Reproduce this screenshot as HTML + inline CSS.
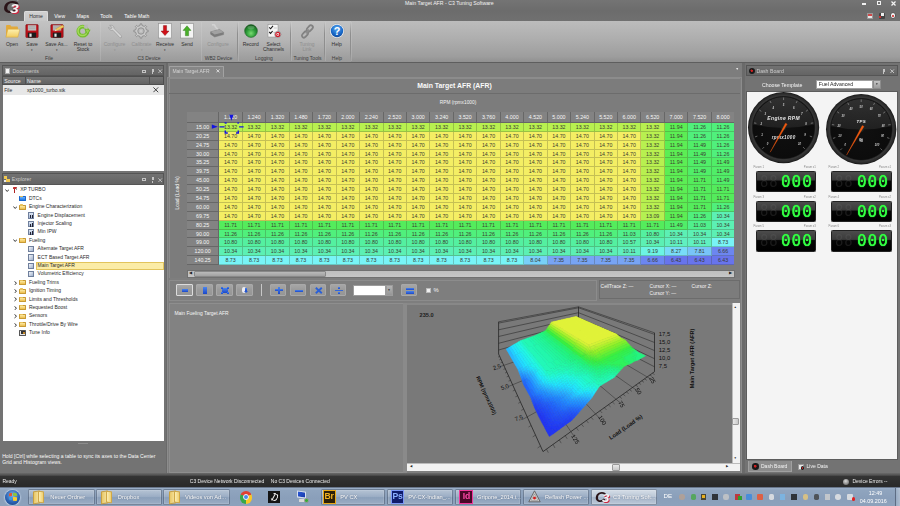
<!DOCTYPE html>
<html lang="en">
<head>
<meta charset="utf-8">
<title>Main Target AFR - C3 Tuning Software</title>
<style>
*{box-sizing:border-box;margin:0;padding:0}
html,body{width:900px;height:506px;overflow:hidden}
body{position:relative;background:#7d7d7d;font-family:"Liberation Sans",sans-serif;font-size:5px;color:#fff;line-height:1.15}
#app{position:absolute;left:0;top:0;width:900px;height:506px;overflow:hidden;filter:blur(0.45px)}
.a{position:absolute;white-space:nowrap}
.c{text-align:center}
/* title + ribbon */
#title{left:0;top:0;width:900px;height:21px;background:linear-gradient(#747474,#6c6c6c 50%,#707070)}
#ribbon{left:0;top:21px;width:900px;height:41.5px;background:linear-gradient(#bcbcbc,#adadad 45%,#9d9d9d 85%,#8e8e8e)}
#ribbonL{left:0;top:21px;width:351px;height:41px;background:linear-gradient(#c3c3c3,#b6b6b6 45%,#a4a4a4 80%,#9a9a9a)}
.gsep{top:22px;width:0.7px;height:39px;background:linear-gradient(rgba(120,120,120,0),#8e8e8e 30%,#8e8e8e 80%,rgba(120,120,120,0));box-shadow:0.7px 0 0 rgba(220,220,220,.3)}
.glab{top:56.4px;color:#3c3c3c;font-size:5px;text-align:center}
.rb{top:41.7px;color:#2f2f2f;font-size:5px;text-align:center;line-height:5.6px}
.rb.dis{color:#8f8f8f}
.tab{top:13.5px;font-size:5.1px;color:#fff}
/* panels */
.phead{height:11px;background:linear-gradient(#727272,#646464);border:0.5px solid #555;color:#cccccc;font-size:5.2px;line-height:10.5px}
.white{background:#fff}
/* grid */
.grid{position:absolute;font-size:5.3px}
.grid div{position:absolute;text-align:center;white-space:nowrap;overflow:hidden}
.hc{background:#838383;color:#f6f6f6;border-right:0.6px solid #676767;border-bottom:0.6px solid #676767}
.hc.rh{text-align:center;padding-left:0}
.dc{color:#3c3c30;border-right:0.5px solid rgba(60,60,40,.26);border-bottom:0.5px solid rgba(60,60,40,.26);line-height:9.3px}
.tbtn{top:284.3px;width:16.5px;height:11.7px;border:0.6px solid #a8a8a8;border-radius:1px;background:linear-gradient(#a6a6a6,#9a9a9a 50%,#969696)}
.tbtn i{position:absolute;background:linear-gradient(#4a84ec,#1c48c8)}
/* tree */
.tr{left:0;height:7.75px;font-size:5px;color:#2a2a2a;line-height:7.75px}
.fold{position:absolute;width:6.4px;height:5px;top:1.5px;background:linear-gradient(#fbe9a4,#eebe4c);border:0.4px solid #c89a34;border-radius:0.6px}
.fold:before{content:"";position:absolute;left:-0.4px;top:-1.3px;width:3px;height:1.2px;background:#e9c25a;border-radius:0.5px 0.5px 0 0}
.doc{position:absolute;width:5.2px;height:6.2px;top:0.8px;background:linear-gradient(135deg,#f4f6fa,#9fb0cc);border:0.4px solid #6f7f9c}
.arr{position:absolute;top:0;font-size:4px;color:#333}
/* taskbar */
#task{left:0;top:487px;width:900px;height:19px;background:linear-gradient(#a2b6ce,#8fa4be 18%,#8a9fba 60%,#8da2bc)}
.tb{top:488.6px;height:16.6px;border:0.6px solid rgba(60,75,100,.5);border-radius:1.5px;background:linear-gradient(rgba(255,255,255,.34),rgba(255,255,255,.14) 48%,rgba(255,255,255,.02) 52%,rgba(255,255,255,.12));box-shadow:inset 0 0 0 0.5px rgba(255,255,255,.22);color:#fff;font-size:5.7px;line-height:15.8px;text-shadow:0 0 1.2px rgba(40,50,70,.55)}
.tb span{position:absolute;top:0}
</style>
</head>
<body>
<div id="app">
<div id="title" class="a"></div>
<div class="a" style="left:405px;top:1.3px;font-size:5.2px;color:#f2f2f2">Main Target AFR - C3 Tuning Software</div>
<!-- logo -->
<div class="a" style="left:2.6px;top:-1.2px;font-size:16.5px;font-weight:bold;font-style:italic;color:#2a1418;line-height:16px;letter-spacing:-1px;transform:scaleX(1.3);transform-origin:0 0">C</div>
<div class="a" style="left:9.6px;top:3px;font-size:12.5px;font-weight:bold;font-style:italic;color:#f4f4f4;line-height:13px;text-shadow:0.9px 0.7px 0 #d02840;transform:scaleX(1.25);transform-origin:0 0">3</div>
<div class="a" style="left:17px;top:0.2px;font-size:4px;color:#ddd;letter-spacing:0.3px">"</div>
<!-- window controls -->
<div class="a" style="left:862px;top:3.4px;width:3.8px;height:1.4px;background:#f0f0f0"></div>
<div class="a" style="left:877.2px;top:1.2px;width:4.2px;height:3.8px;border:0.9px solid #f0f0f0;border-top-width:1.4px"></div>
<svg class="a" style="left:890.8px;top:0.8px" width="5" height="5" viewBox="0 0 5 5"><path d="M0.5 0.5L4.5 4.5M4.5 0.5L0.5 4.5" stroke="#f4f4f4" stroke-width="1.2"/></svg>
<!-- small right icons -->
<div class="a" style="left:866.5px;top:12.5px;width:6px;height:6px;background:#e8e8e8;border:0.5px solid #999"><div class="a" style="left:0.8px;top:0.8px;width:3.6px;height:2px;background:#d04848"></div></div>
<div class="a" style="left:878.5px;top:12.5px;width:6.4px;height:6px;background:#444;border-radius:1px"><div class="a" style="left:2.6px;top:0.6px;width:3px;height:2.6px;background:#eee"></div><div class="a" style="left:0.4px;top:3.6px;width:2px;height:1.6px;background:#d03030"></div></div>
<div class="a" style="left:889.5px;top:12.3px;width:6.6px;height:6.4px;background:#f0f0f0;border-radius:3px;border:0.6px solid #555"><div class="a" style="left:1.8px;top:1.6px;width:2px;height:2px;background:#d02020;border-radius:1px"></div></div>
<!-- ribbon -->
<div id="ribbon" class="a"></div>
<div id="ribbonL" class="a"></div>
<div class="a" style="left:0;top:62px;width:900px;height:1.2px;background:#5e5e5e"></div>
<div class="a" style="left:24.2px;top:11px;width:23.6px;height:10.4px;background:linear-gradient(#d0d0d0,#c6c6c6);border:0.5px solid #dcdcdc;border-bottom:0;border-radius:1.5px 1.5px 0 0"></div>
<div class="a tab" style="left:29.3px;color:#303030">Home</div>
<div class="a tab" style="left:54.2px">View</div>
<div class="a tab" style="left:76.5px">Maps</div>
<div class="a tab" style="left:100.3px">Tools</div>
<div class="a tab" style="left:124.3px">Table Math</div>
<div class="a gsep" style="left:98.5px"></div>
<div class="a gsep" style="left:199.8px"></div>
<div class="a gsep" style="left:237.3px"></div>
<div class="a gsep" style="left:290.3px"></div>
<div class="a gsep" style="left:324.3px"></div>
<div class="a gsep" style="left:350px"></div>
<div class="a glab" style="left:29px;width:40px">File</div>
<div class="a glab" style="left:129px;width:40px">C3 Device</div>
<div class="a glab" style="left:198.5px;width:40px">WB2 Device</div>
<div class="a glab" style="left:244px;width:40px">Logging</div>
<div class="a glab" style="left:287.5px;width:40px">Tuning Tools</div>
<div class="a glab" style="left:317px;width:40px">Help</div>
<!-- ribbon button labels -->
<div class="a rb" style="left:-8px;width:40px">Open</div>
<div class="a rb" style="left:12px;width:40px">Save<br><span style="font-size:3px;position:relative;top:0px">&#9662;</span></div>
<div class="a rb" style="left:36.5px;width:40px">Save As...<br><span style="font-size:3px;position:relative;top:0px">&#9662;</span></div>
<div class="a rb" style="left:63px;width:40px">Reset to<br>Stock</div>
<div class="a rb dis" style="left:94.5px;width:40px">Configure<br><span style="font-size:3px;position:relative;top:0px">&#9662;</span></div>
<div class="a rb dis" style="left:121.5px;width:40px">Calibrate<br><span style="font-size:3px;position:relative;top:0px">&#9662;</span></div>
<div class="a rb" style="left:145px;width:40px">Receive<br><span style="font-size:3px;position:relative;top:0px">&#9662;</span></div>
<div class="a rb" style="left:167px;width:40px">Send</div>
<div class="a rb dis" style="left:198px;width:40px">Configure</div>
<div class="a rb" style="left:230.7px;width:40px">Record</div>
<div class="a rb" style="left:253.5px;width:40px">Select<br>Channels</div>
<div class="a rb dis" style="left:287px;width:40px">Tuning<br>Link</div>
<div class="a rb" style="left:316.7px;width:40px">Help</div>
<!-- ribbon icons -->
<svg class="a" style="left:4.6px;top:24px" width="15.6" height="14" viewBox="0 0 15 13.4"><defs><linearGradient id="fo" x1="0" y1="0" x2="0" y2="1"><stop offset="0" stop-color="#fdf0b0"/><stop offset="1" stop-color="#f2cc60"/></linearGradient></defs><path d="M1 2Q1 1 1.9 1H5L6.2 2.4H11.6Q12.4 2.4 12.4 3.2V12H1Z" fill="#e2aa3c"/><path d="M2.8 5H14.2L12.4 12.6H0.9Z" fill="url(#fo)" stroke="#d4a030" stroke-width="0.4"/></svg>
<svg class="a" style="left:25.4px;top:23.8px" width="14" height="14.4" viewBox="0 0 14 14.4"><rect x="0.8" y="0.6" width="12.4" height="13" rx="0.8" fill="#be1018" stroke="#6c0c10" stroke-width="0.5"/><rect x="2.8" y="1.2" width="8.4" height="5.4" fill="#bcbcbc"/><path d="M3.6 2.8H10.4M3.6 4.4H10.4" stroke="#9a9a9a" stroke-width="0.4"/><rect x="2.8" y="8.6" width="8.4" height="5" fill="#1c1c1c"/><rect x="4.4" y="9.6" width="2.2" height="3.2" fill="#e4e4e4"/></svg>
<svg class="a" style="left:49.9px;top:23.8px" width="15" height="14.4" viewBox="0 0 15 14.4"><rect x="0.8" y="0.6" width="12.4" height="13" rx="0.8" fill="#be1018" stroke="#6c0c10" stroke-width="0.5"/><rect x="2.8" y="1.2" width="8.4" height="5.4" fill="#b0b0b0"/><rect x="2.8" y="8.6" width="8.4" height="5" fill="#1c1c1c"/><rect x="4.4" y="9.6" width="2.2" height="3.2" fill="#e4e4e4"/><path d="M5.4 5.2L12.4 1L14.2 3L7 6.8Z" fill="#f0c860" stroke="#b08020" stroke-width="0.3"/><path d="M5.4 5.2L4.6 7.2L7 6.8Z" fill="#e8e0d0"/></svg>
<svg class="a" style="left:75.8px;top:24.2px" width="15" height="14" viewBox="0 0 15 14"><circle cx="6.8" cy="7.2" r="4.5" fill="none" stroke="#74bc30" stroke-width="3.7"/><circle cx="6.6" cy="6.9" r="4.6" fill="none" stroke="#a6da5c" stroke-width="1.5"/><rect x="8.2" y="0.6" width="3.6" height="4" fill="#b8b8b8"/><path d="M8.4 5.2L14.6 5.8L11.6 11Z" fill="#6cb42c"/><path d="M9.6 5.8L13.4 6.2L11.5 9.4Z" fill="#98d250"/></svg>
<svg class="a" style="left:106.5px;top:23.6px" width="17" height="16" viewBox="0 0 17 16"><path d="M2.6 1.4Q6.8 0.6 7.2 4.6L14.6 12Q15.2 14.2 13 13.8L5.8 6.2Q2.2 7 1.4 3.4L3.8 5L5.2 3.6Z" fill="#d6d6d6" stroke="#9a9a9a" stroke-width="0.7"/></svg>
<svg class="a" style="left:133.3px;top:23.1px" width="16" height="16" viewBox="0 0 16 16"><path d="M13.52 7.04L15.16 7.21L15.16 8.79L13.52 8.96L12.58 11.22L13.62 12.50L12.50 13.62L11.22 12.58L8.96 13.52L8.79 15.16L7.21 15.16L7.04 13.52L4.78 12.58L3.50 13.62L2.38 12.50L3.42 11.22L2.48 8.96L0.84 8.79L0.84 7.21L2.48 7.04L3.42 4.78L2.38 3.50L3.50 2.38L4.78 3.42L7.04 2.48L7.21 0.84L8.79 0.84L8.96 2.48L11.22 3.42L12.50 2.38L13.62 3.50L12.58 4.78Z" fill="#c9c9c9" stroke="#8c8c8c" stroke-width="0.9" stroke-linejoin="round"/><circle cx="8" cy="8" r="3.2" fill="#bcbcbc" stroke="#8c8c8c" stroke-width="0.9"/><circle cx="8" cy="8" r="1.2" fill="#c8c8c8"/></svg>
<svg class="a" style="left:158px;top:23.3px" width="14" height="16" viewBox="0 0 14 16"><rect x="0.6" y="0.6" width="12.8" height="14.4" fill="#f4f4f4" stroke="#909090" stroke-width="0.6"/><path d="M5.4 2.6H8.6V8H11L7 12.6L3 8H5.4Z" fill="#d01018" stroke="#7a0a0a" stroke-width="0.4"/></svg>
<svg class="a" style="left:180px;top:23.3px" width="14" height="16" viewBox="0 0 14 16"><rect x="0.6" y="0.6" width="12.8" height="14.4" fill="#f4f4f4" stroke="#909090" stroke-width="0.6"/><path d="M5.4 12.8H8.6V7.4H11L7 2.8L3 7.4H5.4Z" fill="#48b028" stroke="#2a6a18" stroke-width="0.4"/></svg>
<svg class="a" style="left:209.4px;top:23.8px" width="16" height="14" viewBox="0 0 16 14"><path d="M3 0.8Q6 0.2 6.4 2.8L9.4 6" fill="none" stroke="#d2d2d2" stroke-width="1.7"/><path d="M1.6 7.8L10.4 5.4L14.6 8.2L14.6 10.6L5.6 13L1.6 10.2Z" fill="#7c7c7c" stroke="#747474" stroke-width="0.4"/><path d="M1.6 7.8L10.4 5.4L14.6 8.2L5.6 10.6Z" fill="#a2a2a2"/></svg>
<svg class="a" style="left:243.8px;top:24.2px" width="14" height="14" viewBox="0 0 14 14"><defs><radialGradient id="gb" cx="0.5" cy="0.68" r="0.62"><stop offset="0" stop-color="#78dc70"/><stop offset="0.55" stop-color="#2e9c3a"/><stop offset="0.9" stop-color="#1c7426"/><stop offset="1" stop-color="#155a1c"/></radialGradient></defs><circle cx="7" cy="7" r="6.4" fill="url(#gb)" stroke="#1a5c20" stroke-width="0.5"/><ellipse cx="7" cy="3.6" rx="3.6" ry="1.8" fill="rgba(255,255,255,.18)"/></svg>
<svg class="a" style="left:266.6px;top:23.6px" width="16" height="15" viewBox="0 0 16 15"><rect x="1" y="0.6" width="10" height="12.4" fill="#f6f6f6" stroke="#8a8a8a" stroke-width="0.5"/><path d="M2.2 3.4L3.6 4.8L6 1.8M2.2 8L3.6 9.4L5.6 7" stroke="#1a1a1a" stroke-width="1.1" fill="none"/><path d="M6.8 4H9.8M6.4 8.4H8" stroke="#999" stroke-width="0.5"/><circle cx="10.8" cy="10.4" r="3.1" fill="#f0f0f0" stroke="#555" stroke-width="0.5"/><circle cx="10.8" cy="10.4" r="2" fill="none" stroke="#d01828" stroke-width="1.2"/><circle cx="10.8" cy="10.4" r="0.7" fill="#d01828"/></svg>
<svg class="a" style="left:299.5px;top:24px" width="15" height="15" viewBox="0 0 15 15"><g fill="none" stroke="#828282" stroke-width="1.8"><rect x="7.8" y="0.8" width="4" height="7.2" rx="2" transform="rotate(42 9.8 4.4)"/><rect x="3" y="6.8" width="4" height="7.2" rx="2" transform="rotate(42 5 10.4)"/></g><path d="M5.8 9.4L9.2 5.6" stroke="#8e8e8e" stroke-width="1.6"/></svg>
<svg class="a" style="left:329px;top:23.2px" width="16" height="16" viewBox="0 0 16 16"><defs><radialGradient id="hb" cx="0.5" cy="0.3" r="0.8"><stop offset="0" stop-color="#58a8f0"/><stop offset="0.6" stop-color="#1868c8"/><stop offset="1" stop-color="#0c3c88"/></radialGradient></defs><circle cx="8" cy="8" r="7.3" fill="#f4f4f4" stroke="#9a9a9a" stroke-width="0.5"/><circle cx="8" cy="8" r="6.2" fill="url(#hb)"/><text x="8" y="11.8" font-family="Liberation Sans, sans-serif" font-weight="bold" font-size="10.8" fill="#fff" text-anchor="middle">?</text></svg>

<!-- Documents panel -->
<div class="a" style="left:0;top:63.2px;width:165.5px;height:412px;background:#737373"></div>
<div class="a phead" style="left:2px;top:65px;width:161.8px"><span class="a" style="left:9.6px">Documents</span>
 <div class="a" style="left:2px;top:2.2px;width:5px;height:6px;background:#f2f2f2;border:0.4px solid #aaa"></div>
 <div class="a" style="left:138.6px;top:3.6px;width:4.2px;height:3px;border:0.7px solid #c4c4c4"></div>
 <div class="a" style="left:148.6px;top:2.6px;width:2.2px;height:3.2px;border:0.5px solid #c4c4c4;border-bottom-width:0.8px"></div><div class="a" style="left:149.3px;top:6px;width:0.6px;height:2px;background:#c4c4c4"></div>
 <svg class="a" style="left:155.4px;top:3px" width="4.4" height="4.4" viewBox="0 0 4.4 4.4"><path d="M0.4 0.4L4 4M4 0.4L0.4 4" stroke="#c4c4c4" stroke-width="0.9"/></svg>
</div>
<div class="a" style="left:2px;top:76px;width:161.8px;height:9.2px;background:linear-gradient(#747474,#626262);border:0.5px solid #4e4e4e;font-size:5.2px;line-height:8.6px;color:#f0f0f0">
 <span class="a" style="left:1.2px">Source</span><span class="a" style="left:24px">Name</span>
 <div class="a" style="left:22px;top:0;width:0.6px;height:9px;background:#505050"></div><div class="a" style="left:146px;top:0;width:0.6px;height:9px;background:#505050"></div>
</div>
<div class="a white" style="left:2.6px;top:85.2px;width:161px;height:85.4px"></div>
<div class="a" style="left:2.6px;top:85.2px;width:161px;height:9.6px;background:#e7e7e7;color:#2c2c2c;font-size:5px;line-height:11px"><span class="a" style="left:1.6px">File</span><span class="a" style="left:24.4px">xp1000_turbo.stk</span>
 <svg class="a" style="left:150.6px;top:2.2px" width="5.6" height="5.6" viewBox="0 0 5.6 5.6"><path d="M0.4 0.4L5.2 5.2M5.2 0.4L0.4 5.2" stroke="#1c1c1c" stroke-width="0.8"/></svg></div>
<!-- Explorer panel -->
<div class="a phead" style="left:2px;top:173.4px;width:161.8px;height:11.4px"><span class="a" style="left:8.8px">Explorer</span>
 <div class="a" style="left:1.2px;top:1.6px;width:3.2px;height:2.6px;background:#f0c850"></div><div class="a" style="left:3.2px;top:4.4px;width:3.6px;height:3px;background:#f0c850"></div><div class="a" style="left:0.8px;top:5.6px;width:2px;height:2px;background:#e8e8e8"></div>
 <div class="a" style="left:138.6px;top:3.8000000000000003px;width:4.2px;height:3px;border:0.7px solid #c4c4c4"></div>
 <div class="a" style="left:148.6px;top:2.8000000000000003px;width:2.2px;height:3.2px;border:0.5px solid #c4c4c4;border-bottom-width:0.8px"></div><div class="a" style="left:149.3px;top:6.2px;width:0.6px;height:2px;background:#c4c4c4"></div>
 <svg class="a" style="left:155.4px;top:3.2px" width="4.4" height="4.4" viewBox="0 0 4.4 4.4"><path d="M0.4 0.4L4 4M4 0.4L0.4 4" stroke="#c4c4c4" stroke-width="0.9"/></svg>
</div>
<div class="a white" style="left:2.6px;top:184.8px;width:161px;height:256.4px">
<div class="a tr" style="top:1.60px;width:161px"><svg class="a" style="left:2.0px;top:2.4px" width="4.4" height="3.2" viewBox="0 0 4.4 3.2"><path d="M0.4 0.5L2.2 2.5L4 0.5" stroke="#2a2a2a" stroke-width="0.95" fill="none"/></svg><div class="a" style="left:11.2px;top:1.4px;width:1.2px;height:5.4px;background:#b02020"></div><div class="a" style="left:10.6px;top:0.8px;width:3.6px;height:1.6px;background:#c03030;border-radius:0.6px"></div><div class="a" style="left:13.0px;top:2px;width:1.6px;height:2px;background:#9c9c9c"></div><span class="a" style="left:17.6px">XP TURBO</span></div>
<div class="a tr" style="top:10.00px;width:161px"><div class="fold" style="left:16.9px;background:linear-gradient(#6cb4ff,#1c78e8);border-color:#1a66cc"></div><span class="a" style="left:26.3px">DTCs</span></div>
<div class="a tr" style="top:18.40px;width:161px"><svg class="a" style="left:10.2px;top:2.4px" width="4.4" height="3.2" viewBox="0 0 4.4 3.2"><path d="M0.4 0.5L2.2 2.5L4 0.5" stroke="#2a2a2a" stroke-width="0.95" fill="none"/></svg><div class="fold" style="left:16.9px"></div><span class="a" style="left:26.3px">Engine Characterization</span></div>
<div class="a tr" style="top:26.80px;width:161px"><div class="doc" style="left:25.8px;background:linear-gradient(#dde6f4,#a8b8d4)"><div class="a" style="left:0.7px;top:1.8px;width:1px;height:3px;background:#223"></div><div class="a" style="left:2.5px;top:1.2px;width:1.2px;height:3.6px;background:#223"></div></div><span class="a" style="left:35px">Engine Displacement</span></div>
<div class="a tr" style="top:35.20px;width:161px"><div class="doc" style="left:25.8px;background:linear-gradient(#dde6f4,#a8b8d4)"><div class="a" style="left:0.7px;top:1.8px;width:1px;height:3px;background:#223"></div><div class="a" style="left:2.5px;top:1.2px;width:1.2px;height:3.6px;background:#223"></div></div><span class="a" style="left:35px">Injector Scaling</span></div>
<div class="a tr" style="top:43.60px;width:161px"><div class="doc" style="left:25.8px;background:linear-gradient(#dde6f4,#a8b8d4)"><div class="a" style="left:0.7px;top:1.8px;width:1px;height:3px;background:#223"></div><div class="a" style="left:2.5px;top:1.2px;width:1.2px;height:3.6px;background:#223"></div></div><span class="a" style="left:35px">Min IPW</span></div>
<div class="a tr" style="top:52.00px;width:161px"><svg class="a" style="left:10.2px;top:2.4px" width="4.4" height="3.2" viewBox="0 0 4.4 3.2"><path d="M0.4 0.5L2.2 2.5L4 0.5" stroke="#2a2a2a" stroke-width="0.95" fill="none"/></svg><div class="fold" style="left:16.9px"></div><span class="a" style="left:26.3px">Fueling</span></div>
<div class="a tr" style="top:60.40px;width:161px"><div class="doc" style="left:25.8px"></div><span class="a" style="left:35px">Alternate Target AFR</span></div>
<div class="a tr" style="top:68.80px;width:161px"><div class="doc" style="left:25.8px"></div><span class="a" style="left:35px">ECT Based Target AFR</span></div>
<div class="a tr" style="top:77.20px;width:161px"><div class="a" style="left:33.4px;top:0.2px;width:127.6px;height:7.5px;background:#fbeca6;border:0.5px solid #e2c45c"></div><div class="doc" style="left:25.8px"></div><span class="a" style="left:35px">Main Target AFR</span></div>
<div class="a tr" style="top:85.60px;width:161px"><div class="doc" style="left:25.8px"></div><span class="a" style="left:35px">Volumetric Efficiency</span></div>
<div class="a tr" style="top:94.00px;width:161px"><svg class="a" style="left:11.1px;top:1.8px" width="3.2" height="4.4" viewBox="0 0 3.2 4.4"><path d="M0.5 0.4L2.5 2.2L0.5 4" stroke="#2a2a2a" stroke-width="0.95" fill="none"/></svg><div class="fold" style="left:16.9px"></div><span class="a" style="left:26.3px">Fueling Trims</span></div>
<div class="a tr" style="top:102.40px;width:161px"><svg class="a" style="left:11.1px;top:1.8px" width="3.2" height="4.4" viewBox="0 0 3.2 4.4"><path d="M0.5 0.4L2.5 2.2L0.5 4" stroke="#2a2a2a" stroke-width="0.95" fill="none"/></svg><div class="fold" style="left:16.9px"></div><span class="a" style="left:26.3px">Ignition Timing</span></div>
<div class="a tr" style="top:110.80px;width:161px"><svg class="a" style="left:11.1px;top:1.8px" width="3.2" height="4.4" viewBox="0 0 3.2 4.4"><path d="M0.5 0.4L2.5 2.2L0.5 4" stroke="#2a2a2a" stroke-width="0.95" fill="none"/></svg><div class="fold" style="left:16.9px"></div><span class="a" style="left:26.3px">Limits and Thresholds</span></div>
<div class="a tr" style="top:119.20px;width:161px"><svg class="a" style="left:11.1px;top:1.8px" width="3.2" height="4.4" viewBox="0 0 3.2 4.4"><path d="M0.5 0.4L2.5 2.2L0.5 4" stroke="#2a2a2a" stroke-width="0.95" fill="none"/></svg><div class="fold" style="left:16.9px"></div><span class="a" style="left:26.3px">Requested Boost</span></div>
<div class="a tr" style="top:127.60px;width:161px"><svg class="a" style="left:11.1px;top:1.8px" width="3.2" height="4.4" viewBox="0 0 3.2 4.4"><path d="M0.5 0.4L2.5 2.2L0.5 4" stroke="#2a2a2a" stroke-width="0.95" fill="none"/></svg><div class="fold" style="left:16.9px"></div><span class="a" style="left:26.3px">Sensors</span></div>
<div class="a tr" style="top:136.00px;width:161px"><svg class="a" style="left:11.1px;top:1.8px" width="3.2" height="4.4" viewBox="0 0 3.2 4.4"><path d="M0.5 0.4L2.5 2.2L0.5 4" stroke="#2a2a2a" stroke-width="0.95" fill="none"/></svg><div class="fold" style="left:16.9px"></div><span class="a" style="left:26.3px">Throttle/Drive By Wire</span></div>
<div class="a tr" style="top:144.40px;width:161px"><div class="a" style="left:16.9px;top:0.8px;width:6.6px;height:6.2px;background:#e8e8e8;border:0.5px solid #555;border-radius:0.6px"><div class="a" style="left:0.4px;top:0.4px;width:4.6px;height:3px;background:#333"></div><div class="a" style="left:2.4px;top:0.6px;width:2.6px;height:2px;background:#f0a020;border-radius:1px"></div></div><span class="a" style="left:26.3px">Tune Info</span></div>
</div>
<div class="a" style="left:2.2px;top:454px;font-size:5.1px;line-height:5.8px;color:#fafafa;white-space:normal;width:160px">Hold [Ctrl] while selecting a table to sync its axes to the Data Center<br>Grid and Histogram views.</div>
<div class="a" style="left:78px;top:443px;width:10px;height:0.6px;background:#8c8c8c"></div>
<!-- center document area -->
<div class="a" style="left:165.5px;top:63.2px;width:2px;height:412px;background:#6a6a6a"></div>
<div class="a" style="left:169px;top:66px;width:54.6px;height:11px;background:#868686;border:0.6px solid #a2a2a2;border-bottom:0;border-radius:1px 1px 0 0"></div>
<div class="a" style="left:172.4px;top:68.8px;font-size:5px;color:#d4d4d4">Main Target AFR</div>
<svg class="a" style="left:216.2px;top:69px" width="3.8" height="3.8" viewBox="0 0 3.8 3.8"><path d="M0.4 0.4L3.4 3.4M3.4 0.4L0.4 3.4" stroke="#f0f0f0" stroke-width="0.8"/></svg>
<div class="a" style="left:735.6px;top:67.6px;font-size:3.4px;color:#f0f0f0">&#9660;</div>
<div class="a" style="left:167.4px;top:76.8px;width:574.4px;height:397px;border:0.6px solid #8c8c8c;background:#7e7e7e"></div>
<div class="a" style="left:169px;top:78.2px;width:571.4px;height:200px;border-top:0.5px solid #8c8c8c;border-left:0.5px solid #8c8c8c;background:#7c7c7c"></div>
<div class="a" style="left:169px;top:93.4px;width:571.4px;height:0.6px;background:#6c6c6c"></div>
<div class="a c" style="left:354.5px;top:81.8px;width:200px;font-size:6.9px;font-weight:bold;color:#fafafa">Main Target AFR (AFR)</div>
<div class="a c" style="left:358px;top:99.6px;width:200px;font-size:4.8px;color:#f4f4f4">RPM (rpmx1000)</div>
<div class="a c" style="left:128.4px;top:190px;width:100px;font-size:5.1px;color:#f8f8f8;transform:rotate(-90deg);transform-origin:50% 50%">Load (Load %)</div>
<div class="grid" style="left:186.9px;top:112.0px;width:547.60px;height:153.06px;overflow:hidden">
<div class="hc" style="left:0;top:0;width:32.5px;height:10.9px"></div>
<div class="hc" style="left:32.50px;top:0;width:23.45px;height:10.9px;line-height:11.5px">1.120</div>
<div class="hc" style="left:55.95px;top:0;width:23.45px;height:10.9px;line-height:11.5px">1.240</div>
<div class="hc" style="left:79.40px;top:0;width:23.45px;height:10.9px;line-height:11.5px">1.320</div>
<div class="hc" style="left:102.85px;top:0;width:23.45px;height:10.9px;line-height:11.5px">1.480</div>
<div class="hc" style="left:126.30px;top:0;width:23.45px;height:10.9px;line-height:11.5px">1.720</div>
<div class="hc" style="left:149.75px;top:0;width:23.45px;height:10.9px;line-height:11.5px">2.000</div>
<div class="hc" style="left:173.20px;top:0;width:23.45px;height:10.9px;line-height:11.5px">2.240</div>
<div class="hc" style="left:196.65px;top:0;width:23.45px;height:10.9px;line-height:11.5px">2.520</div>
<div class="hc" style="left:220.10px;top:0;width:23.45px;height:10.9px;line-height:11.5px">3.000</div>
<div class="hc" style="left:243.55px;top:0;width:23.45px;height:10.9px;line-height:11.5px">3.240</div>
<div class="hc" style="left:267.00px;top:0;width:23.45px;height:10.9px;line-height:11.5px">3.520</div>
<div class="hc" style="left:290.45px;top:0;width:23.45px;height:10.9px;line-height:11.5px">3.760</div>
<div class="hc" style="left:313.90px;top:0;width:23.45px;height:10.9px;line-height:11.5px">4.000</div>
<div class="hc" style="left:337.35px;top:0;width:23.45px;height:10.9px;line-height:11.5px">4.520</div>
<div class="hc" style="left:360.80px;top:0;width:23.45px;height:10.9px;line-height:11.5px">5.000</div>
<div class="hc" style="left:384.25px;top:0;width:23.45px;height:10.9px;line-height:11.5px">5.240</div>
<div class="hc" style="left:407.70px;top:0;width:23.45px;height:10.9px;line-height:11.5px">5.520</div>
<div class="hc" style="left:431.15px;top:0;width:23.45px;height:10.9px;line-height:11.5px">6.000</div>
<div class="hc" style="left:454.60px;top:0;width:23.45px;height:10.9px;line-height:11.5px">6.520</div>
<div class="hc" style="left:478.05px;top:0;width:23.45px;height:10.9px;line-height:11.5px">7.000</div>
<div class="hc" style="left:501.50px;top:0;width:23.45px;height:10.9px;line-height:11.5px">7.520</div>
<div class="hc" style="left:524.95px;top:0;width:23.45px;height:10.9px;line-height:11.5px">8.000</div>
<div class="hc rh" style="left:0;top:10.90px;width:32.5px;height:8.885px;line-height:9.285px">15.00</div>
<div class="dc" style="left:32.50px;top:10.90px;width:23.45px;height:8.885px;background:#b8f050">13.32</div>
<div class="dc" style="left:55.95px;top:10.90px;width:23.45px;height:8.885px;background:#b8f050">13.32</div>
<div class="dc" style="left:79.40px;top:10.90px;width:23.45px;height:8.885px;background:#b8f050">13.32</div>
<div class="dc" style="left:102.85px;top:10.90px;width:23.45px;height:8.885px;background:#b8f050">13.32</div>
<div class="dc" style="left:126.30px;top:10.90px;width:23.45px;height:8.885px;background:#b8f050">13.32</div>
<div class="dc" style="left:149.75px;top:10.90px;width:23.45px;height:8.885px;background:#b8f050">13.32</div>
<div class="dc" style="left:173.20px;top:10.90px;width:23.45px;height:8.885px;background:#b8f050">13.32</div>
<div class="dc" style="left:196.65px;top:10.90px;width:23.45px;height:8.885px;background:#b8f050">13.32</div>
<div class="dc" style="left:220.10px;top:10.90px;width:23.45px;height:8.885px;background:#b8f050">13.32</div>
<div class="dc" style="left:243.55px;top:10.90px;width:23.45px;height:8.885px;background:#b8f050">13.32</div>
<div class="dc" style="left:267.00px;top:10.90px;width:23.45px;height:8.885px;background:#b8f050">13.32</div>
<div class="dc" style="left:290.45px;top:10.90px;width:23.45px;height:8.885px;background:#b8f050">13.32</div>
<div class="dc" style="left:313.90px;top:10.90px;width:23.45px;height:8.885px;background:#b8f050">13.32</div>
<div class="dc" style="left:337.35px;top:10.90px;width:23.45px;height:8.885px;background:#b8f050">13.32</div>
<div class="dc" style="left:360.80px;top:10.90px;width:23.45px;height:8.885px;background:#b8f050">13.32</div>
<div class="dc" style="left:384.25px;top:10.90px;width:23.45px;height:8.885px;background:#b8f050">13.32</div>
<div class="dc" style="left:407.70px;top:10.90px;width:23.45px;height:8.885px;background:#b8f050">13.32</div>
<div class="dc" style="left:431.15px;top:10.90px;width:23.45px;height:8.885px;background:#b8f050">13.32</div>
<div class="dc" style="left:454.60px;top:10.90px;width:23.45px;height:8.885px;background:#b8f050">13.32</div>
<div class="dc" style="left:478.05px;top:10.90px;width:23.45px;height:8.885px;background:#5cee54">11.94</div>
<div class="dc" style="left:501.50px;top:10.90px;width:23.45px;height:8.885px;background:#50f07c">11.26</div>
<div class="dc" style="left:524.95px;top:10.90px;width:23.45px;height:8.885px;background:#50f07c">11.26</div>
<div class="hc rh" style="left:0;top:19.79px;width:32.5px;height:8.885px;line-height:9.285px">20.25</div>
<div class="dc" style="left:32.50px;top:19.79px;width:23.45px;height:8.885px;background:#f4ee64">14.70</div>
<div class="dc" style="left:55.95px;top:19.79px;width:23.45px;height:8.885px;background:#f4ee64">14.70</div>
<div class="dc" style="left:79.40px;top:19.79px;width:23.45px;height:8.885px;background:#f4ee64">14.70</div>
<div class="dc" style="left:102.85px;top:19.79px;width:23.45px;height:8.885px;background:#f4ee64">14.70</div>
<div class="dc" style="left:126.30px;top:19.79px;width:23.45px;height:8.885px;background:#f4ee64">14.70</div>
<div class="dc" style="left:149.75px;top:19.79px;width:23.45px;height:8.885px;background:#f4ee64">14.70</div>
<div class="dc" style="left:173.20px;top:19.79px;width:23.45px;height:8.885px;background:#f4ee64">14.70</div>
<div class="dc" style="left:196.65px;top:19.79px;width:23.45px;height:8.885px;background:#f4ee64">14.70</div>
<div class="dc" style="left:220.10px;top:19.79px;width:23.45px;height:8.885px;background:#f4ee64">14.70</div>
<div class="dc" style="left:243.55px;top:19.79px;width:23.45px;height:8.885px;background:#f4ee64">14.70</div>
<div class="dc" style="left:267.00px;top:19.79px;width:23.45px;height:8.885px;background:#f4ee64">14.70</div>
<div class="dc" style="left:290.45px;top:19.79px;width:23.45px;height:8.885px;background:#f4ee64">14.70</div>
<div class="dc" style="left:313.90px;top:19.79px;width:23.45px;height:8.885px;background:#f4ee64">14.70</div>
<div class="dc" style="left:337.35px;top:19.79px;width:23.45px;height:8.885px;background:#f4ee64">14.70</div>
<div class="dc" style="left:360.80px;top:19.79px;width:23.45px;height:8.885px;background:#f4ee64">14.70</div>
<div class="dc" style="left:384.25px;top:19.79px;width:23.45px;height:8.885px;background:#f4ee64">14.70</div>
<div class="dc" style="left:407.70px;top:19.79px;width:23.45px;height:8.885px;background:#f4ee64">14.70</div>
<div class="dc" style="left:431.15px;top:19.79px;width:23.45px;height:8.885px;background:#f4ee64">14.70</div>
<div class="dc" style="left:454.60px;top:19.79px;width:23.45px;height:8.885px;background:#b8f050">13.32</div>
<div class="dc" style="left:478.05px;top:19.79px;width:23.45px;height:8.885px;background:#5cee54">11.94</div>
<div class="dc" style="left:501.50px;top:19.79px;width:23.45px;height:8.885px;background:#50f07c">11.26</div>
<div class="dc" style="left:524.95px;top:19.79px;width:23.45px;height:8.885px;background:#50f07c">11.26</div>
<div class="hc rh" style="left:0;top:28.67px;width:32.5px;height:8.885px;line-height:9.285px">24.75</div>
<div class="dc" style="left:32.50px;top:28.67px;width:23.45px;height:8.885px;background:#f4ee64">14.70</div>
<div class="dc" style="left:55.95px;top:28.67px;width:23.45px;height:8.885px;background:#f4ee64">14.70</div>
<div class="dc" style="left:79.40px;top:28.67px;width:23.45px;height:8.885px;background:#f4ee64">14.70</div>
<div class="dc" style="left:102.85px;top:28.67px;width:23.45px;height:8.885px;background:#f4ee64">14.70</div>
<div class="dc" style="left:126.30px;top:28.67px;width:23.45px;height:8.885px;background:#f4ee64">14.70</div>
<div class="dc" style="left:149.75px;top:28.67px;width:23.45px;height:8.885px;background:#f4ee64">14.70</div>
<div class="dc" style="left:173.20px;top:28.67px;width:23.45px;height:8.885px;background:#f4ee64">14.70</div>
<div class="dc" style="left:196.65px;top:28.67px;width:23.45px;height:8.885px;background:#f4ee64">14.70</div>
<div class="dc" style="left:220.10px;top:28.67px;width:23.45px;height:8.885px;background:#f4ee64">14.70</div>
<div class="dc" style="left:243.55px;top:28.67px;width:23.45px;height:8.885px;background:#f4ee64">14.70</div>
<div class="dc" style="left:267.00px;top:28.67px;width:23.45px;height:8.885px;background:#f4ee64">14.70</div>
<div class="dc" style="left:290.45px;top:28.67px;width:23.45px;height:8.885px;background:#f4ee64">14.70</div>
<div class="dc" style="left:313.90px;top:28.67px;width:23.45px;height:8.885px;background:#f4ee64">14.70</div>
<div class="dc" style="left:337.35px;top:28.67px;width:23.45px;height:8.885px;background:#f4ee64">14.70</div>
<div class="dc" style="left:360.80px;top:28.67px;width:23.45px;height:8.885px;background:#f4ee64">14.70</div>
<div class="dc" style="left:384.25px;top:28.67px;width:23.45px;height:8.885px;background:#f4ee64">14.70</div>
<div class="dc" style="left:407.70px;top:28.67px;width:23.45px;height:8.885px;background:#f4ee64">14.70</div>
<div class="dc" style="left:431.15px;top:28.67px;width:23.45px;height:8.885px;background:#f4ee64">14.70</div>
<div class="dc" style="left:454.60px;top:28.67px;width:23.45px;height:8.885px;background:#b8f050">13.32</div>
<div class="dc" style="left:478.05px;top:28.67px;width:23.45px;height:8.885px;background:#5cee54">11.94</div>
<div class="dc" style="left:501.50px;top:28.67px;width:23.45px;height:8.885px;background:#50ee68">11.49</div>
<div class="dc" style="left:524.95px;top:28.67px;width:23.45px;height:8.885px;background:#50f07c">11.26</div>
<div class="hc rh" style="left:0;top:37.55px;width:32.5px;height:8.885px;line-height:9.285px">30.00</div>
<div class="dc" style="left:32.50px;top:37.55px;width:23.45px;height:8.885px;background:#f4ee64">14.70</div>
<div class="dc" style="left:55.95px;top:37.55px;width:23.45px;height:8.885px;background:#f4ee64">14.70</div>
<div class="dc" style="left:79.40px;top:37.55px;width:23.45px;height:8.885px;background:#f4ee64">14.70</div>
<div class="dc" style="left:102.85px;top:37.55px;width:23.45px;height:8.885px;background:#f4ee64">14.70</div>
<div class="dc" style="left:126.30px;top:37.55px;width:23.45px;height:8.885px;background:#f4ee64">14.70</div>
<div class="dc" style="left:149.75px;top:37.55px;width:23.45px;height:8.885px;background:#f4ee64">14.70</div>
<div class="dc" style="left:173.20px;top:37.55px;width:23.45px;height:8.885px;background:#f4ee64">14.70</div>
<div class="dc" style="left:196.65px;top:37.55px;width:23.45px;height:8.885px;background:#f4ee64">14.70</div>
<div class="dc" style="left:220.10px;top:37.55px;width:23.45px;height:8.885px;background:#f4ee64">14.70</div>
<div class="dc" style="left:243.55px;top:37.55px;width:23.45px;height:8.885px;background:#f4ee64">14.70</div>
<div class="dc" style="left:267.00px;top:37.55px;width:23.45px;height:8.885px;background:#f4ee64">14.70</div>
<div class="dc" style="left:290.45px;top:37.55px;width:23.45px;height:8.885px;background:#f4ee64">14.70</div>
<div class="dc" style="left:313.90px;top:37.55px;width:23.45px;height:8.885px;background:#f4ee64">14.70</div>
<div class="dc" style="left:337.35px;top:37.55px;width:23.45px;height:8.885px;background:#f4ee64">14.70</div>
<div class="dc" style="left:360.80px;top:37.55px;width:23.45px;height:8.885px;background:#f4ee64">14.70</div>
<div class="dc" style="left:384.25px;top:37.55px;width:23.45px;height:8.885px;background:#f4ee64">14.70</div>
<div class="dc" style="left:407.70px;top:37.55px;width:23.45px;height:8.885px;background:#f4ee64">14.70</div>
<div class="dc" style="left:431.15px;top:37.55px;width:23.45px;height:8.885px;background:#f4ee64">14.70</div>
<div class="dc" style="left:454.60px;top:37.55px;width:23.45px;height:8.885px;background:#b8f050">13.32</div>
<div class="dc" style="left:478.05px;top:37.55px;width:23.45px;height:8.885px;background:#5cee54">11.94</div>
<div class="dc" style="left:501.50px;top:37.55px;width:23.45px;height:8.885px;background:#50ee68">11.49</div>
<div class="dc" style="left:524.95px;top:37.55px;width:23.45px;height:8.885px;background:#50f07c">11.26</div>
<div class="hc rh" style="left:0;top:46.44px;width:32.5px;height:8.885px;line-height:9.285px">35.25</div>
<div class="dc" style="left:32.50px;top:46.44px;width:23.45px;height:8.885px;background:#f4ee64">14.70</div>
<div class="dc" style="left:55.95px;top:46.44px;width:23.45px;height:8.885px;background:#f4ee64">14.70</div>
<div class="dc" style="left:79.40px;top:46.44px;width:23.45px;height:8.885px;background:#f4ee64">14.70</div>
<div class="dc" style="left:102.85px;top:46.44px;width:23.45px;height:8.885px;background:#f4ee64">14.70</div>
<div class="dc" style="left:126.30px;top:46.44px;width:23.45px;height:8.885px;background:#f4ee64">14.70</div>
<div class="dc" style="left:149.75px;top:46.44px;width:23.45px;height:8.885px;background:#f4ee64">14.70</div>
<div class="dc" style="left:173.20px;top:46.44px;width:23.45px;height:8.885px;background:#f4ee64">14.70</div>
<div class="dc" style="left:196.65px;top:46.44px;width:23.45px;height:8.885px;background:#f4ee64">14.70</div>
<div class="dc" style="left:220.10px;top:46.44px;width:23.45px;height:8.885px;background:#f4ee64">14.70</div>
<div class="dc" style="left:243.55px;top:46.44px;width:23.45px;height:8.885px;background:#f4ee64">14.70</div>
<div class="dc" style="left:267.00px;top:46.44px;width:23.45px;height:8.885px;background:#f4ee64">14.70</div>
<div class="dc" style="left:290.45px;top:46.44px;width:23.45px;height:8.885px;background:#f4ee64">14.70</div>
<div class="dc" style="left:313.90px;top:46.44px;width:23.45px;height:8.885px;background:#f4ee64">14.70</div>
<div class="dc" style="left:337.35px;top:46.44px;width:23.45px;height:8.885px;background:#f4ee64">14.70</div>
<div class="dc" style="left:360.80px;top:46.44px;width:23.45px;height:8.885px;background:#f4ee64">14.70</div>
<div class="dc" style="left:384.25px;top:46.44px;width:23.45px;height:8.885px;background:#f4ee64">14.70</div>
<div class="dc" style="left:407.70px;top:46.44px;width:23.45px;height:8.885px;background:#f4ee64">14.70</div>
<div class="dc" style="left:431.15px;top:46.44px;width:23.45px;height:8.885px;background:#f4ee64">14.70</div>
<div class="dc" style="left:454.60px;top:46.44px;width:23.45px;height:8.885px;background:#b8f050">13.32</div>
<div class="dc" style="left:478.05px;top:46.44px;width:23.45px;height:8.885px;background:#5cee54">11.94</div>
<div class="dc" style="left:501.50px;top:46.44px;width:23.45px;height:8.885px;background:#50ee68">11.49</div>
<div class="dc" style="left:524.95px;top:46.44px;width:23.45px;height:8.885px;background:#50ee68">11.49</div>
<div class="hc rh" style="left:0;top:55.32px;width:32.5px;height:8.885px;line-height:9.285px">39.75</div>
<div class="dc" style="left:32.50px;top:55.32px;width:23.45px;height:8.885px;background:#f4ee64">14.70</div>
<div class="dc" style="left:55.95px;top:55.32px;width:23.45px;height:8.885px;background:#f4ee64">14.70</div>
<div class="dc" style="left:79.40px;top:55.32px;width:23.45px;height:8.885px;background:#f4ee64">14.70</div>
<div class="dc" style="left:102.85px;top:55.32px;width:23.45px;height:8.885px;background:#f4ee64">14.70</div>
<div class="dc" style="left:126.30px;top:55.32px;width:23.45px;height:8.885px;background:#f4ee64">14.70</div>
<div class="dc" style="left:149.75px;top:55.32px;width:23.45px;height:8.885px;background:#f4ee64">14.70</div>
<div class="dc" style="left:173.20px;top:55.32px;width:23.45px;height:8.885px;background:#f4ee64">14.70</div>
<div class="dc" style="left:196.65px;top:55.32px;width:23.45px;height:8.885px;background:#f4ee64">14.70</div>
<div class="dc" style="left:220.10px;top:55.32px;width:23.45px;height:8.885px;background:#f4ee64">14.70</div>
<div class="dc" style="left:243.55px;top:55.32px;width:23.45px;height:8.885px;background:#f4ee64">14.70</div>
<div class="dc" style="left:267.00px;top:55.32px;width:23.45px;height:8.885px;background:#f4ee64">14.70</div>
<div class="dc" style="left:290.45px;top:55.32px;width:23.45px;height:8.885px;background:#f4ee64">14.70</div>
<div class="dc" style="left:313.90px;top:55.32px;width:23.45px;height:8.885px;background:#f4ee64">14.70</div>
<div class="dc" style="left:337.35px;top:55.32px;width:23.45px;height:8.885px;background:#f4ee64">14.70</div>
<div class="dc" style="left:360.80px;top:55.32px;width:23.45px;height:8.885px;background:#f4ee64">14.70</div>
<div class="dc" style="left:384.25px;top:55.32px;width:23.45px;height:8.885px;background:#f4ee64">14.70</div>
<div class="dc" style="left:407.70px;top:55.32px;width:23.45px;height:8.885px;background:#f4ee64">14.70</div>
<div class="dc" style="left:431.15px;top:55.32px;width:23.45px;height:8.885px;background:#f4ee64">14.70</div>
<div class="dc" style="left:454.60px;top:55.32px;width:23.45px;height:8.885px;background:#b8f050">13.32</div>
<div class="dc" style="left:478.05px;top:55.32px;width:23.45px;height:8.885px;background:#5cee54">11.94</div>
<div class="dc" style="left:501.50px;top:55.32px;width:23.45px;height:8.885px;background:#50ee68">11.49</div>
<div class="dc" style="left:524.95px;top:55.32px;width:23.45px;height:8.885px;background:#50ee68">11.49</div>
<div class="hc rh" style="left:0;top:64.21px;width:32.5px;height:8.885px;line-height:9.285px">45.00</div>
<div class="dc" style="left:32.50px;top:64.21px;width:23.45px;height:8.885px;background:#f4ee64">14.70</div>
<div class="dc" style="left:55.95px;top:64.21px;width:23.45px;height:8.885px;background:#f4ee64">14.70</div>
<div class="dc" style="left:79.40px;top:64.21px;width:23.45px;height:8.885px;background:#f4ee64">14.70</div>
<div class="dc" style="left:102.85px;top:64.21px;width:23.45px;height:8.885px;background:#f4ee64">14.70</div>
<div class="dc" style="left:126.30px;top:64.21px;width:23.45px;height:8.885px;background:#f4ee64">14.70</div>
<div class="dc" style="left:149.75px;top:64.21px;width:23.45px;height:8.885px;background:#f4ee64">14.70</div>
<div class="dc" style="left:173.20px;top:64.21px;width:23.45px;height:8.885px;background:#f4ee64">14.70</div>
<div class="dc" style="left:196.65px;top:64.21px;width:23.45px;height:8.885px;background:#f4ee64">14.70</div>
<div class="dc" style="left:220.10px;top:64.21px;width:23.45px;height:8.885px;background:#f4ee64">14.70</div>
<div class="dc" style="left:243.55px;top:64.21px;width:23.45px;height:8.885px;background:#f4ee64">14.70</div>
<div class="dc" style="left:267.00px;top:64.21px;width:23.45px;height:8.885px;background:#f4ee64">14.70</div>
<div class="dc" style="left:290.45px;top:64.21px;width:23.45px;height:8.885px;background:#f4ee64">14.70</div>
<div class="dc" style="left:313.90px;top:64.21px;width:23.45px;height:8.885px;background:#f4ee64">14.70</div>
<div class="dc" style="left:337.35px;top:64.21px;width:23.45px;height:8.885px;background:#f4ee64">14.70</div>
<div class="dc" style="left:360.80px;top:64.21px;width:23.45px;height:8.885px;background:#f4ee64">14.70</div>
<div class="dc" style="left:384.25px;top:64.21px;width:23.45px;height:8.885px;background:#f4ee64">14.70</div>
<div class="dc" style="left:407.70px;top:64.21px;width:23.45px;height:8.885px;background:#f4ee64">14.70</div>
<div class="dc" style="left:431.15px;top:64.21px;width:23.45px;height:8.885px;background:#f4ee64">14.70</div>
<div class="dc" style="left:454.60px;top:64.21px;width:23.45px;height:8.885px;background:#b8f050">13.32</div>
<div class="dc" style="left:478.05px;top:64.21px;width:23.45px;height:8.885px;background:#5cee54">11.94</div>
<div class="dc" style="left:501.50px;top:64.21px;width:23.45px;height:8.885px;background:#54ec5c">11.71</div>
<div class="dc" style="left:524.95px;top:64.21px;width:23.45px;height:8.885px;background:#50ee68">11.49</div>
<div class="hc rh" style="left:0;top:73.09px;width:32.5px;height:8.885px;line-height:9.285px">50.25</div>
<div class="dc" style="left:32.50px;top:73.09px;width:23.45px;height:8.885px;background:#f4ee64">14.70</div>
<div class="dc" style="left:55.95px;top:73.09px;width:23.45px;height:8.885px;background:#f4ee64">14.70</div>
<div class="dc" style="left:79.40px;top:73.09px;width:23.45px;height:8.885px;background:#f4ee64">14.70</div>
<div class="dc" style="left:102.85px;top:73.09px;width:23.45px;height:8.885px;background:#f4ee64">14.70</div>
<div class="dc" style="left:126.30px;top:73.09px;width:23.45px;height:8.885px;background:#f4ee64">14.70</div>
<div class="dc" style="left:149.75px;top:73.09px;width:23.45px;height:8.885px;background:#f4ee64">14.70</div>
<div class="dc" style="left:173.20px;top:73.09px;width:23.45px;height:8.885px;background:#f4ee64">14.70</div>
<div class="dc" style="left:196.65px;top:73.09px;width:23.45px;height:8.885px;background:#f4ee64">14.70</div>
<div class="dc" style="left:220.10px;top:73.09px;width:23.45px;height:8.885px;background:#f4ee64">14.70</div>
<div class="dc" style="left:243.55px;top:73.09px;width:23.45px;height:8.885px;background:#f4ee64">14.70</div>
<div class="dc" style="left:267.00px;top:73.09px;width:23.45px;height:8.885px;background:#f4ee64">14.70</div>
<div class="dc" style="left:290.45px;top:73.09px;width:23.45px;height:8.885px;background:#f4ee64">14.70</div>
<div class="dc" style="left:313.90px;top:73.09px;width:23.45px;height:8.885px;background:#f4ee64">14.70</div>
<div class="dc" style="left:337.35px;top:73.09px;width:23.45px;height:8.885px;background:#f4ee64">14.70</div>
<div class="dc" style="left:360.80px;top:73.09px;width:23.45px;height:8.885px;background:#f4ee64">14.70</div>
<div class="dc" style="left:384.25px;top:73.09px;width:23.45px;height:8.885px;background:#f4ee64">14.70</div>
<div class="dc" style="left:407.70px;top:73.09px;width:23.45px;height:8.885px;background:#f4ee64">14.70</div>
<div class="dc" style="left:431.15px;top:73.09px;width:23.45px;height:8.885px;background:#f4ee64">14.70</div>
<div class="dc" style="left:454.60px;top:73.09px;width:23.45px;height:8.885px;background:#b8f050">13.32</div>
<div class="dc" style="left:478.05px;top:73.09px;width:23.45px;height:8.885px;background:#5cee54">11.94</div>
<div class="dc" style="left:501.50px;top:73.09px;width:23.45px;height:8.885px;background:#54ec5c">11.71</div>
<div class="dc" style="left:524.95px;top:73.09px;width:23.45px;height:8.885px;background:#54ec5c">11.71</div>
<div class="hc rh" style="left:0;top:81.98px;width:32.5px;height:8.885px;line-height:9.285px">54.75</div>
<div class="dc" style="left:32.50px;top:81.98px;width:23.45px;height:8.885px;background:#f4ee64">14.70</div>
<div class="dc" style="left:55.95px;top:81.98px;width:23.45px;height:8.885px;background:#f4ee64">14.70</div>
<div class="dc" style="left:79.40px;top:81.98px;width:23.45px;height:8.885px;background:#f4ee64">14.70</div>
<div class="dc" style="left:102.85px;top:81.98px;width:23.45px;height:8.885px;background:#f4ee64">14.70</div>
<div class="dc" style="left:126.30px;top:81.98px;width:23.45px;height:8.885px;background:#f4ee64">14.70</div>
<div class="dc" style="left:149.75px;top:81.98px;width:23.45px;height:8.885px;background:#f4ee64">14.70</div>
<div class="dc" style="left:173.20px;top:81.98px;width:23.45px;height:8.885px;background:#f4ee64">14.70</div>
<div class="dc" style="left:196.65px;top:81.98px;width:23.45px;height:8.885px;background:#f4ee64">14.70</div>
<div class="dc" style="left:220.10px;top:81.98px;width:23.45px;height:8.885px;background:#f4ee64">14.70</div>
<div class="dc" style="left:243.55px;top:81.98px;width:23.45px;height:8.885px;background:#f4ee64">14.70</div>
<div class="dc" style="left:267.00px;top:81.98px;width:23.45px;height:8.885px;background:#f4ee64">14.70</div>
<div class="dc" style="left:290.45px;top:81.98px;width:23.45px;height:8.885px;background:#f4ee64">14.70</div>
<div class="dc" style="left:313.90px;top:81.98px;width:23.45px;height:8.885px;background:#f4ee64">14.70</div>
<div class="dc" style="left:337.35px;top:81.98px;width:23.45px;height:8.885px;background:#f4ee64">14.70</div>
<div class="dc" style="left:360.80px;top:81.98px;width:23.45px;height:8.885px;background:#f4ee64">14.70</div>
<div class="dc" style="left:384.25px;top:81.98px;width:23.45px;height:8.885px;background:#f4ee64">14.70</div>
<div class="dc" style="left:407.70px;top:81.98px;width:23.45px;height:8.885px;background:#f4ee64">14.70</div>
<div class="dc" style="left:431.15px;top:81.98px;width:23.45px;height:8.885px;background:#f4ee64">14.70</div>
<div class="dc" style="left:454.60px;top:81.98px;width:23.45px;height:8.885px;background:#b8f050">13.32</div>
<div class="dc" style="left:478.05px;top:81.98px;width:23.45px;height:8.885px;background:#5cee54">11.94</div>
<div class="dc" style="left:501.50px;top:81.98px;width:23.45px;height:8.885px;background:#54ec5c">11.71</div>
<div class="dc" style="left:524.95px;top:81.98px;width:23.45px;height:8.885px;background:#54ec5c">11.71</div>
<div class="hc rh" style="left:0;top:90.87px;width:32.5px;height:8.885px;line-height:9.285px">60.00</div>
<div class="dc" style="left:32.50px;top:90.87px;width:23.45px;height:8.885px;background:#f4ee64">14.70</div>
<div class="dc" style="left:55.95px;top:90.87px;width:23.45px;height:8.885px;background:#f4ee64">14.70</div>
<div class="dc" style="left:79.40px;top:90.87px;width:23.45px;height:8.885px;background:#f4ee64">14.70</div>
<div class="dc" style="left:102.85px;top:90.87px;width:23.45px;height:8.885px;background:#f4ee64">14.70</div>
<div class="dc" style="left:126.30px;top:90.87px;width:23.45px;height:8.885px;background:#f4ee64">14.70</div>
<div class="dc" style="left:149.75px;top:90.87px;width:23.45px;height:8.885px;background:#f4ee64">14.70</div>
<div class="dc" style="left:173.20px;top:90.87px;width:23.45px;height:8.885px;background:#f4ee64">14.70</div>
<div class="dc" style="left:196.65px;top:90.87px;width:23.45px;height:8.885px;background:#f4ee64">14.70</div>
<div class="dc" style="left:220.10px;top:90.87px;width:23.45px;height:8.885px;background:#f4ee64">14.70</div>
<div class="dc" style="left:243.55px;top:90.87px;width:23.45px;height:8.885px;background:#f4ee64">14.70</div>
<div class="dc" style="left:267.00px;top:90.87px;width:23.45px;height:8.885px;background:#f4ee64">14.70</div>
<div class="dc" style="left:290.45px;top:90.87px;width:23.45px;height:8.885px;background:#f4ee64">14.70</div>
<div class="dc" style="left:313.90px;top:90.87px;width:23.45px;height:8.885px;background:#f4ee64">14.70</div>
<div class="dc" style="left:337.35px;top:90.87px;width:23.45px;height:8.885px;background:#f4ee64">14.70</div>
<div class="dc" style="left:360.80px;top:90.87px;width:23.45px;height:8.885px;background:#f4ee64">14.70</div>
<div class="dc" style="left:384.25px;top:90.87px;width:23.45px;height:8.885px;background:#f4ee64">14.70</div>
<div class="dc" style="left:407.70px;top:90.87px;width:23.45px;height:8.885px;background:#f4ee64">14.70</div>
<div class="dc" style="left:431.15px;top:90.87px;width:23.45px;height:8.885px;background:#f4ee64">14.70</div>
<div class="dc" style="left:454.60px;top:90.87px;width:23.45px;height:8.885px;background:#b8f050">13.32</div>
<div class="dc" style="left:478.05px;top:90.87px;width:23.45px;height:8.885px;background:#5cee54">11.94</div>
<div class="dc" style="left:501.50px;top:90.87px;width:23.45px;height:8.885px;background:#54ec5c">11.71</div>
<div class="dc" style="left:524.95px;top:90.87px;width:23.45px;height:8.885px;background:#50f07c">11.26</div>
<div class="hc rh" style="left:0;top:99.75px;width:32.5px;height:8.885px;line-height:9.285px">69.75</div>
<div class="dc" style="left:32.50px;top:99.75px;width:23.45px;height:8.885px;background:#f4ee64">14.70</div>
<div class="dc" style="left:55.95px;top:99.75px;width:23.45px;height:8.885px;background:#f4ee64">14.70</div>
<div class="dc" style="left:79.40px;top:99.75px;width:23.45px;height:8.885px;background:#f4ee64">14.70</div>
<div class="dc" style="left:102.85px;top:99.75px;width:23.45px;height:8.885px;background:#f4ee64">14.70</div>
<div class="dc" style="left:126.30px;top:99.75px;width:23.45px;height:8.885px;background:#f4ee64">14.70</div>
<div class="dc" style="left:149.75px;top:99.75px;width:23.45px;height:8.885px;background:#f4ee64">14.70</div>
<div class="dc" style="left:173.20px;top:99.75px;width:23.45px;height:8.885px;background:#f4ee64">14.70</div>
<div class="dc" style="left:196.65px;top:99.75px;width:23.45px;height:8.885px;background:#f4ee64">14.70</div>
<div class="dc" style="left:220.10px;top:99.75px;width:23.45px;height:8.885px;background:#f4ee64">14.70</div>
<div class="dc" style="left:243.55px;top:99.75px;width:23.45px;height:8.885px;background:#f4ee64">14.70</div>
<div class="dc" style="left:267.00px;top:99.75px;width:23.45px;height:8.885px;background:#f4ee64">14.70</div>
<div class="dc" style="left:290.45px;top:99.75px;width:23.45px;height:8.885px;background:#f4ee64">14.70</div>
<div class="dc" style="left:313.90px;top:99.75px;width:23.45px;height:8.885px;background:#f4ee64">14.70</div>
<div class="dc" style="left:337.35px;top:99.75px;width:23.45px;height:8.885px;background:#f4ee64">14.70</div>
<div class="dc" style="left:360.80px;top:99.75px;width:23.45px;height:8.885px;background:#f4ee64">14.70</div>
<div class="dc" style="left:384.25px;top:99.75px;width:23.45px;height:8.885px;background:#f4ee64">14.70</div>
<div class="dc" style="left:407.70px;top:99.75px;width:23.45px;height:8.885px;background:#f4ee64">14.70</div>
<div class="dc" style="left:431.15px;top:99.75px;width:23.45px;height:8.885px;background:#f4ee64">14.70</div>
<div class="dc" style="left:454.60px;top:99.75px;width:23.45px;height:8.885px;background:#b4f052">13.09</div>
<div class="dc" style="left:478.05px;top:99.75px;width:23.45px;height:8.885px;background:#5cee54">11.94</div>
<div class="dc" style="left:501.50px;top:99.75px;width:23.45px;height:8.885px;background:#50f07c">11.26</div>
<div class="dc" style="left:524.95px;top:99.75px;width:23.45px;height:8.885px;background:#5cf0b4">10.34</div>
<div class="hc rh" style="left:0;top:108.64px;width:32.5px;height:8.885px;line-height:9.285px">80.25</div>
<div class="dc" style="left:32.50px;top:108.64px;width:23.45px;height:8.885px;background:#54ec5c">11.71</div>
<div class="dc" style="left:55.95px;top:108.64px;width:23.45px;height:8.885px;background:#54ec5c">11.71</div>
<div class="dc" style="left:79.40px;top:108.64px;width:23.45px;height:8.885px;background:#54ec5c">11.71</div>
<div class="dc" style="left:102.85px;top:108.64px;width:23.45px;height:8.885px;background:#54ec5c">11.71</div>
<div class="dc" style="left:126.30px;top:108.64px;width:23.45px;height:8.885px;background:#54ec5c">11.71</div>
<div class="dc" style="left:149.75px;top:108.64px;width:23.45px;height:8.885px;background:#54ec5c">11.71</div>
<div class="dc" style="left:173.20px;top:108.64px;width:23.45px;height:8.885px;background:#54ec5c">11.71</div>
<div class="dc" style="left:196.65px;top:108.64px;width:23.45px;height:8.885px;background:#54ec5c">11.71</div>
<div class="dc" style="left:220.10px;top:108.64px;width:23.45px;height:8.885px;background:#54ec5c">11.71</div>
<div class="dc" style="left:243.55px;top:108.64px;width:23.45px;height:8.885px;background:#54ec5c">11.71</div>
<div class="dc" style="left:267.00px;top:108.64px;width:23.45px;height:8.885px;background:#54ec5c">11.71</div>
<div class="dc" style="left:290.45px;top:108.64px;width:23.45px;height:8.885px;background:#54ec5c">11.71</div>
<div class="dc" style="left:313.90px;top:108.64px;width:23.45px;height:8.885px;background:#54ec5c">11.71</div>
<div class="dc" style="left:337.35px;top:108.64px;width:23.45px;height:8.885px;background:#54ec5c">11.71</div>
<div class="dc" style="left:360.80px;top:108.64px;width:23.45px;height:8.885px;background:#54ec5c">11.71</div>
<div class="dc" style="left:384.25px;top:108.64px;width:23.45px;height:8.885px;background:#54ec5c">11.71</div>
<div class="dc" style="left:407.70px;top:108.64px;width:23.45px;height:8.885px;background:#54ec5c">11.71</div>
<div class="dc" style="left:431.15px;top:108.64px;width:23.45px;height:8.885px;background:#54ec5c">11.71</div>
<div class="dc" style="left:454.60px;top:108.64px;width:23.45px;height:8.885px;background:#54ec5c">11.71</div>
<div class="dc" style="left:478.05px;top:108.64px;width:23.45px;height:8.885px;background:#50ee68">11.49</div>
<div class="dc" style="left:501.50px;top:108.64px;width:23.45px;height:8.885px;background:#50f08c">11.03</div>
<div class="dc" style="left:524.95px;top:108.64px;width:23.45px;height:8.885px;background:#5cf0b4">10.34</div>
<div class="hc rh" style="left:0;top:117.52px;width:32.5px;height:8.885px;line-height:9.285px">90.00</div>
<div class="dc" style="left:32.50px;top:117.52px;width:23.45px;height:8.885px;background:#50f07c">11.26</div>
<div class="dc" style="left:55.95px;top:117.52px;width:23.45px;height:8.885px;background:#50f07c">11.26</div>
<div class="dc" style="left:79.40px;top:117.52px;width:23.45px;height:8.885px;background:#50f07c">11.26</div>
<div class="dc" style="left:102.85px;top:117.52px;width:23.45px;height:8.885px;background:#50f07c">11.26</div>
<div class="dc" style="left:126.30px;top:117.52px;width:23.45px;height:8.885px;background:#50f07c">11.26</div>
<div class="dc" style="left:149.75px;top:117.52px;width:23.45px;height:8.885px;background:#50f07c">11.26</div>
<div class="dc" style="left:173.20px;top:117.52px;width:23.45px;height:8.885px;background:#50f07c">11.26</div>
<div class="dc" style="left:196.65px;top:117.52px;width:23.45px;height:8.885px;background:#50f07c">11.26</div>
<div class="dc" style="left:220.10px;top:117.52px;width:23.45px;height:8.885px;background:#50f07c">11.26</div>
<div class="dc" style="left:243.55px;top:117.52px;width:23.45px;height:8.885px;background:#50f07c">11.26</div>
<div class="dc" style="left:267.00px;top:117.52px;width:23.45px;height:8.885px;background:#50f07c">11.26</div>
<div class="dc" style="left:290.45px;top:117.52px;width:23.45px;height:8.885px;background:#50f07c">11.26</div>
<div class="dc" style="left:313.90px;top:117.52px;width:23.45px;height:8.885px;background:#50f07c">11.26</div>
<div class="dc" style="left:337.35px;top:117.52px;width:23.45px;height:8.885px;background:#50f07c">11.26</div>
<div class="dc" style="left:360.80px;top:117.52px;width:23.45px;height:8.885px;background:#50f07c">11.26</div>
<div class="dc" style="left:384.25px;top:117.52px;width:23.45px;height:8.885px;background:#50f07c">11.26</div>
<div class="dc" style="left:407.70px;top:117.52px;width:23.45px;height:8.885px;background:#50f07c">11.26</div>
<div class="dc" style="left:431.15px;top:117.52px;width:23.45px;height:8.885px;background:#50f08c">11.03</div>
<div class="dc" style="left:454.60px;top:117.52px;width:23.45px;height:8.885px;background:#54f0a0">10.80</div>
<div class="dc" style="left:478.05px;top:117.52px;width:23.45px;height:8.885px;background:#5cf0b4">10.34</div>
<div class="dc" style="left:501.50px;top:117.52px;width:23.45px;height:8.885px;background:#5cf0b4">10.34</div>
<div class="dc" style="left:524.95px;top:117.52px;width:23.45px;height:8.885px;background:#5cf0b4">10.34</div>
<div class="hc rh" style="left:0;top:126.41px;width:32.5px;height:8.885px;line-height:9.285px">99.00</div>
<div class="dc" style="left:32.50px;top:126.41px;width:23.45px;height:8.885px;background:#54f0a0">10.80</div>
<div class="dc" style="left:55.95px;top:126.41px;width:23.45px;height:8.885px;background:#54f0a0">10.80</div>
<div class="dc" style="left:79.40px;top:126.41px;width:23.45px;height:8.885px;background:#54f0a0">10.80</div>
<div class="dc" style="left:102.85px;top:126.41px;width:23.45px;height:8.885px;background:#54f0a0">10.80</div>
<div class="dc" style="left:126.30px;top:126.41px;width:23.45px;height:8.885px;background:#54f0a0">10.80</div>
<div class="dc" style="left:149.75px;top:126.41px;width:23.45px;height:8.885px;background:#54f0a0">10.80</div>
<div class="dc" style="left:173.20px;top:126.41px;width:23.45px;height:8.885px;background:#54f0a0">10.80</div>
<div class="dc" style="left:196.65px;top:126.41px;width:23.45px;height:8.885px;background:#54f0a0">10.80</div>
<div class="dc" style="left:220.10px;top:126.41px;width:23.45px;height:8.885px;background:#54f0a0">10.80</div>
<div class="dc" style="left:243.55px;top:126.41px;width:23.45px;height:8.885px;background:#54f0a0">10.80</div>
<div class="dc" style="left:267.00px;top:126.41px;width:23.45px;height:8.885px;background:#54f0a0">10.80</div>
<div class="dc" style="left:290.45px;top:126.41px;width:23.45px;height:8.885px;background:#54f0a0">10.80</div>
<div class="dc" style="left:313.90px;top:126.41px;width:23.45px;height:8.885px;background:#54f0a0">10.80</div>
<div class="dc" style="left:337.35px;top:126.41px;width:23.45px;height:8.885px;background:#54f0a0">10.80</div>
<div class="dc" style="left:360.80px;top:126.41px;width:23.45px;height:8.885px;background:#54f0a0">10.80</div>
<div class="dc" style="left:384.25px;top:126.41px;width:23.45px;height:8.885px;background:#54f0a0">10.80</div>
<div class="dc" style="left:407.70px;top:126.41px;width:23.45px;height:8.885px;background:#54f0a0">10.80</div>
<div class="dc" style="left:431.15px;top:126.41px;width:23.45px;height:8.885px;background:#58f0aa">10.57</div>
<div class="dc" style="left:454.60px;top:126.41px;width:23.45px;height:8.885px;background:#5cf0b4">10.34</div>
<div class="dc" style="left:478.05px;top:126.41px;width:23.45px;height:8.885px;background:#60f0c0">10.11</div>
<div class="dc" style="left:501.50px;top:126.41px;width:23.45px;height:8.885px;background:#60f0c0">10.11</div>
<div class="dc" style="left:524.95px;top:126.41px;width:23.45px;height:8.885px;background:#78f4f6">8.73</div>
<div class="hc rh" style="left:0;top:135.29px;width:32.5px;height:8.885px;line-height:9.285px">120.00</div>
<div class="dc" style="left:32.50px;top:135.29px;width:23.45px;height:8.885px;background:#5cf0b4">10.34</div>
<div class="dc" style="left:55.95px;top:135.29px;width:23.45px;height:8.885px;background:#5cf0b4">10.34</div>
<div class="dc" style="left:79.40px;top:135.29px;width:23.45px;height:8.885px;background:#5cf0b4">10.34</div>
<div class="dc" style="left:102.85px;top:135.29px;width:23.45px;height:8.885px;background:#5cf0b4">10.34</div>
<div class="dc" style="left:126.30px;top:135.29px;width:23.45px;height:8.885px;background:#5cf0b4">10.34</div>
<div class="dc" style="left:149.75px;top:135.29px;width:23.45px;height:8.885px;background:#5cf0b4">10.34</div>
<div class="dc" style="left:173.20px;top:135.29px;width:23.45px;height:8.885px;background:#5cf0b4">10.34</div>
<div class="dc" style="left:196.65px;top:135.29px;width:23.45px;height:8.885px;background:#5cf0b4">10.34</div>
<div class="dc" style="left:220.10px;top:135.29px;width:23.45px;height:8.885px;background:#5cf0b4">10.34</div>
<div class="dc" style="left:243.55px;top:135.29px;width:23.45px;height:8.885px;background:#5cf0b4">10.34</div>
<div class="dc" style="left:267.00px;top:135.29px;width:23.45px;height:8.885px;background:#5cf0b4">10.34</div>
<div class="dc" style="left:290.45px;top:135.29px;width:23.45px;height:8.885px;background:#5cf0b4">10.34</div>
<div class="dc" style="left:313.90px;top:135.29px;width:23.45px;height:8.885px;background:#5cf0b4">10.34</div>
<div class="dc" style="left:337.35px;top:135.29px;width:23.45px;height:8.885px;background:#5cf0b4">10.34</div>
<div class="dc" style="left:360.80px;top:135.29px;width:23.45px;height:8.885px;background:#5cf0b4">10.34</div>
<div class="dc" style="left:384.25px;top:135.29px;width:23.45px;height:8.885px;background:#5cf0b4">10.34</div>
<div class="dc" style="left:407.70px;top:135.29px;width:23.45px;height:8.885px;background:#5cf0b4">10.34</div>
<div class="dc" style="left:431.15px;top:135.29px;width:23.45px;height:8.885px;background:#60f0c0">10.11</div>
<div class="dc" style="left:454.60px;top:135.29px;width:23.45px;height:8.885px;background:#6cf4e4">9.19</div>
<div class="dc" style="left:478.05px;top:135.29px;width:23.45px;height:8.885px;background:#78dcf8">8.27</div>
<div class="dc" style="left:501.50px;top:135.29px;width:23.45px;height:8.885px;background:#78c4f8">7.81</div>
<div class="dc" style="left:524.95px;top:135.29px;width:23.45px;height:8.885px;background:#6c86f0">6.66</div>
<div class="hc rh" style="left:0;top:144.18px;width:32.5px;height:8.885px;line-height:9.285px">140.25</div>
<div class="dc" style="left:32.50px;top:144.18px;width:23.45px;height:8.885px;background:#78f4f6">8.73</div>
<div class="dc" style="left:55.95px;top:144.18px;width:23.45px;height:8.885px;background:#78f4f6">8.73</div>
<div class="dc" style="left:79.40px;top:144.18px;width:23.45px;height:8.885px;background:#78f4f6">8.73</div>
<div class="dc" style="left:102.85px;top:144.18px;width:23.45px;height:8.885px;background:#78f4f6">8.73</div>
<div class="dc" style="left:126.30px;top:144.18px;width:23.45px;height:8.885px;background:#78f4f6">8.73</div>
<div class="dc" style="left:149.75px;top:144.18px;width:23.45px;height:8.885px;background:#78f4f6">8.73</div>
<div class="dc" style="left:173.20px;top:144.18px;width:23.45px;height:8.885px;background:#78f4f6">8.73</div>
<div class="dc" style="left:196.65px;top:144.18px;width:23.45px;height:8.885px;background:#78f4f6">8.73</div>
<div class="dc" style="left:220.10px;top:144.18px;width:23.45px;height:8.885px;background:#78f4f6">8.73</div>
<div class="dc" style="left:243.55px;top:144.18px;width:23.45px;height:8.885px;background:#78f4f6">8.73</div>
<div class="dc" style="left:267.00px;top:144.18px;width:23.45px;height:8.885px;background:#78f4f6">8.73</div>
<div class="dc" style="left:290.45px;top:144.18px;width:23.45px;height:8.885px;background:#78f4f6">8.73</div>
<div class="dc" style="left:313.90px;top:144.18px;width:23.45px;height:8.885px;background:#78f4f6">8.73</div>
<div class="dc" style="left:337.35px;top:144.18px;width:23.45px;height:8.885px;background:#78d0f8">8.04</div>
<div class="dc" style="left:360.80px;top:144.18px;width:23.45px;height:8.885px;background:#78a4f4">7.35</div>
<div class="dc" style="left:384.25px;top:144.18px;width:23.45px;height:8.885px;background:#78a4f4">7.35</div>
<div class="dc" style="left:407.70px;top:144.18px;width:23.45px;height:8.885px;background:#78a4f4">7.35</div>
<div class="dc" style="left:431.15px;top:144.18px;width:23.45px;height:8.885px;background:#78a4f4">7.35</div>
<div class="dc" style="left:454.60px;top:144.18px;width:23.45px;height:8.885px;background:#6c86f0">6.66</div>
<div class="dc" style="left:478.05px;top:144.18px;width:23.45px;height:8.885px;background:#6874ec">6.43</div>
<div class="dc" style="left:501.50px;top:144.18px;width:23.45px;height:8.885px;background:#6874ec">6.43</div>
<div class="dc" style="left:524.95px;top:144.18px;width:23.45px;height:8.885px;background:#6874ec">6.43</div>
</div>
<!-- selection cursor -->
<svg class="a" style="left:205px;top:108px" width="50" height="30" viewBox="0 0 50 30">
 <path d="M24.2 6.8H28.6L26.4 12.8Z" fill="#1414e0"/>
 <path d="M6.8 16.6L12.8 18.7L6.8 20.8Z" fill="#1414e0"/>
 <path d="M14.5 18.8H19.6M34.1 18.8H38.6" stroke="#1414e0" stroke-width="1.3"/>
 <path d="M20.3 15.6V14.9H21.6M32.4 14.9H33.3V15.6M20.3 22.4V25.1H22.8M31 25.1H33.3V22.4" stroke="#1414e0" stroke-width="1.5" fill="none"/>
</svg>
<!-- h scrollbar of grid -->
<div class="a" style="left:186.7px;top:270px;width:548.3px;height:8px;background:linear-gradient(#bebebe,#c6c6c6);border:0.5px solid #707070"></div>
<div class="a" style="left:194.4px;top:270.6px;width:131.6px;height:6.8px;background:linear-gradient(#bababa,#a2a2a2);border:0.5px solid #888;border-radius:1px"></div>
<div class="a" style="left:188.6px;top:271.4px;font-size:3.6px;color:#222">&#9664;</div>
<div class="a" style="left:729.4px;top:271.4px;font-size:3.6px;color:#222">&#9654;</div>
<div class="a" style="left:257px;top:272.4px;width:3px;height:3px;background:repeating-linear-gradient(90deg,#888 0 0.5px,transparent 0.5px 1px)"></div>
<!-- toolbar -->
<div class="a" style="left:169px;top:279.6px;width:428px;height:21.6px;background:#7e7e7e;border:0.5px solid #8c8c8c"></div>
<div class="a" style="left:598.6px;top:280.4px;width:141.6px;height:19px;background:#7c7c7c;border:0.6px solid #6c6c6c"></div>
<div class="a tbtn" style="left:176.2px;border-color:#dcdcdc"><i style="left:4.4px;top:4px;width:6.8px;height:3px"></i></div>
<div class="a tbtn" style="left:196.2px"><i style="left:6px;top:2px;width:3.6px;height:6.8px"></i></div>
<div class="a tbtn" style="left:216.2px"><i style="left:5px;top:2.8px;width:5.6px;height:5.2px"></i><i style="left:3.8px;top:1.8px;width:1.8px;height:1.8px"></i><i style="left:10px;top:1.8px;width:1.8px;height:1.8px"></i><i style="left:3.8px;top:7.2px;width:1.8px;height:1.8px"></i><i style="left:10px;top:7.2px;width:1.8px;height:1.8px"></i></div>
<div class="a tbtn" style="left:236.2px"><i style="left:4.4px;top:2.2px;width:4.4px;height:6px;background:#ececf2;border-radius:2.2px"></i><i style="left:7.6px;top:2.6px;width:2px;height:3.6px"></i><i style="left:6.4px;top:5.8px;width:0;height:0;background:none;border-left:2.2px solid transparent;border-right:2.2px solid transparent;border-top:2.8px solid #2456d0"></i></div>
<div class="a" style="left:261px;top:284.3px;width:0.8px;height:11.7px;background:#c8c8c8"></div>
<div class="a tbtn" style="left:269.6px"><i style="left:4px;top:4.2px;width:8.2px;height:2px"></i><i style="left:7.1px;top:1.8px;width:2px;height:7px"></i></div>
<div class="a tbtn" style="left:289.6px"><i style="left:4.2px;top:4.4px;width:7.8px;height:1.9px"></i></div>
<div class="a tbtn" style="left:309.6px"><svg class="a" style="left:4.4px;top:2.2px" width="7.6" height="7" viewBox="0 0 7.6 7"><path d="M0.8 0.8L6.8 6.2M6.8 0.8L0.8 6.2" stroke="#2a60d8" stroke-width="1.9"/></svg></div>
<div class="a tbtn" style="left:329.8px"><i style="left:4.2px;top:4.6px;width:7.8px;height:1.6px"></i><i style="left:7.2px;top:1.8px;width:1.9px;height:1.9px"></i><i style="left:7.2px;top:7.2px;width:1.9px;height:1.9px"></i></div>
<div class="a white" style="left:353px;top:284.5px;width:32.6px;height:11.4px;border:0.5px solid #9c9c9c"></div>
<div class="a" style="left:385.8px;top:284.5px;width:7px;height:11.4px;background:linear-gradient(#b4b4b4,#969696);border:0.5px solid #9c9c9c"></div>
<div class="a" style="left:387.6px;top:288.6px;font-size:3px;color:#222">&#9660;</div>
<div class="a tbtn" style="left:400.6px"><i style="left:4px;top:3px;width:8.2px;height:2px"></i><i style="left:4px;top:6px;width:8.2px;height:2.4px"></i></div>
<div class="a" style="left:426.2px;top:288px;width:5px;height:5px;background:#f0f0f0;border:0.5px solid #bbb"></div>
<div class="a" style="left:433.6px;top:287.2px;font-size:5.8px;color:#f4f4f4">%</div>
<div class="a" style="left:600.6px;top:284.4px;font-size:4.9px;color:#f4f4f4">CellTrace Z: —</div>
<div class="a" style="left:649.6px;top:284.4px;font-size:4.9px;color:#f4f4f4">Cursor X: —</div>
<div class="a" style="left:691.6px;top:284.4px;font-size:4.9px;color:#f4f4f4">Cursor Z:</div>
<div class="a" style="left:649.6px;top:291.2px;font-size:4.9px;color:#f4f4f4">Cursor Y: —</div>
<!-- lower panels -->
<div class="a" style="left:169px;top:303.4px;width:234.6px;height:169.4px;background:#828282;border:0.5px solid #8e8e8e"></div>
<div class="a" style="left:174.4px;top:310.5px;font-size:4.95px;color:#f6f6f6">Main Fueling Target AFR</div>
<div class="a" style="left:403.4px;top:303.4px;width:3.2px;height:169.4px;background:#8a8a8a"></div>
<div class="a" style="left:406.6px;top:303.4px;width:325px;height:160px;background:#797979;border-top:2px solid #888"></div>
<div class="a" style="left:419.6px;top:311.6px;font-size:5.6px;font-weight:bold;color:#1c1c1c">235.0</div>
<svg class="a" style="left:406px;top:303px" width="326" height="160" viewBox="0 0 326 160">
<path d="M92.6 47.0L172.5 24.6L248.5 63.8M92.6 40.3L172.5 19.7L248.5 55.7M92.6 33.5L172.5 14.7L248.5 47.6M92.6 26.8L172.5 9.7L248.5 39.5M92.6 20.1L172.5 4.8L248.5 31.4M92.6 18.8L172.5 3.8L248.5 29.8" stroke="#242424" stroke-width="0.55" fill="none"/>
<path d="M92.6 51.0L92.6 18.8M172.5 27.6L172.5 3.8M248.5 68.7L248.5 29.8M92.6 51.0L137.0 148.6L248.5 68.7" stroke="#242424" stroke-width="0.8" fill="none"/>
<path d="M109.0 46.2L168.9 134.5M125.3 41.4L193.9 115.7M140.2 37.1L214.6 100.1M153.4 33.2L231.1 87.6M165.9 29.5L245.7 76.6M183.5 33.6L94.1 63.6M200.8 42.9L102.4 83.5M225.7 56.4L116.1 116.7M140.5 146.1L142.3 149.7M147.1 141.4L148.9 144.9M153.3 136.9L155.2 140.2M159.2 132.7L161.2 135.8M170.3 124.7L172.4 127.6M175.4 121.1L177.6 123.8M180.4 117.5L182.5 120.1M185.1 114.2L187.2 116.7M194.0 107.7L196.2 110.0M198.3 104.7L200.5 106.9M202.4 101.8L204.6 103.9M206.3 99.0L208.6 101.0M213.6 93.7L215.9 95.6M217.0 91.2L219.3 93.0M220.3 88.9L222.7 90.6M223.5 86.6L225.8 88.3M229.7 82.1L232.0 83.7M232.8 80.0L235.1 81.5M235.7 77.9L238.0 79.3M238.5 75.9L240.8 77.3M243.8 72.1L246.1 73.4M246.3 70.2L248.6 71.5M93.7 53.5L92.0 54.0M95.0 56.2L93.3 56.8M96.3 59.2L94.6 59.8M99.3 65.7L97.4 66.4M100.9 69.3L99.0 70.0M102.7 73.1L100.7 73.9M104.6 77.3L102.5 78.1M109.0 87.0L106.8 88.0M111.6 92.8L109.4 93.8M114.5 99.1L112.2 100.3M117.7 106.1L115.2 107.4M125.1 122.5L122.5 124.0M129.5 132.1L126.7 133.9M134.4 143.0L131.6 145.0" stroke="#242424" stroke-width="0.45" fill="none"/>
<defs><filter id="sb" x="-5%" y="-5%" width="110%" height="110%"><feGaussianBlur stdDeviation="0.7"/></filter></defs><g filter="url(#sb)">
<path d="M172.1 16.0L172.8 16.3L171.7 15.1L170.9 14.8ZM172.8 16.3L173.3 16.5L172.2 15.3L171.7 15.1ZM173.3 16.5L174.4 17.0L173.2 15.8L172.2 15.3ZM174.4 17.0L176.0 17.7L174.8 16.5L173.2 15.8ZM176.0 17.7L177.9 18.5L176.7 17.3L174.8 16.5ZM177.9 18.5L179.5 19.3L178.3 18.0L176.7 17.3ZM179.5 19.3L181.5 20.2L180.4 18.9L178.3 18.0ZM181.5 20.2L183.3 21.0L182.1 19.7L180.4 18.9ZM183.3 21.0L185.1 21.8L183.9 20.5L182.1 19.7ZM185.1 21.8L187.0 22.6L185.8 21.3L183.9 20.5ZM187.0 22.6L189.3 23.6L188.1 22.3L185.8 21.3ZM189.3 23.6L191.3 24.5L190.1 23.2L188.1 22.3ZM191.3 24.5L193.3 25.4L192.1 24.1L190.1 23.2ZM193.3 25.4L195.6 26.5L194.4 25.1L192.1 24.1ZM195.6 26.5L198.0 27.5L196.8 26.2L194.4 25.1ZM198.0 27.5L200.3 28.5L199.0 27.1L196.8 26.2ZM200.3 28.5L202.6 29.6L201.4 28.2L199.0 27.1ZM202.6 29.6L203.8 30.1L202.6 28.7L201.4 28.2ZM203.8 30.1L205.0 30.6L203.8 29.2L202.6 28.7ZM205.0 30.6L206.5 31.3L205.2 29.9L203.8 29.2ZM206.5 31.3L207.9 31.9L206.7 30.5L205.2 29.9ZM207.9 31.9L209.7 32.7L208.4 31.3L206.7 30.5ZM209.7 32.7L211.4 33.5L210.2 32.0L208.4 31.3ZM211.4 33.5L213.2 34.3L211.9 32.8L210.2 32.0ZM187.6 45.2L189.1 47.4L187.0 48.5L185.5 46.2ZM184.9 45.3L186.1 47.1L184.9 48.7L183.8 47.1Z" fill="#a7f12d" stroke="#a7f12d" stroke-width="0.4"/>
<path d="M170.9 14.8L171.7 15.1L170.5 13.9L169.8 13.6ZM171.7 15.1L172.2 15.3L171.0 14.1L170.5 13.9ZM172.2 15.3L173.2 15.8L172.0 14.6L171.0 14.1ZM146.5 19.8L147.4 20.4L146.2 22.1L145.3 21.5ZM173.2 15.8L174.8 16.5L173.6 15.3L172.0 14.6ZM147.4 20.4L148.8 21.2L147.6 22.9L146.2 22.1ZM174.8 16.5L176.7 17.3L175.5 16.1L173.6 15.3ZM148.8 21.2L150.5 22.2L149.3 24.0L147.6 22.9ZM176.7 17.3L178.3 18.0L177.2 16.8L175.5 16.1ZM150.5 22.2L151.9 23.1L150.7 24.9L149.3 24.0ZM178.3 18.0L180.4 18.9L179.2 17.7L177.2 16.8ZM151.9 23.1L153.7 24.2L152.5 26.0L150.7 24.9ZM180.4 18.9L182.1 19.7L180.9 18.4L179.2 17.7ZM182.1 19.7L183.9 20.5L182.7 19.2L180.9 18.4ZM153.7 24.2L155.3 25.1L154.1 27.0L152.5 26.0ZM155.3 25.1L156.9 26.1L155.7 28.0L154.1 27.0ZM183.9 20.5L185.8 21.3L184.6 20.0L182.7 19.2ZM156.9 26.1L158.6 27.2L157.3 29.1L155.7 28.0ZM185.8 21.3L188.1 22.3L186.8 21.0L184.6 20.0ZM158.6 27.2L160.6 28.4L159.4 30.4L157.3 29.1ZM188.1 22.3L190.1 23.2L188.8 21.9L186.8 21.0ZM160.6 28.4L162.4 29.5L161.2 31.5L159.4 30.4ZM190.1 23.2L192.1 24.1L190.9 22.8L188.8 21.9ZM162.4 29.5L164.3 30.6L163.0 32.7L161.2 31.5ZM192.1 24.1L194.4 25.1L193.2 23.7L190.9 22.8ZM194.4 25.1L196.8 26.2L195.5 24.8L193.2 23.7ZM164.3 30.6L166.4 31.9L165.1 34.0L163.0 32.7ZM166.4 31.9L168.5 33.2L167.2 35.4L165.1 34.0ZM196.8 26.2L199.0 27.1L197.8 25.7L195.5 24.8ZM199.0 27.1L201.4 28.2L200.1 26.8L197.8 25.7ZM168.5 33.2L170.6 34.5L169.3 36.7L167.2 35.4ZM170.6 34.5L172.8 35.8L171.4 38.0L169.3 36.7ZM201.4 28.2L202.6 28.7L201.3 27.3L200.1 26.8ZM202.6 28.7L203.8 29.2L202.5 27.8L201.3 27.3ZM203.8 29.2L205.2 29.9L203.9 28.4L202.5 27.8ZM205.2 29.9L206.7 30.5L205.4 29.1L203.9 28.4ZM206.7 30.5L208.4 31.3L207.1 29.8L205.4 29.1ZM208.4 31.3L210.2 32.0L208.9 30.6L207.1 29.8ZM210.2 32.0L211.9 32.8L210.7 31.3L208.9 30.6Z" fill="#cff235" stroke="#cff235" stroke-width="0.4"/>
<path d="M169.8 13.6L170.5 13.9L168.5 14.4L167.7 14.0ZM167.7 14.0L168.5 14.4L166.1 14.9L165.3 14.6ZM165.3 14.6L166.1 14.9L163.6 15.5L162.9 15.2ZM162.9 15.2L163.6 15.5L161.5 16.0L160.7 15.6ZM160.7 15.6L161.5 16.0L160.2 16.3L159.5 15.9ZM159.5 15.9L160.2 16.3L158.9 16.6L158.2 16.2ZM158.2 16.2L158.9 16.6L157.6 16.9L156.9 16.5ZM156.9 16.5L157.6 16.9L156.3 17.2L155.6 16.8ZM155.6 16.8L156.3 17.2L154.0 17.7L153.3 17.3ZM153.3 17.3L154.0 17.7L152.6 18.0L152.0 17.6ZM152.0 17.6L152.6 18.0L151.3 18.3L150.6 18.0ZM150.6 18.0L151.3 18.3L149.6 18.7L148.9 18.3ZM148.9 18.3L149.6 18.7L147.8 19.1L147.2 18.7ZM147.2 18.7L147.8 19.1L146.1 19.5L145.4 19.1ZM170.5 13.9L171.0 14.1L169.0 14.6L168.5 14.4ZM168.5 14.4L169.0 14.6L166.6 15.2L166.1 14.9ZM166.1 14.9L166.6 15.2L164.1 15.7L163.6 15.5ZM163.6 15.5L164.1 15.7L161.9 16.2L161.5 16.0ZM161.5 16.0L161.9 16.2L160.7 16.5L160.2 16.3ZM160.2 16.3L160.7 16.5L159.4 16.8L158.9 16.6ZM158.9 16.6L159.4 16.8L158.1 17.1L157.6 16.9ZM157.6 16.9L158.1 17.1L156.8 17.4L156.3 17.2ZM156.3 17.2L156.8 17.4L154.5 18.0L154.0 17.7ZM154.0 17.7L154.5 18.0L153.1 18.3L152.6 18.0ZM152.6 18.0L153.1 18.3L151.7 18.6L151.3 18.3ZM151.3 18.3L151.7 18.6L150.0 19.0L149.6 18.7ZM149.6 18.7L150.0 19.0L148.3 19.4L147.8 19.1ZM147.8 19.1L148.3 19.4L146.5 19.8L146.1 19.5ZM171.0 14.1L172.0 14.6L170.0 15.1L169.0 14.6ZM169.0 14.6L170.0 15.1L167.6 15.6L166.6 15.2ZM166.6 15.2L167.6 15.6L165.1 16.2L164.1 15.7ZM164.1 15.7L165.1 16.2L162.9 16.7L161.9 16.2ZM161.9 16.2L162.9 16.7L161.6 17.0L160.7 16.5ZM160.7 16.5L161.6 17.0L160.4 17.3L159.4 16.8ZM159.4 16.8L160.4 17.3L159.0 17.6L158.1 17.1ZM158.1 17.1L159.0 17.6L157.7 17.9L156.8 17.4ZM156.8 17.4L157.7 17.9L155.4 18.5L154.5 18.0ZM154.5 18.0L155.4 18.5L154.0 18.8L153.1 18.3ZM153.1 18.3L154.0 18.8L152.7 19.1L151.7 18.6ZM151.7 18.6L152.7 19.1L150.9 19.5L150.0 19.0ZM150.0 19.0L150.9 19.5L149.2 19.9L148.3 19.4ZM148.3 19.4L149.2 19.9L147.4 20.4L146.5 19.8ZM172.0 14.6L173.6 15.3L171.6 15.7L170.0 15.1ZM170.0 15.1L171.6 15.7L169.1 16.3L167.6 15.6ZM167.6 15.6L169.1 16.3L166.6 16.9L165.1 16.2ZM165.1 16.2L166.6 16.9L164.4 17.4L162.9 16.7ZM162.9 16.7L164.4 17.4L163.1 17.8L161.6 17.0ZM161.6 17.0L163.1 17.8L161.8 18.1L160.4 17.3ZM160.4 17.3L161.8 18.1L160.5 18.4L159.0 17.6ZM159.0 17.6L160.5 18.4L159.2 18.7L157.7 17.9ZM157.7 17.9L159.2 18.7L156.9 19.3L155.4 18.5ZM155.4 18.5L156.9 19.3L155.5 19.6L154.0 18.8ZM154.0 18.8L155.5 19.6L154.1 19.9L152.7 19.1ZM152.7 19.1L154.1 19.9L152.4 20.3L150.9 19.5ZM150.9 19.5L152.4 20.3L150.6 20.8L149.2 19.9ZM149.2 19.9L150.6 20.8L148.8 21.2L147.4 20.4ZM173.6 15.3L175.5 16.1L173.4 16.6L171.6 15.7ZM171.6 15.7L173.4 16.6L171.0 17.2L169.1 16.3ZM169.1 16.3L171.0 17.2L168.5 17.8L166.6 16.9ZM166.6 16.9L168.5 17.8L166.3 18.3L164.4 17.4ZM164.4 17.4L166.3 18.3L165.0 18.7L163.1 17.8ZM163.1 17.8L165.0 18.7L163.6 19.0L161.8 18.1ZM161.8 18.1L163.6 19.0L162.3 19.3L160.5 18.4ZM160.5 18.4L162.3 19.3L161.0 19.6L159.2 18.7ZM159.2 18.7L161.0 19.6L158.6 20.2L156.9 19.3ZM156.9 19.3L158.6 20.2L157.2 20.5L155.5 19.6ZM155.5 19.6L157.2 20.5L155.8 20.9L154.1 19.9ZM154.1 19.9L155.8 20.9L154.1 21.3L152.4 20.3ZM152.4 20.3L154.1 21.3L152.3 21.8L150.6 20.8ZM150.6 20.8L152.3 21.8L150.5 22.2L148.8 21.2ZM175.5 16.1L177.2 16.8L175.1 17.3L173.4 16.6ZM173.4 16.6L175.1 17.3L172.6 17.9L171.0 17.2ZM171.0 17.2L172.6 17.9L170.1 18.6L168.5 17.8ZM168.5 17.8L170.1 18.6L167.9 19.1L166.3 18.3ZM166.3 18.3L167.9 19.1L166.5 19.4L165.0 18.7ZM165.0 18.7L166.5 19.4L165.2 19.8L163.6 19.0ZM163.6 19.0L165.2 19.8L163.9 20.1L162.3 19.3ZM162.3 19.3L163.9 20.1L162.5 20.5L161.0 19.6ZM161.0 19.6L162.5 20.5L160.2 21.0L158.6 20.2ZM158.6 20.2L160.2 21.0L158.8 21.4L157.2 20.5ZM157.2 20.5L158.8 21.4L157.3 21.8L155.8 20.9ZM155.8 20.9L157.3 21.8L155.6 22.2L154.1 21.3ZM154.1 21.3L155.6 22.2L153.8 22.6L152.3 21.8ZM152.3 21.8L153.8 22.6L151.9 23.1L150.5 22.2ZM177.2 16.8L179.2 17.7L177.1 18.2L175.1 17.3ZM175.1 17.3L177.1 18.2L174.6 18.8L172.6 17.9ZM172.6 17.9L174.6 18.8L173.3 19.2L171.3 18.2ZM171.3 18.2L173.3 19.2L172.0 19.5L170.1 18.6ZM170.1 18.6L172.0 19.5L169.8 20.1L167.9 19.1ZM167.9 19.1L169.8 20.1L168.5 20.4L166.5 19.4ZM166.5 19.4L168.5 20.4L167.1 20.7L165.2 19.8ZM165.2 19.8L167.1 20.7L165.8 21.1L163.9 20.1ZM163.9 20.1L165.8 21.1L164.4 21.4L162.5 20.5ZM162.5 20.5L164.4 21.4L162.0 22.1L160.2 21.0ZM160.2 21.0L162.0 22.1L160.6 22.4L158.8 21.4ZM158.8 21.4L160.6 22.4L159.2 22.8L157.3 21.8ZM157.3 21.8L159.2 22.8L157.4 23.2L155.6 22.2ZM155.6 22.2L157.4 23.2L155.6 23.7L153.8 22.6ZM153.8 22.6L155.6 23.7L153.7 24.2L151.9 23.1ZM179.2 17.7L180.9 18.4L178.8 19.0L177.1 18.2ZM180.9 18.4L182.7 19.2L180.6 19.8L178.8 19.0ZM177.1 18.2L178.8 19.0L176.3 19.6L174.6 18.8ZM178.8 19.0L180.6 19.8L178.1 20.5L176.3 19.6ZM174.6 18.8L176.3 19.6L175.0 20.0L173.3 19.2ZM173.3 19.2L175.0 20.0L173.7 20.3L172.0 19.5ZM176.3 19.6L178.1 20.5L176.8 20.8L175.0 20.0ZM175.0 20.0L176.8 20.8L175.5 21.2L173.7 20.3ZM172.0 19.5L173.7 20.3L171.5 20.9L169.8 20.1ZM173.7 20.3L175.5 21.2L173.2 21.8L171.5 20.9ZM169.8 20.1L171.5 20.9L170.2 21.2L168.5 20.4ZM168.5 20.4L170.2 21.2L168.8 21.6L167.1 20.7ZM171.5 20.9L173.2 21.8L171.9 22.1L170.2 21.2ZM170.2 21.2L171.9 22.1L170.6 22.5L168.8 21.6ZM167.1 20.7L168.8 21.6L167.5 22.0L165.8 21.1ZM165.8 21.1L167.5 22.0L166.1 22.3L164.4 21.4ZM168.8 21.6L170.6 22.5L169.2 22.8L167.5 22.0ZM167.5 22.0L169.2 22.8L167.8 23.2L166.1 22.3ZM164.4 21.4L166.1 22.3L163.7 22.9L162.0 22.1ZM166.1 22.3L167.8 23.2L165.4 23.9L163.7 22.9ZM162.0 22.1L163.7 22.9L162.2 23.3L160.6 22.4ZM160.6 22.4L162.2 23.3L160.8 23.7L159.2 22.8ZM163.7 22.9L165.4 23.9L163.9 24.3L162.2 23.3ZM162.2 23.3L163.9 24.3L162.5 24.6L160.8 23.7ZM159.2 22.8L160.8 23.7L159.0 24.2L157.4 23.2ZM157.4 23.2L159.0 24.2L157.2 24.7L155.6 23.7ZM155.6 23.7L157.2 24.7L155.3 25.1L153.7 24.2ZM160.8 23.7L162.5 24.6L160.6 25.1L159.0 24.2ZM159.0 24.2L160.6 25.1L158.8 25.6L157.2 24.7ZM157.2 24.7L158.8 25.6L156.9 26.1L155.3 25.1ZM182.7 19.2L184.6 20.0L182.5 20.6L180.6 19.8ZM180.6 19.8L182.5 20.6L181.2 21.0L179.4 20.1ZM179.4 20.1L181.2 21.0L179.9 21.3L178.1 20.5ZM178.1 20.5L179.9 21.3L178.6 21.7L176.8 20.8ZM176.8 20.8L178.6 21.7L177.3 22.0L175.5 21.2ZM175.5 21.2L177.3 22.0L175.1 22.6L173.2 21.8ZM173.2 21.8L175.1 22.6L173.7 23.0L171.9 22.1ZM171.9 22.1L173.7 23.0L172.3 23.4L170.6 22.5ZM170.6 22.5L172.3 23.4L171.0 23.8L169.2 22.8ZM169.2 22.8L171.0 23.8L169.6 24.1L167.8 23.2ZM167.8 23.2L169.6 24.1L167.1 24.8L165.4 23.9ZM165.4 23.9L167.1 24.8L165.7 25.2L163.9 24.3ZM163.9 24.3L165.7 25.2L164.2 25.6L162.5 24.6ZM162.5 24.6L164.2 25.6L162.4 26.1L160.6 25.1ZM160.6 25.1L162.4 26.1L160.5 26.6L158.8 25.6ZM158.8 25.6L160.5 26.6L158.6 27.2L156.9 26.1ZM184.6 20.0L186.8 21.0L184.7 21.6L182.5 20.6ZM182.5 20.6L184.7 21.6L183.4 22.0L181.2 21.0ZM181.2 21.0L183.4 22.0L182.1 22.3L179.9 21.3ZM179.9 21.3L182.1 22.3L180.8 22.7L178.6 21.7ZM178.6 21.7L180.8 22.7L179.5 23.1L177.3 22.0ZM177.3 22.0L179.5 23.1L177.2 23.7L175.1 22.6ZM175.1 22.6L177.2 23.7L175.9 24.1L173.7 23.0ZM173.7 23.0L175.9 24.1L174.5 24.5L172.3 23.4ZM172.3 23.4L174.5 24.5L173.1 24.9L171.0 23.8ZM171.0 23.8L173.1 24.9L171.7 25.3L169.6 24.1ZM169.6 24.1L171.7 25.3L169.2 26.0L167.1 24.8ZM167.1 24.8L169.2 26.0L167.8 26.4L165.7 25.2ZM165.7 25.2L167.8 26.4L166.3 26.8L164.2 25.6ZM164.2 25.6L166.3 26.8L164.4 27.3L162.4 26.1ZM162.4 26.1L164.4 27.3L162.5 27.8L160.5 26.6ZM160.5 26.6L162.5 27.8L160.6 28.4L158.6 27.2ZM186.8 21.0L188.8 21.9L186.7 22.5L184.7 21.6ZM184.7 21.6L186.7 22.5L185.4 22.9L183.4 22.0ZM183.4 22.0L185.4 22.9L184.1 23.2L182.1 22.3ZM182.1 22.3L184.1 23.2L182.8 23.6L180.8 22.7ZM180.8 22.7L182.8 23.6L181.5 24.0L179.5 23.1ZM179.5 23.1L181.5 24.0L179.2 24.7L177.2 23.7ZM177.2 23.7L179.2 24.7L177.8 25.0L175.9 24.1ZM175.9 24.1L177.8 25.0L176.4 25.4L174.5 24.5ZM174.5 24.5L176.4 25.4L175.0 25.8L173.1 24.9ZM173.1 24.9L175.0 25.8L173.6 26.3L171.7 25.3ZM171.7 25.3L173.6 26.3L171.1 27.0L169.2 26.0ZM169.2 26.0L171.1 27.0L169.6 27.4L167.8 26.4ZM167.8 26.4L169.6 27.4L168.1 27.8L166.3 26.8ZM166.3 26.8L168.1 27.8L166.3 28.4L164.4 27.3ZM164.4 27.3L166.3 28.4L164.4 28.9L162.5 27.8ZM162.5 27.8L164.4 28.9L162.4 29.5L160.6 28.4ZM188.8 21.9L190.9 22.8L188.7 23.4L186.7 22.5ZM186.7 22.5L188.7 23.4L187.4 23.8L185.4 22.9ZM185.4 22.9L187.4 23.8L186.1 24.2L184.1 23.2ZM184.1 23.2L186.1 24.2L184.8 24.5L182.8 23.6ZM182.8 23.6L184.8 24.5L183.5 24.9L181.5 24.0ZM181.5 24.0L183.5 24.9L181.2 25.6L179.2 24.7ZM179.2 24.7L181.2 25.6L179.8 26.0L177.8 25.0ZM177.8 25.0L179.8 26.0L178.4 26.4L176.4 25.4ZM176.4 25.4L178.4 26.4L177.0 26.9L175.0 25.8ZM175.0 25.8L177.0 26.9L175.5 27.3L173.6 26.3ZM173.6 26.3L175.5 27.3L173.0 28.0L171.1 27.0ZM171.1 27.0L173.0 28.0L171.6 28.5L169.6 27.4ZM169.6 27.4L171.6 28.5L170.0 28.9L168.1 27.8ZM168.1 27.8L170.0 28.9L168.2 29.5L166.3 28.4ZM166.3 28.4L168.2 29.5L166.2 30.0L164.4 28.9ZM164.4 28.9L166.2 30.0L164.3 30.6L162.4 29.5ZM190.9 22.8L193.2 23.7L191.0 24.4L188.7 23.4ZM193.2 23.7L195.5 24.8L193.3 25.5L191.0 24.4ZM188.7 23.4L191.0 24.4L189.7 24.8L187.4 23.8ZM187.4 23.8L189.7 24.8L188.4 25.2L186.1 24.2ZM191.0 24.4L193.3 25.5L192.0 25.9L189.7 24.8ZM189.7 24.8L192.0 25.9L190.7 26.3L188.4 25.2ZM186.1 24.2L188.4 25.2L187.1 25.6L184.8 24.5ZM184.8 24.5L187.1 25.6L185.7 26.0L183.5 24.9ZM188.4 25.2L190.7 26.3L189.4 26.7L187.1 25.6ZM187.1 25.6L189.4 26.7L188.0 27.1L185.7 26.0ZM183.5 24.9L185.7 26.0L183.4 26.7L181.2 25.6ZM185.7 26.0L188.0 27.1L185.7 27.8L183.4 26.7ZM181.2 25.6L183.4 26.7L182.0 27.1L179.8 26.0ZM179.8 26.0L182.0 27.1L180.6 27.6L178.4 26.4ZM183.4 26.7L185.7 27.8L184.3 28.3L182.0 27.1ZM182.0 27.1L184.3 28.3L182.9 28.7L180.6 27.6ZM178.4 26.4L180.6 27.6L179.2 28.0L177.0 26.9ZM177.0 26.9L179.2 28.0L177.7 28.4L175.5 27.3ZM180.6 27.6L182.9 28.7L181.4 29.2L179.2 28.0ZM179.2 28.0L181.4 29.2L180.0 29.6L177.7 28.4ZM175.5 27.3L177.7 28.4L176.5 28.8L174.3 27.7ZM174.3 27.7L176.5 28.8L175.2 29.2L173.0 28.0ZM177.7 28.4L180.0 29.6L178.7 30.0L176.5 28.8ZM176.5 28.8L178.7 30.0L177.4 30.4L175.2 29.2ZM173.0 28.0L175.2 29.2L173.7 29.7L171.6 28.5ZM171.6 28.5L173.7 29.7L172.2 30.1L170.0 28.9ZM175.2 29.2L177.4 30.4L175.9 30.9L173.7 29.7ZM173.7 29.7L175.9 30.9L174.4 31.4L172.2 30.1ZM170.0 28.9L172.2 30.1L170.3 30.7L168.2 29.5ZM168.2 29.5L170.3 30.7L168.3 31.3L166.2 30.0ZM166.2 30.0L168.3 31.3L166.4 31.9L164.3 30.6ZM172.2 30.1L174.4 31.4L172.5 32.0L170.3 30.7ZM170.3 30.7L172.5 32.0L170.5 32.6L168.3 31.3ZM168.3 31.3L170.5 32.6L168.5 33.2L166.4 31.9ZM195.5 24.8L197.8 25.7L195.6 26.5L193.3 25.5ZM197.8 25.7L200.1 26.8L197.9 27.5L195.6 26.5ZM193.3 25.5L195.6 26.5L194.3 26.9L192.0 25.9ZM192.0 25.9L194.3 26.9L193.0 27.3L190.7 26.3ZM195.6 26.5L197.9 27.5L196.6 27.9L194.3 26.9ZM194.3 26.9L196.6 27.9L195.3 28.4L193.0 27.3ZM190.7 26.3L193.0 27.3L191.6 27.7L189.4 26.7ZM189.4 26.7L191.6 27.7L190.3 28.2L188.0 27.1ZM193.0 27.3L195.3 28.4L193.9 28.8L191.6 27.7ZM191.6 27.7L193.9 28.8L192.6 29.2L190.3 28.2ZM188.0 27.1L190.3 28.2L187.9 28.9L185.7 27.8ZM190.3 28.2L192.6 29.2L190.2 30.0L187.9 28.9ZM185.7 27.8L187.9 28.9L186.5 29.4L184.3 28.3ZM184.3 28.3L186.5 29.4L185.1 29.8L182.9 28.7ZM187.9 28.9L190.2 30.0L188.8 30.5L186.5 29.4ZM186.5 29.4L188.8 30.5L187.3 31.0L185.1 29.8ZM182.9 28.7L185.1 29.8L183.6 30.3L181.4 29.2ZM181.4 29.2L183.6 30.3L182.2 30.8L180.0 29.6ZM185.1 29.8L187.3 31.0L185.9 31.5L183.6 30.3ZM183.6 30.3L185.9 31.5L184.4 31.9L182.2 30.8ZM180.0 29.6L182.2 30.8L180.9 31.2L178.7 30.0ZM178.7 30.0L180.9 31.2L179.6 31.6L177.4 30.4ZM182.2 30.8L184.4 31.9L183.1 32.4L180.9 31.2ZM180.9 31.2L183.1 32.4L181.8 32.8L179.6 31.6ZM177.4 30.4L179.6 31.6L178.1 32.1L175.9 30.9ZM175.9 30.9L178.1 32.1L176.5 32.6L174.4 31.4ZM179.6 31.6L181.8 32.8L180.3 33.3L178.1 32.1ZM178.1 32.1L180.3 33.3L178.7 33.8L176.5 32.6ZM174.4 31.4L176.5 32.6L174.6 33.2L172.5 32.0ZM172.5 32.0L174.6 33.2L172.6 33.8L170.5 32.6ZM170.5 32.6L172.6 33.8L170.6 34.5L168.5 33.2ZM176.5 32.6L178.7 33.8L176.8 34.4L174.6 33.2ZM174.6 33.2L176.8 34.4L174.8 35.1L172.6 33.8ZM172.6 33.8L174.8 35.1L172.8 35.8L170.6 34.5ZM200.1 26.8L201.3 27.3L199.1 28.0L197.9 27.5ZM201.3 27.3L202.5 27.8L200.3 28.6L199.1 28.0ZM197.9 27.5L199.1 28.0L197.8 28.5L196.6 27.9ZM196.6 27.9L197.8 28.5L196.4 28.9L195.3 28.4ZM199.1 28.0L200.3 28.6L199.0 29.0L197.8 28.5ZM197.8 28.5L199.0 29.0L197.6 29.5L196.4 28.9ZM195.3 28.4L196.4 28.9L195.1 29.3L193.9 28.8ZM193.9 28.8L195.1 29.3L193.7 29.8L192.6 29.2ZM196.4 28.9L197.6 29.5L196.3 29.9L195.1 29.3ZM195.1 29.3L196.3 29.9L194.9 30.4L193.7 29.8ZM192.6 29.2L193.7 29.8L191.3 30.6L190.2 30.0ZM193.7 29.8L194.9 30.4L192.5 31.2L191.3 30.6ZM190.2 30.0L191.3 30.6L189.9 31.1L188.8 30.5ZM188.8 30.5L189.9 31.1L188.5 31.6L187.3 31.0ZM191.3 30.6L192.5 31.2L191.1 31.7L189.9 31.1ZM189.9 31.1L191.1 31.7L189.7 32.2L188.5 31.6ZM187.3 31.0L188.5 31.6L187.0 32.0L185.9 31.5ZM185.9 31.5L187.0 32.0L185.5 32.5L184.4 31.9ZM188.5 31.6L189.7 32.2L188.2 32.7L187.0 32.0ZM187.0 32.0L188.2 32.7L186.7 33.2L185.5 32.5ZM184.4 31.9L185.5 32.5L184.3 33.0L183.1 32.4ZM183.1 32.4L184.3 33.0L183.0 33.4L181.8 32.8ZM185.5 32.5L186.7 33.2L185.4 33.6L184.3 33.0ZM184.3 33.0L185.4 33.6L184.1 34.0L183.0 33.4ZM181.8 32.8L183.0 33.4L181.4 33.9L180.3 33.3ZM180.3 33.3L181.4 33.9L179.9 34.4L178.7 33.8ZM183.0 33.4L184.1 34.0L182.6 34.6L181.4 33.9ZM181.4 33.9L182.6 34.6L181.0 35.1L179.9 34.4ZM178.7 33.8L179.9 34.4L177.9 35.1L176.8 34.4ZM176.8 34.4L177.9 35.1L175.9 35.8L174.8 35.1ZM174.8 35.1L175.9 35.8L173.9 36.4L172.8 35.8ZM179.9 34.4L181.0 35.1L179.0 35.8L177.9 35.1ZM177.9 35.1L179.0 35.8L177.0 36.4L175.9 35.8ZM175.9 35.8L177.0 36.4L175.0 37.1L173.9 36.4ZM202.5 27.8L203.9 28.4L201.7 29.2L200.3 28.6ZM203.9 28.4L205.4 29.1L203.2 29.8L201.7 29.2ZM200.3 28.6L201.7 29.2L200.4 29.6L199.0 29.0ZM199.0 29.0L200.4 29.6L199.1 30.1L197.6 29.5ZM201.7 29.2L203.2 29.8L201.9 30.3L200.4 29.6ZM200.4 29.6L201.9 30.3L200.5 30.8L199.1 30.1ZM197.6 29.5L199.1 30.1L197.7 30.6L196.3 29.9ZM196.3 29.9L197.7 30.6L196.3 31.0L194.9 30.4ZM199.1 30.1L200.5 30.8L199.2 31.3L197.7 30.6ZM197.7 30.6L199.2 31.3L197.8 31.7L196.3 31.0ZM194.9 30.4L196.3 31.0L193.9 31.9L192.5 31.2ZM196.3 31.0L197.8 31.7L195.4 32.6L193.9 31.9ZM192.5 31.2L193.9 31.9L192.5 32.4L191.1 31.7ZM191.1 31.7L192.5 32.4L191.1 32.9L189.7 32.2ZM193.9 31.9L195.4 32.6L193.9 33.1L192.5 32.4ZM192.5 32.4L193.9 33.1L192.5 33.6L191.1 32.9ZM189.7 32.2L191.1 32.9L189.6 33.4L188.2 32.7ZM188.2 32.7L189.6 33.4L188.1 33.9L186.7 33.2ZM191.1 32.9L192.5 33.6L191.0 34.1L189.6 33.4ZM189.6 33.4L191.0 34.1L189.5 34.6L188.1 33.9ZM186.7 33.2L188.1 33.9L186.8 34.3L185.4 33.6ZM185.4 33.6L186.8 34.3L185.5 34.8L184.1 34.0ZM188.1 33.9L189.5 34.6L188.2 35.1L186.8 34.3ZM186.8 34.3L188.2 35.1L186.9 35.5L185.5 34.8ZM184.1 34.0L185.5 34.8L184.0 35.3L182.6 34.6ZM182.6 34.6L184.0 35.3L182.4 35.9L181.0 35.1ZM185.5 34.8L186.9 35.5L185.4 36.1L184.0 35.3ZM184.0 35.3L185.4 36.1L183.8 36.6L182.4 35.9ZM181.0 35.1L182.4 35.9L180.4 36.5L179.0 35.8ZM179.0 35.8L180.4 36.5L178.4 37.2L177.0 36.4ZM177.0 36.4L178.4 37.2L176.3 37.9L175.0 37.1ZM182.4 35.9L183.8 36.6L181.8 37.3L180.4 36.5ZM180.4 36.5L181.8 37.3L179.8 38.0L178.4 37.2ZM178.4 37.2L179.8 38.0L177.7 38.8L176.3 37.9ZM205.4 29.1L207.1 29.8L204.9 30.6L203.2 29.8ZM207.1 29.8L208.9 30.6L206.6 31.4L204.9 30.6ZM208.9 30.6L210.7 31.3L208.4 32.2L206.6 31.4ZM203.2 29.8L204.9 30.6L203.6 31.1L201.9 30.3ZM201.9 30.3L203.6 31.1L202.2 31.6L200.5 30.8ZM204.9 30.6L206.6 31.4L205.3 31.9L203.6 31.1ZM203.6 31.1L205.3 31.9L204.0 32.4L202.2 31.6ZM206.6 31.4L208.4 32.2L207.1 32.7L205.3 31.9ZM205.3 31.9L207.1 32.7L205.7 33.2L204.0 32.4ZM200.5 30.8L202.2 31.6L200.9 32.0L199.2 31.3ZM199.2 31.3L200.9 32.0L199.5 32.5L197.8 31.7ZM202.2 31.6L204.0 32.4L202.6 32.9L200.9 32.0ZM200.9 32.0L202.6 32.9L201.2 33.4L199.5 32.5ZM204.0 32.4L205.7 33.2L204.4 33.7L202.6 32.9ZM202.6 32.9L204.4 33.7L203.0 34.2L201.2 33.4ZM197.8 31.7L199.5 32.5L197.1 33.4L195.4 32.6ZM199.5 32.5L201.2 33.4L198.8 34.2L197.1 33.4ZM201.2 33.4L203.0 34.2L200.5 35.1L198.8 34.2ZM195.4 32.6L197.1 33.4L195.6 33.9L193.9 33.1ZM193.9 33.1L195.6 33.9L194.2 34.4L192.5 33.6ZM197.1 33.4L198.8 34.2L197.3 34.8L195.6 33.9ZM195.6 33.9L197.3 34.8L195.9 35.3L194.2 34.4ZM198.8 34.2L200.5 35.1L199.1 35.6L197.3 34.8ZM197.3 34.8L199.1 35.6L197.6 36.2L195.9 35.3ZM192.5 33.6L194.2 34.4L192.7 35.0L191.0 34.1ZM191.0 34.1L192.7 35.0L191.2 35.5L189.5 34.6ZM194.2 34.4L195.9 35.3L194.4 35.8L192.7 35.0ZM192.7 35.0L194.4 35.8L192.9 36.4L191.2 35.5ZM195.9 35.3L197.6 36.2L196.1 36.7L194.4 35.8ZM194.4 35.8L196.1 36.7L194.6 37.3L192.9 36.4ZM189.5 34.6L191.2 35.5L189.9 36.0L188.2 35.1ZM188.2 35.1L189.9 36.0L188.6 36.4L186.9 35.5ZM191.2 35.5L192.9 36.4L191.6 36.9L189.9 36.0ZM189.9 36.0L191.6 36.9L190.3 37.4L188.6 36.4ZM192.9 36.4L194.6 37.3L193.3 37.8L191.6 36.9ZM191.6 36.9L193.3 37.8L192.0 38.3L190.3 37.4ZM186.9 35.5L188.6 36.4L187.0 37.0L185.4 36.1ZM185.4 36.1L187.0 37.0L185.4 37.6L183.8 36.6ZM188.6 36.4L190.3 37.4L188.7 37.9L187.0 37.0ZM187.0 37.0L188.7 37.9L187.1 38.5L185.4 37.6ZM190.3 37.4L192.0 38.3L190.4 38.9L188.7 37.9ZM188.7 37.9L190.4 38.9L188.8 39.5L187.1 38.5ZM183.8 36.6L185.4 37.6L183.4 38.3L181.8 37.3ZM181.8 37.3L183.4 38.3L181.4 39.0L179.8 38.0ZM179.8 38.0L181.4 39.0L179.3 39.7L177.7 38.8ZM185.4 37.6L187.1 38.5L185.1 39.2L183.4 38.3ZM183.4 38.3L185.1 39.2L183.0 40.0L181.4 39.0ZM181.4 39.0L183.0 40.0L181.0 40.7L179.3 39.7ZM187.1 38.5L188.8 39.5L186.8 40.2L185.1 39.2ZM185.1 39.2L186.8 40.2L184.7 41.0L183.0 40.0ZM183.0 40.0L184.7 41.0L182.7 41.8L181.0 40.7Z" fill="#e0f238" stroke="#e0f238" stroke-width="0.4"/>
<path d="M145.4 19.1L146.1 19.5L144.6 21.6L144.0 21.2ZM146.1 19.5L146.5 19.8L145.0 21.9L144.6 21.6ZM182.7 41.8L183.8 43.5L182.6 45.4L181.5 43.8Z" fill="#c9f133" stroke="#c9f133" stroke-width="0.4"/>
<path d="M144.0 21.2L144.6 21.6L143.1 23.8L142.5 23.3ZM144.6 21.6L145.0 21.9L143.6 24.1L143.1 23.8ZM213.2 34.3L215.2 35.2L213.9 34.4L211.9 32.8ZM182.6 45.4L183.8 47.1L182.6 48.8L181.5 47.4Z" fill="#a1f02b" stroke="#a1f02b" stroke-width="0.4"/>
<path d="M142.5 23.3L143.1 23.8L141.7 25.9L141.0 25.5ZM143.1 23.8L143.6 24.1L142.1 26.2L141.7 25.9ZM180.3 49.3L181.4 50.6L180.2 52.5L179.1 51.3ZM183.8 50.3L184.9 51.9L183.7 53.3L182.6 52.0ZM220.8 38.7L222.3 40.4L221.0 41.0L219.5 39.2ZM219.5 39.2L221.0 41.0L219.7 41.5L218.2 39.8ZM218.2 39.8L219.7 41.5L217.5 42.5L216.0 40.8ZM216.0 40.8L217.5 42.5L216.1 43.1L214.6 41.4ZM214.6 41.4L216.1 43.1L214.8 43.8L213.3 41.9ZM213.3 41.9L214.8 43.8L213.4 44.4L211.9 42.6ZM211.9 42.6L213.4 44.4L212.0 45.0L210.5 43.2ZM210.5 43.2L212.0 45.0L210.8 45.6L209.3 43.7ZM209.3 43.7L210.8 45.6L209.5 46.1L208.0 44.2ZM208.0 44.2L209.5 46.1L208.1 46.8L206.6 44.9ZM206.6 44.9L208.1 46.8L206.6 47.4L205.1 45.5ZM205.1 45.5L206.6 47.4L205.1 48.1L203.6 46.2ZM203.6 46.2L205.1 48.1L203.5 48.8L202.1 46.8ZM202.1 46.8L203.5 48.8L202.2 49.4L200.7 47.4ZM200.7 47.4L202.2 49.4L200.8 50.0L199.4 48.0ZM199.4 48.0L200.8 50.0L199.2 50.7L197.8 48.7ZM197.8 48.7L199.2 50.7L197.6 51.5L196.2 49.4ZM196.2 49.4L197.6 51.5L195.6 52.5L194.1 50.5ZM188.5 50.8L189.9 52.7L188.5 54.1L187.1 52.4Z" fill="#6ef031" stroke="#6ef031" stroke-width="0.4"/>
<path d="M141.0 25.5L141.7 25.9L140.2 28.1L139.5 27.6ZM141.7 25.9L142.1 26.2L140.6 28.4L140.2 28.1ZM182.5 54.8L183.7 56.1L182.5 57.4L181.3 56.4ZM223.8 42.1L225.4 43.9L224.1 44.5L222.6 42.7ZM222.6 42.7L224.1 44.5L222.8 45.1L221.3 43.3ZM221.3 43.3L222.8 45.1L220.6 46.2L219.0 44.4ZM219.0 44.4L220.6 46.2L219.2 46.8L217.7 45.0ZM217.7 45.0L219.2 46.8L217.9 47.5L216.3 45.6ZM216.3 45.6L217.9 47.5L216.5 48.1L214.9 46.2ZM214.9 46.2L216.5 48.1L215.1 48.8L213.5 46.9ZM213.5 46.9L215.1 48.8L213.8 49.4L212.3 47.5ZM212.3 47.5L213.8 49.4L212.6 50.0L211.1 48.0ZM211.1 48.0L212.6 50.0L211.1 50.7L209.6 48.7ZM209.6 48.7L211.1 50.7L209.6 51.4L208.1 49.4ZM208.1 49.4L209.6 51.4L208.1 52.1L206.6 50.1ZM206.6 50.1L208.1 52.1L206.6 52.9L205.0 50.8ZM205.0 50.8L206.6 52.9L205.2 53.5L203.7 51.4ZM203.7 51.4L205.2 53.5L203.9 54.1L202.4 52.1ZM202.4 52.1L203.9 54.1L202.3 54.9L200.7 52.8ZM200.7 52.8L202.3 54.9L200.6 55.7L199.1 53.6ZM199.1 53.6L200.6 55.7L198.6 56.7L197.0 54.6ZM197.0 54.6L198.6 56.7L196.5 57.7L194.9 55.6ZM194.9 55.6L196.5 57.7L194.3 58.7L192.8 56.7ZM184.2 55.5L185.6 57.0L184.2 58.5L182.8 57.1ZM187.1 55.6L188.5 57.3L187.0 58.6L185.6 57.0ZM189.9 56.0L191.4 57.8L190.0 59.0L188.5 57.3Z" fill="#3ff03e" stroke="#3ff03e" stroke-width="0.4"/>
<path d="M139.5 27.6L140.2 28.1L138.3 29.0L137.7 28.5ZM140.2 28.1L140.6 28.4L138.7 29.3L138.3 29.0ZM140.6 28.4L141.5 29.1L139.6 29.9L138.7 29.3ZM141.5 29.1L142.8 30.1L140.9 31.0L139.6 29.9ZM142.8 30.1L144.4 31.3L142.5 32.2L140.9 31.0ZM144.4 31.3L145.8 32.3L143.9 33.3L142.5 32.2ZM145.8 32.3L147.5 33.6L145.6 34.6L143.9 33.3ZM147.5 33.6L149.0 34.7L147.1 35.7L145.6 34.6ZM149.0 34.7L150.6 35.9L148.6 36.9L147.1 35.7ZM150.6 35.9L152.2 37.1L150.2 38.1L148.6 36.9ZM152.2 37.1L154.2 38.6L152.1 39.6L150.2 38.1ZM154.2 38.6L155.9 39.9L153.9 41.0L152.1 39.6ZM155.9 39.9L157.7 41.2L155.6 42.3L153.9 41.0ZM157.7 41.2L159.8 42.7L157.6 43.9L155.6 42.3ZM159.8 42.7L161.9 44.3L159.7 45.5L157.6 43.9ZM161.9 44.3L163.9 45.8L161.7 47.0L159.7 45.5ZM163.9 45.8L166.0 47.4L163.8 48.6L161.7 47.0ZM166.0 47.4L167.0 48.2L164.8 49.5L163.8 48.6ZM167.0 48.2L168.1 49.0L165.9 50.3L164.8 49.5ZM170.8 50.9L172.3 52.1L170.7 53.2L169.1 52.0ZM172.3 52.1L174.0 53.3L172.3 54.5L170.7 53.2ZM174.0 53.3L175.6 54.5L173.9 55.8L172.3 54.5ZM175.6 54.5L177.4 55.9L175.7 57.3L173.9 55.8ZM177.4 55.9L179.3 57.3L177.6 58.8L175.7 57.3ZM179.3 57.3L181.3 58.8L179.5 60.4L177.6 58.8ZM187.0 61.3L188.5 62.8L187.0 63.9L185.5 62.5ZM181.3 58.8L183.1 60.4L181.4 62.1L179.5 60.4ZM226.3 47.9L228.1 49.3L225.8 49.9L224.1 48.6ZM217.9 54.0L219.7 55.4L218.2 55.8L216.4 54.5ZM199.9 60.9L201.6 62.5L199.4 64.1L197.7 62.3ZM190.7 61.2L192.4 63.0L190.5 64.2L188.9 62.5ZM196.0 60.5L197.7 62.3L195.9 63.5L194.2 61.7ZM218.2 55.8L219.9 56.8L218.4 57.4L216.7 56.2ZM219.9 56.8L221.7 57.9L220.2 58.6L218.4 57.4ZM221.7 57.9L223.5 59.0L222.0 59.8L220.2 58.6ZM218.4 57.4L220.2 58.6L218.7 59.2L216.9 58.1ZM220.2 58.6L222.0 59.8L220.5 60.3L218.7 59.2ZM222.0 59.8L223.8 61.0L222.3 61.5L220.5 60.3ZM211.0 61.3L212.7 62.6L211.1 63.9L209.3 62.4ZM214.4 61.3L216.2 62.4L214.5 64.0L212.7 62.6ZM216.2 62.4L218.0 63.5L216.4 65.3L214.5 64.0ZM207.6 60.9L209.3 62.4L207.8 63.8L206.1 62.2Z" fill="#2af265" stroke="#2af265" stroke-width="0.4"/>
<path d="M137.7 28.5L138.3 29.0L136.4 29.8L135.8 29.3ZM138.3 29.0L138.7 29.3L136.8 30.2L136.4 29.8ZM138.7 29.3L139.6 29.9L137.7 30.8L136.8 30.2ZM139.6 29.9L140.9 31.0L138.9 31.9L137.7 30.8ZM140.9 31.0L142.5 32.2L140.5 33.1L138.9 31.9ZM142.5 32.2L143.9 33.3L141.9 34.2L140.5 33.1ZM143.9 33.3L145.6 34.6L143.5 35.5L141.9 34.2ZM145.6 34.6L147.1 35.7L145.0 36.7L143.5 35.5ZM147.1 35.7L148.6 36.9L146.6 37.9L145.0 36.7ZM148.6 36.9L150.2 38.1L148.1 39.2L146.6 37.9ZM150.2 38.1L152.1 39.6L150.0 40.7L148.1 39.2ZM152.1 39.6L153.9 41.0L151.7 42.1L150.0 40.7ZM153.9 41.0L155.6 42.3L153.5 43.5L151.7 42.1ZM155.6 42.3L157.6 43.9L155.5 45.1L153.5 43.5ZM157.6 43.9L159.7 45.5L157.5 46.7L155.5 45.1ZM159.7 45.5L161.7 47.0L159.5 48.3L157.5 46.7ZM161.7 47.0L163.8 48.6L161.6 49.9L159.5 48.3ZM163.8 48.6L164.8 49.5L162.6 50.8L161.6 49.9ZM164.8 49.5L165.9 50.3L163.7 51.6L162.6 50.8ZM166.5 50.0L167.8 51.0L166.1 52.0L164.8 51.0ZM167.8 51.0L169.1 52.0L167.4 53.0L166.1 52.0ZM169.1 52.0L170.7 53.2L169.0 54.3L167.4 53.0ZM170.7 53.2L172.3 54.5L170.5 55.7L169.0 54.3ZM172.3 54.5L173.9 55.8L172.2 57.1L170.5 55.7ZM183.1 60.4L185.0 62.1L183.3 63.9L181.4 62.1ZM228.9 46.6L230.7 48.0L229.4 48.6L227.6 47.2ZM227.6 47.2L229.4 48.6L228.1 49.3L226.3 47.9ZM225.8 49.9L227.7 51.2L226.3 51.9L224.5 50.6ZM224.5 50.6L226.3 51.9L225.0 52.6L223.1 51.3ZM223.1 51.3L225.0 52.6L223.6 53.3L221.7 52.0ZM221.7 52.0L223.6 53.3L222.2 54.1L220.3 52.7ZM220.3 52.7L222.2 54.1L220.9 54.7L219.1 53.4ZM219.1 53.4L220.9 54.7L219.7 55.4L217.9 54.0ZM203.7 61.0L205.5 62.6L203.4 64.2L201.6 62.5ZM188.9 62.5L190.5 64.2L188.7 65.5L187.0 63.9ZM194.2 61.7L195.9 63.5L194.1 64.7L192.4 63.0ZM192.4 63.0L194.1 64.7L192.2 66.0L190.5 64.2ZM197.7 62.3L199.4 64.1L197.6 65.3L195.9 63.5ZM227.7 51.2L229.4 52.2L228.1 53.0L226.3 51.9ZM226.3 51.9L228.1 53.0L226.7 53.7L225.0 52.6ZM225.0 52.6L226.7 53.7L225.3 54.3L223.6 53.3ZM223.6 53.3L225.3 54.3L223.9 55.0L222.2 54.1ZM225.3 54.3L227.1 55.4L225.6 56.0L223.9 55.0ZM227.1 55.4L228.9 56.4L227.4 56.9L225.6 56.0ZM222.2 54.1L223.9 55.0L222.7 55.7L220.9 54.7ZM220.9 54.7L222.7 55.7L221.4 56.3L219.7 55.4ZM223.9 55.0L225.6 56.0L224.4 56.6L222.7 55.7ZM222.7 55.7L224.4 56.6L223.2 57.3L221.4 56.3ZM225.6 56.0L227.4 56.9L226.2 57.6L224.4 56.6ZM224.4 56.6L226.2 57.6L225.0 58.3L223.2 57.3ZM227.4 56.9L229.3 57.9L228.1 58.6L226.2 57.6ZM226.2 57.6L228.1 58.6L226.8 59.3L225.0 58.3ZM219.7 55.4L221.4 56.3L219.9 56.8L218.2 55.8ZM221.4 56.3L223.2 57.3L221.7 57.9L219.9 56.8ZM223.2 57.3L225.0 58.3L223.5 59.0L221.7 57.9ZM225.0 58.3L226.8 59.3L225.3 60.2L223.5 59.0ZM223.5 59.0L225.3 60.2L223.8 61.0L222.0 59.8ZM212.7 62.6L214.5 64.0L212.9 65.5L211.1 63.9ZM206.1 62.2L207.8 63.8L206.2 65.2L204.5 63.4ZM209.3 62.4L211.1 63.9L209.5 65.4L207.8 63.8Z" fill="#27f36e" stroke="#27f36e" stroke-width="0.4"/>
<path d="M135.8 29.3L136.4 29.8L134.5 30.7L133.9 30.2ZM136.4 29.8L136.8 30.2L134.9 31.0L134.5 30.7ZM136.8 30.2L137.7 30.8L135.7 31.7L134.9 31.0ZM137.7 30.8L138.9 31.9L137.0 32.8L135.7 31.7ZM138.9 31.9L140.5 33.1L138.5 34.0L137.0 32.8ZM140.5 33.1L141.9 34.2L139.9 35.2L138.5 34.0ZM141.9 34.2L143.5 35.5L141.5 36.5L139.9 35.2ZM143.5 35.5L145.0 36.7L143.0 37.7L141.5 36.5ZM145.0 36.7L146.6 37.9L144.5 39.0L143.0 37.7ZM146.6 37.9L148.1 39.2L146.0 40.3L144.5 39.0ZM148.1 39.2L150.0 40.7L147.9 41.8L146.0 40.3ZM150.0 40.7L151.7 42.1L149.6 43.2L147.9 41.8ZM151.7 42.1L153.5 43.5L151.3 44.7L149.6 43.2ZM153.5 43.5L155.5 45.1L153.3 46.3L151.3 44.7ZM155.5 45.1L157.5 46.7L155.3 48.0L153.3 46.3ZM157.5 46.7L159.5 48.3L157.3 49.6L155.3 48.0ZM159.5 48.3L161.6 49.9L159.3 51.3L157.3 49.6ZM161.6 49.9L162.6 50.8L160.3 52.1L159.3 51.3ZM162.6 50.8L163.7 51.6L161.4 53.0L160.3 52.1ZM163.1 52.0L164.4 53.0L162.6 54.1L161.4 53.0ZM164.4 53.0L165.7 54.1L163.9 55.1L162.6 54.1ZM165.7 54.1L167.2 55.5L165.5 56.7L163.9 55.1ZM170.5 55.7L172.2 57.1L170.4 58.5L168.8 57.0ZM172.2 57.1L174.0 58.7L172.2 60.1L170.4 58.5ZM179.5 60.4L181.4 62.1L179.6 63.9L177.8 62.0ZM230.7 48.0L232.5 49.4L231.2 50.0L229.4 48.6ZM229.4 48.6L231.2 50.0L229.9 50.7L228.1 49.3ZM194.1 64.7L195.8 66.5L194.0 67.7L192.2 66.0ZM199.4 64.1L201.2 66.0L199.4 67.1L197.6 65.3ZM187.0 63.9L188.7 65.5L187.2 67.0L185.6 65.4ZM232.5 49.4L234.2 50.2L232.9 50.9L231.2 50.0ZM231.2 50.0L232.9 50.9L231.7 51.6L229.9 50.7ZM234.2 50.2L236.0 51.0L234.7 51.7L232.9 50.9ZM232.9 50.9L234.7 51.7L233.4 52.5L231.7 51.6ZM236.0 51.0L237.8 51.9L236.5 52.6L234.7 51.7ZM234.7 51.7L236.5 52.6L235.2 53.3L233.4 52.5ZM237.8 51.9L239.6 52.8L238.3 53.5L236.5 52.6ZM236.5 52.6L238.3 53.5L237.0 54.2L235.2 53.3ZM231.7 51.6L233.4 52.5L231.2 53.3L229.4 52.2ZM233.4 52.5L235.2 53.3L233.0 54.4L231.2 53.3ZM235.2 53.3L237.0 54.2L234.8 55.5L233.0 54.4ZM231.2 53.3L233.0 54.4L231.6 55.2L229.8 54.1ZM229.8 54.1L231.6 55.2L230.2 55.9L228.4 54.8ZM233.0 54.4L234.8 55.5L233.4 56.3L231.6 55.2ZM231.6 55.2L233.4 56.3L232.1 57.1L230.2 55.9ZM230.2 55.9L232.1 57.1L230.7 57.5L228.9 56.4ZM204.5 63.4L206.2 65.2L204.6 66.6L202.9 64.7ZM207.8 63.8L209.5 65.4L207.9 67.0L206.2 65.2ZM211.1 63.9L212.9 65.5L211.3 67.2L209.5 65.4Z" fill="#20f480" stroke="#20f480" stroke-width="0.4"/>
<path d="M133.9 30.2L134.5 30.7L132.7 31.6L132.1 31.0ZM134.5 30.7L134.9 31.0L133.1 31.9L132.7 31.6ZM134.9 31.0L135.7 31.7L133.9 32.6L133.1 31.9ZM135.7 31.7L137.0 32.8L135.1 33.7L133.9 32.6ZM137.0 32.8L138.5 34.0L136.6 35.0L135.1 33.7ZM138.5 34.0L139.9 35.2L138.0 36.1L136.6 35.0ZM139.9 35.2L141.5 36.5L139.6 37.5L138.0 36.1ZM141.5 36.5L143.0 37.7L141.0 38.7L139.6 37.5ZM143.0 37.7L144.5 39.0L142.5 40.0L141.0 38.7ZM144.5 39.0L146.0 40.3L144.1 41.3L142.5 40.0ZM146.0 40.3L147.9 41.8L145.9 42.9L144.1 41.3ZM147.9 41.8L149.6 43.2L147.6 44.4L145.9 42.9ZM149.6 43.2L151.3 44.7L149.3 45.8L147.6 44.4ZM151.3 44.7L153.3 46.3L151.2 47.5L149.3 45.8ZM153.3 46.3L155.3 48.0L153.2 49.2L151.2 47.5ZM155.3 48.0L157.3 49.6L155.1 50.9L153.2 49.2ZM157.3 49.6L159.3 51.3L157.1 52.6L155.1 50.9ZM159.3 51.3L160.3 52.1L158.2 53.5L157.1 52.6ZM160.3 52.1L161.4 53.0L159.2 54.4L158.2 53.5ZM161.4 53.0L162.6 54.1L160.5 55.4L159.2 54.4ZM162.6 54.1L163.9 55.1L161.8 56.5L160.5 55.4ZM167.2 55.5L168.8 57.0L167.0 58.2L165.5 56.7ZM163.9 55.1L165.5 56.7L163.8 57.7L162.3 56.2ZM174.0 58.7L175.9 60.3L174.1 61.9L172.2 60.1ZM175.9 60.3L177.8 62.0L176.0 63.6L174.1 61.9ZM181.4 62.1L183.3 63.9L181.5 65.8L179.6 63.9ZM192.2 66.0L194.0 67.7L192.1 69.0L190.3 67.2ZM197.6 65.3L199.4 67.1L197.6 68.3L195.8 66.5ZM195.8 66.5L197.6 68.3L195.7 69.5L194.0 67.7ZM188.7 65.5L190.3 67.2L188.9 68.7L187.2 67.0ZM202.9 64.7L204.6 66.6L202.9 68.0L201.2 66.0ZM212.9 65.5L214.7 67.1L213.1 68.9L211.3 67.2Z" fill="#20f486" stroke="#20f486" stroke-width="0.4"/>
<path d="M132.1 31.0L132.7 31.6L130.8 32.4L130.2 31.9ZM132.7 31.6L133.1 31.9L131.2 32.8L130.8 32.4ZM133.1 31.9L133.9 32.6L132.0 33.5L131.2 32.8ZM133.9 32.6L135.1 33.7L133.3 34.6L132.0 33.5ZM135.1 33.7L136.6 35.0L134.7 35.9L133.3 34.6ZM136.6 35.0L138.0 36.1L136.1 37.1L134.7 35.9ZM138.0 36.1L139.6 37.5L137.7 38.5L136.1 37.1ZM139.6 37.5L141.0 38.7L139.1 39.8L137.7 38.5ZM141.0 38.7L142.5 40.0L140.5 41.1L139.1 39.8ZM142.5 40.0L144.1 41.3L142.0 42.4L140.5 41.1ZM144.1 41.3L145.9 42.9L143.9 44.0L142.0 42.4ZM145.9 42.9L147.6 44.4L145.5 45.5L143.9 44.0ZM147.6 44.4L149.3 45.8L147.2 47.0L145.5 45.5ZM149.3 45.8L151.2 47.5L149.1 48.7L147.2 47.0ZM151.2 47.5L153.2 49.2L151.1 50.4L149.1 48.7ZM153.2 49.2L155.1 50.9L153.0 52.1L151.1 50.4ZM155.1 50.9L157.1 52.6L155.0 53.9L153.0 52.1ZM157.1 52.6L158.2 53.5L156.0 54.8L155.0 53.9ZM158.2 53.5L159.2 54.4L157.0 55.7L156.0 54.8ZM159.2 54.4L160.5 55.4L158.3 56.8L157.0 55.7ZM160.5 55.4L161.8 56.5L159.5 58.0L158.3 56.8ZM162.3 56.2L163.8 57.7L162.1 58.8L160.6 57.2ZM163.8 57.7L165.4 59.3L163.7 60.4L162.1 58.8ZM167.0 58.2L168.6 59.8L167.0 60.9L165.4 59.3ZM172.2 60.1L174.1 61.9L172.3 63.4L170.4 61.6ZM179.6 63.9L181.5 65.8L179.7 67.7L177.8 65.6ZM187.2 67.0L188.9 68.7L187.5 70.1L185.8 68.5ZM192.1 69.0L193.8 70.8L192.4 72.1L190.6 70.4ZM204.6 66.6L206.3 68.5L204.7 70.1L202.9 68.0ZM207.9 67.0L209.7 68.8L208.1 70.5L206.3 68.5ZM211.3 67.2L213.1 68.9L211.5 70.7L209.7 68.8ZM197.6 68.3L198.9 69.9L197.1 71.1L195.7 69.5ZM195.7 69.5L197.1 71.1L195.2 72.3L193.8 70.8ZM202.6 67.6L204.0 69.3L202.2 70.4L200.8 68.7Z" fill="#20f593" stroke="#20f593" stroke-width="0.4"/>
<path d="M130.2 31.9L130.8 32.4L129.0 33.3L128.4 32.8ZM130.8 32.4L131.2 32.8L129.4 33.7L129.0 33.3ZM131.2 32.8L132.0 33.5L130.1 34.4L129.4 33.7ZM132.0 33.5L133.3 34.6L131.4 35.5L130.1 34.4ZM133.3 34.6L134.7 35.9L132.8 36.9L131.4 35.5ZM134.7 35.9L136.1 37.1L134.1 38.1L132.8 36.9ZM136.1 37.1L137.7 38.5L135.7 39.5L134.1 38.1ZM137.7 38.5L139.1 39.8L137.1 40.8L135.7 39.5ZM139.1 39.8L140.5 41.1L138.5 42.1L137.1 40.8ZM140.5 41.1L142.0 42.4L140.0 43.5L138.5 42.1ZM142.0 42.4L143.9 44.0L141.8 45.2L140.0 43.5ZM143.9 44.0L145.5 45.5L143.4 46.6L141.8 45.2ZM145.5 45.5L147.2 47.0L145.1 48.2L143.4 46.6ZM147.2 47.0L149.1 48.7L147.0 49.9L145.1 48.2ZM149.1 48.7L151.1 50.4L148.9 51.7L147.0 49.9ZM151.1 50.4L153.0 52.1L150.8 53.4L148.9 51.7ZM153.0 52.1L155.0 53.9L152.8 55.2L150.8 53.4ZM155.0 53.9L156.0 54.8L153.8 56.2L152.8 55.2ZM156.0 54.8L157.0 55.7L154.8 57.1L153.8 56.2ZM157.0 55.7L158.3 56.8L156.0 58.2L154.8 57.1ZM158.3 56.8L159.5 58.0L157.3 59.4L156.0 58.2ZM160.6 57.2L162.1 58.8L160.4 59.9L159.0 58.3ZM162.1 58.8L163.7 60.4L162.0 61.6L160.4 59.9ZM165.4 59.3L167.0 60.9L165.3 62.1L163.7 60.4ZM174.1 61.9L176.0 63.6L174.2 65.3L172.3 63.4ZM168.6 59.8L170.4 61.6L168.7 62.7L167.0 60.9ZM170.4 61.6L172.3 63.4L170.6 64.6L168.7 62.7ZM184.2 67.0L185.8 68.5L184.3 70.0L182.7 68.6ZM188.9 68.7L190.6 70.4L189.2 71.7L187.5 70.1ZM190.6 70.4L192.4 72.1L190.9 73.4L189.2 71.7ZM200.8 68.7L202.2 70.4L200.3 71.5L198.9 69.9ZM198.9 69.9L200.3 71.5L198.4 72.7L197.1 71.1ZM193.8 70.8L195.2 72.3L193.4 73.9L192.0 72.4Z" fill="#20f699" stroke="#20f699" stroke-width="0.4"/>
<path d="M128.4 32.8L129.0 33.3L126.8 34.1L126.2 33.5ZM129.0 33.3L129.4 33.7L127.1 34.4L126.8 34.1ZM129.4 33.7L130.1 34.4L127.9 35.2L127.1 34.4ZM130.1 34.4L131.4 35.5L129.1 36.3L127.9 35.2ZM131.4 35.5L132.8 36.9L130.5 37.7L129.1 36.3ZM132.8 36.9L134.1 38.1L131.8 38.9L130.5 37.7ZM134.1 38.1L135.7 39.5L133.4 40.4L131.8 38.9ZM135.7 39.5L137.1 40.8L135.1 41.6L133.7 40.3ZM137.1 40.8L138.5 42.1L136.5 42.9L135.1 41.6ZM138.5 42.1L140.0 43.5L137.9 44.3L136.5 42.9ZM140.0 43.5L141.8 45.2L139.7 46.0L137.9 44.3ZM141.8 45.2L143.4 46.6L141.3 47.5L139.7 46.0ZM143.4 46.6L145.1 48.2L142.9 49.1L141.3 47.5ZM145.1 48.2L146.3 49.3L144.2 50.3L142.9 49.1ZM146.3 49.3L147.6 50.5L145.4 51.5L144.2 50.3ZM147.6 50.5L148.9 51.7L146.7 52.7L145.4 51.5ZM148.9 51.7L150.2 52.9L147.9 53.9L146.7 52.7ZM150.2 52.9L151.4 54.0L149.2 55.1L147.9 53.9ZM151.4 54.0L152.8 55.2L150.5 56.3L149.2 55.1ZM152.8 55.2L153.8 56.2L151.8 57.1L150.8 56.2ZM153.8 56.2L154.8 57.1L152.8 58.1L151.8 57.1ZM154.8 57.1L156.0 58.2L154.0 59.2L152.8 58.1ZM156.0 58.2L157.3 59.4L155.2 60.4L154.0 59.2ZM159.0 58.3L160.4 59.9L158.7 61.0L157.3 59.4ZM163.7 60.4L165.3 62.1L163.5 63.2L162.0 61.6ZM167.0 60.9L168.7 62.7L167.0 63.9L165.3 62.1ZM172.3 63.4L174.2 65.3L172.5 66.5L170.6 64.6ZM176.0 63.6L177.8 65.6L176.0 67.4L174.2 65.3ZM181.5 65.8L183.5 67.8L181.6 69.8L179.7 67.7ZM185.8 68.5L187.5 70.1L186.0 71.6L184.3 70.0ZM187.5 70.1L189.2 71.7L187.7 73.1L186.0 71.6ZM206.3 68.5L208.1 70.5L206.4 72.2L204.7 70.1ZM209.7 68.8L211.5 70.7L209.9 72.6L208.1 70.5ZM197.1 71.1L198.4 72.7L196.5 73.9L195.2 72.3ZM204.0 69.3L205.4 71.0L203.5 72.1L202.2 70.4ZM202.2 70.4L203.5 72.1L201.7 73.2L200.3 71.5ZM195.2 72.3L196.5 73.9L194.7 75.4L193.4 73.9Z" fill="#20f69f" stroke="#20f69f" stroke-width="0.4"/>
<path d="M126.2 33.5L126.8 34.1L124.5 34.9L124.0 34.3ZM126.8 34.1L127.1 34.4L124.9 35.2L124.5 34.9ZM127.1 34.4L127.9 35.2L125.7 36.0L124.9 35.2ZM127.9 35.2L129.1 36.3L126.8 37.2L125.7 36.0ZM129.1 36.3L130.5 37.7L128.2 38.6L126.8 37.2ZM130.5 37.7L131.8 38.9L129.5 39.8L128.2 38.6ZM131.8 38.9L133.4 40.4L131.0 41.3L129.5 39.8ZM133.7 40.3L135.1 41.6L133.0 42.4L131.7 41.1ZM135.1 41.6L136.5 42.9L134.4 43.8L133.0 42.4ZM136.5 42.9L137.9 44.3L135.8 45.2L134.4 43.8ZM137.9 44.3L139.7 46.0L137.6 46.9L135.8 45.2ZM139.7 46.0L141.3 47.5L139.1 48.5L137.6 46.9ZM141.3 47.5L142.9 49.1L140.8 50.1L139.1 48.5ZM142.9 49.1L144.2 50.3L142.0 51.3L140.8 50.1ZM144.2 50.3L145.4 51.5L143.2 52.5L142.0 51.3ZM145.4 51.5L146.7 52.7L144.5 53.7L143.2 52.5ZM146.7 52.7L147.9 53.9L145.7 54.9L144.5 53.7ZM147.9 53.9L149.2 55.1L146.9 56.2L145.7 54.9ZM149.2 55.1L150.5 56.3L148.2 57.4L146.9 56.2ZM150.8 56.2L151.8 57.1L149.8 58.1L148.8 57.2ZM148.8 57.2L149.8 58.1L147.7 59.1L146.7 58.1ZM151.8 57.1L152.8 58.1L150.8 59.1L149.8 58.1ZM149.8 58.1L150.8 59.1L148.7 60.1L147.7 59.1ZM152.8 58.1L154.0 59.2L152.0 60.3L150.8 59.1ZM150.8 59.1L152.0 60.3L149.9 61.3L148.7 60.1ZM154.0 59.2L155.2 60.4L153.2 61.5L152.0 60.3ZM152.0 60.3L153.2 61.5L151.1 62.5L149.9 61.3ZM160.4 59.9L162.0 61.6L160.2 62.7L158.7 61.0ZM162.0 61.6L163.5 63.2L161.8 64.4L160.2 62.7ZM157.3 59.4L158.7 61.0L156.7 62.1L155.2 60.4ZM155.2 60.4L156.7 62.1L154.6 63.1L153.2 61.5ZM158.7 61.0L160.2 62.7L158.2 63.8L156.7 62.1ZM165.3 62.1L167.0 63.9L165.3 65.1L163.5 63.2ZM168.7 62.7L170.6 64.6L168.8 65.8L167.0 63.9ZM170.6 64.6L172.5 66.5L170.7 67.8L168.8 65.8ZM177.8 65.6L179.7 67.7L177.8 69.6L176.0 67.4ZM174.2 65.3L175.5 66.9L173.8 68.1L172.5 66.5ZM182.7 68.6L184.3 70.0L182.9 71.6L181.3 70.2ZM189.2 71.7L190.9 73.4L189.5 74.8L187.7 73.1ZM200.3 71.5L201.7 73.2L199.8 74.4L198.4 72.7ZM198.4 72.7L199.8 74.4L197.9 75.6L196.5 73.9ZM192.0 72.4L193.4 73.9L191.5 75.4L190.2 74.1Z" fill="#20f7a5" stroke="#20f7a5" stroke-width="0.4"/>
<path d="M124.0 34.3L124.5 34.9L122.3 35.7L121.7 35.1ZM124.5 34.9L124.9 35.2L122.6 36.1L122.3 35.7ZM124.9 35.2L125.7 36.0L123.4 36.8L122.6 36.1ZM125.7 36.0L126.8 37.2L124.5 38.0L123.4 36.8ZM126.8 37.2L128.2 38.6L125.9 39.5L124.5 38.0ZM128.2 38.6L129.5 39.8L127.1 40.7L125.9 39.5ZM129.5 39.8L131.0 41.3L128.6 42.3L127.1 40.7ZM131.7 41.1L133.0 42.4L130.9 43.2L129.6 41.9ZM129.6 41.9L130.9 43.2L128.8 44.1L127.5 42.7ZM133.0 42.4L134.4 43.8L132.3 44.6L130.9 43.2ZM130.9 43.2L132.3 44.6L130.1 45.5L128.8 44.1ZM134.4 43.8L135.8 45.2L133.7 46.1L132.3 44.6ZM132.3 44.6L133.7 46.1L131.5 47.0L130.1 45.5ZM135.8 45.2L137.6 46.9L135.4 47.8L133.7 46.1ZM133.7 46.1L135.4 47.8L133.2 48.8L131.5 47.0ZM137.6 46.9L139.1 48.5L136.9 49.4L135.4 47.8ZM135.4 47.8L136.9 49.4L134.7 50.4L133.2 48.8ZM139.1 48.5L140.8 50.1L138.5 51.0L136.9 49.4ZM136.9 49.4L138.5 51.0L136.3 52.0L134.7 50.4ZM140.8 50.1L142.0 51.3L139.7 52.3L138.5 51.0ZM138.5 51.0L139.7 52.3L137.4 53.3L136.3 52.0ZM142.0 51.3L143.2 52.5L140.9 53.5L139.7 52.3ZM139.7 52.3L140.9 53.5L138.6 54.5L137.4 53.3ZM143.2 52.5L144.5 53.7L142.2 54.8L140.9 53.5ZM140.9 53.5L142.2 54.8L139.9 55.9L138.6 54.5ZM144.5 53.7L145.7 54.9L143.4 56.0L142.2 54.8ZM142.2 54.8L143.4 56.0L141.0 57.1L139.9 55.9ZM145.7 54.9L146.9 56.2L144.6 57.3L143.4 56.0ZM143.4 56.0L144.6 57.3L142.2 58.4L141.0 57.1ZM146.9 56.2L148.2 57.4L145.9 58.5L144.6 57.3ZM144.6 57.3L145.9 58.5L143.5 59.7L142.2 58.4ZM146.7 58.1L147.7 59.1L145.6 60.1L144.7 59.1ZM147.7 59.1L148.7 60.1L146.6 61.1L145.6 60.1ZM148.7 60.1L149.9 61.3L147.8 62.4L146.6 61.1ZM149.9 61.3L151.1 62.5L149.0 63.6L147.8 62.4ZM153.2 61.5L154.6 63.1L152.5 64.2L151.1 62.5ZM151.1 62.5L152.5 64.2L150.4 65.3L149.0 63.6ZM156.7 62.1L158.2 63.8L156.1 64.9L154.6 63.1ZM160.2 62.7L161.8 64.4L159.7 65.5L158.2 63.8ZM163.5 63.2L165.3 65.1L163.5 66.3L161.8 64.4ZM167.0 63.9L168.8 65.8L167.1 67.0L165.3 65.1ZM168.8 65.8L170.7 67.8L169.0 69.0L167.1 67.0ZM179.7 67.7L181.6 69.8L179.8 71.8L177.8 69.6ZM172.5 66.5L173.8 68.1L172.1 69.3L170.7 67.8ZM175.5 66.9L176.9 68.5L175.2 69.6L173.8 68.1ZM184.3 70.0L186.0 71.6L184.5 73.1L182.9 71.6ZM186.0 71.6L187.7 73.1L186.2 74.6L184.5 73.1ZM187.7 73.1L189.5 74.8L188.0 76.1L186.2 74.6ZM208.1 70.5L209.9 72.6L208.2 74.4L206.4 72.2ZM205.4 71.0L206.8 72.7L205.0 73.8L203.5 72.1ZM203.5 72.1L205.0 73.8L203.1 74.9L201.7 73.2ZM201.7 73.2L203.1 74.9L201.2 76.0L199.8 74.4ZM199.8 74.4L201.2 76.0L199.3 77.2L197.9 75.6ZM190.2 74.1L191.5 75.4L189.7 77.0L188.3 75.8ZM193.4 73.9L194.7 75.4L192.9 76.8L191.5 75.4ZM196.5 73.9L197.9 75.6L196.1 76.9L194.7 75.4ZM194.7 75.4L196.1 76.9L194.3 78.2L192.9 76.8Z" fill="#20f7ac" stroke="#20f7ac" stroke-width="0.4"/>
<path d="M121.7 35.1L122.3 35.7L119.9 36.5L119.4 35.9ZM119.4 35.9L119.9 36.5L117.6 37.3L117.1 36.8ZM122.3 35.7L122.6 36.1L120.3 36.9L119.9 36.5ZM119.9 36.5L120.3 36.9L117.9 37.7L117.6 37.3ZM122.6 36.1L123.4 36.8L121.0 37.7L120.3 36.9ZM120.3 36.9L121.0 37.7L118.6 38.5L117.9 37.7ZM123.4 36.8L124.5 38.0L122.1 38.9L121.0 37.7ZM121.0 37.7L122.1 38.9L119.7 39.8L118.6 38.5ZM124.5 38.0L125.9 39.5L123.5 40.4L122.1 38.9ZM122.1 38.9L123.5 40.4L121.0 41.3L119.7 39.8ZM125.9 39.5L127.1 40.7L124.6 41.7L123.5 40.4ZM123.5 40.4L124.6 41.7L122.2 42.6L121.0 41.3ZM127.1 40.7L128.6 42.3L126.1 43.2L124.6 41.7ZM124.6 41.7L126.1 43.2L123.6 44.2L122.2 42.6ZM127.5 42.7L128.8 44.1L126.6 44.9L125.4 43.5ZM128.8 44.1L130.1 45.5L128.0 46.4L126.6 44.9ZM130.1 45.5L131.5 47.0L129.3 47.9L128.0 46.4ZM131.5 47.0L133.2 48.8L131.0 49.7L129.3 47.9ZM133.2 48.8L134.7 50.4L132.4 51.3L131.0 49.7ZM134.7 50.4L136.3 52.0L134.0 53.0L132.4 51.3ZM136.3 52.0L137.4 53.3L135.1 54.3L134.0 53.0ZM137.4 53.3L138.6 54.5L136.3 55.6L135.1 54.3ZM138.6 54.5L139.9 55.9L137.5 56.9L136.3 55.6ZM139.9 55.9L141.0 57.1L138.6 58.2L137.5 56.9ZM141.0 57.1L142.2 58.4L139.8 59.5L138.6 58.2ZM142.2 58.4L143.5 59.7L141.0 60.9L139.8 59.5ZM144.7 59.1L145.6 60.1L143.5 61.1L142.6 60.1ZM142.6 60.1L143.5 61.1L141.3 62.2L140.4 61.2ZM145.6 60.1L146.6 61.1L144.5 62.2L143.5 61.1ZM143.5 61.1L144.5 62.2L142.3 63.2L141.3 62.2ZM146.6 61.1L147.8 62.4L145.6 63.4L144.5 62.2ZM144.5 62.2L145.6 63.4L143.4 64.5L142.3 63.2ZM147.8 62.4L149.0 63.6L146.8 64.7L145.6 63.4ZM145.6 63.4L146.8 64.7L144.6 65.8L143.4 64.5ZM149.0 63.6L150.4 65.3L148.2 66.5L146.8 64.7ZM154.6 63.1L156.1 64.9L154.0 66.0L152.5 64.2ZM152.5 64.2L154.0 66.0L151.8 67.1L150.4 65.3ZM158.2 63.8L159.7 65.5L157.6 66.7L156.1 64.9ZM156.1 64.9L157.6 66.7L155.5 67.8L154.0 66.0ZM165.3 65.1L167.1 67.0L165.3 68.3L163.5 66.3ZM161.8 64.4L163.1 65.8L161.0 67.0L159.7 65.5ZM170.7 67.8L172.1 69.3L170.3 70.5L169.0 69.0ZM173.8 68.1L175.2 69.6L173.4 70.8L172.1 69.3ZM176.9 68.5L178.3 70.1L176.6 71.2L175.2 69.6ZM191.5 75.4L192.9 76.8L191.0 78.3L189.7 77.0ZM192.9 76.8L194.3 78.2L192.4 79.6L191.0 78.3ZM197.9 75.6L199.3 77.2L197.5 78.4L196.1 76.9ZM196.1 76.9L197.5 78.4L195.7 79.6L194.3 78.2Z" fill="#20f8b2" stroke="#20f8b2" stroke-width="0.4"/>
<path d="M117.1 36.8L117.6 37.3L115.2 38.2L114.7 37.6ZM117.6 37.3L117.9 37.7L115.5 38.6L115.2 38.2ZM117.9 37.7L118.6 38.5L116.2 39.4L115.5 38.6ZM118.6 38.5L119.7 39.8L117.3 40.7L116.2 39.4ZM119.7 39.8L121.0 41.3L118.5 42.2L117.3 40.7ZM121.0 41.3L122.2 42.6L119.7 43.6L118.5 42.2ZM122.2 42.6L123.6 44.2L121.0 45.2L119.7 43.6ZM125.4 43.5L126.6 44.9L124.5 45.8L123.2 44.3ZM123.2 44.3L124.5 45.8L122.2 46.7L121.0 45.2ZM126.6 44.9L128.0 46.4L125.7 47.3L124.5 45.8ZM124.5 45.8L125.7 47.3L123.5 48.2L122.2 46.7ZM128.0 46.4L129.3 47.9L127.1 48.8L125.7 47.3ZM125.7 47.3L127.1 48.8L124.8 49.7L123.5 48.2ZM129.3 47.9L131.0 49.7L128.7 50.7L127.1 48.8ZM127.1 48.8L128.7 50.7L126.4 51.6L124.8 49.7ZM131.0 49.7L132.4 51.3L130.1 52.3L128.7 50.7ZM128.7 50.7L130.1 52.3L127.8 53.3L126.4 51.6ZM132.4 51.3L134.0 53.0L131.6 54.1L130.1 52.3ZM130.1 52.3L131.6 54.1L129.3 55.1L127.8 53.3ZM134.0 53.0L135.1 54.3L132.8 55.3L131.6 54.1ZM131.6 54.1L132.8 55.3L130.3 56.4L129.3 55.1ZM135.1 54.3L136.3 55.6L133.9 56.7L132.8 55.3ZM132.8 55.3L133.9 56.7L131.5 57.8L130.3 56.4ZM136.3 55.6L137.5 56.9L135.1 58.0L133.9 56.7ZM133.9 56.7L135.1 58.0L132.6 59.2L131.5 57.8ZM137.5 56.9L138.6 58.2L136.2 59.3L135.1 58.0ZM135.1 58.0L136.2 59.3L133.7 60.5L132.6 59.2ZM138.6 58.2L139.8 59.5L137.4 60.7L136.2 59.3ZM136.2 59.3L137.4 60.7L134.9 61.9L133.7 60.5ZM139.8 59.5L141.0 60.9L138.6 62.0L137.4 60.7ZM137.4 60.7L138.6 62.0L136.0 63.3L134.9 61.9ZM140.4 61.2L141.3 62.2L139.2 63.3L138.2 62.2ZM138.2 62.2L139.2 63.3L136.9 64.3L136.0 63.3ZM141.3 62.2L142.3 63.2L140.1 64.3L139.2 63.3ZM139.2 63.3L140.1 64.3L137.8 65.4L136.9 64.3ZM142.3 63.2L143.4 64.5L141.2 65.6L140.1 64.3ZM140.1 64.3L141.2 65.6L138.9 66.7L137.8 65.4ZM143.4 64.5L144.6 65.8L142.3 66.9L141.2 65.6ZM141.2 65.6L142.3 66.9L140.1 68.1L138.9 66.7ZM146.8 64.7L148.2 66.5L145.9 67.6L144.6 65.8ZM144.6 65.8L145.9 67.6L143.7 68.8L142.3 66.9ZM150.4 65.3L151.8 67.1L149.6 68.3L148.2 66.5ZM148.2 66.5L149.6 68.3L147.3 69.5L145.9 67.6ZM154.0 66.0L155.5 67.8L153.3 69.0L151.8 67.1ZM167.1 67.0L169.0 69.0L167.2 70.3L165.3 68.3ZM159.7 65.5L161.0 67.0L158.9 68.3L157.6 66.7ZM157.6 66.7L158.9 68.3L156.7 69.5L155.5 67.8ZM163.1 65.8L164.4 67.3L162.3 68.6L161.0 67.0ZM164.4 67.3L165.8 68.8L163.7 70.2L162.3 68.6ZM169.0 69.0L170.3 70.5L168.5 71.7L167.2 70.3ZM172.1 69.3L173.4 70.8L171.6 72.0L170.3 70.5ZM175.2 69.6L176.6 71.2L174.8 72.4L173.4 70.8ZM178.3 70.1L179.8 71.8L178.0 72.9L176.6 71.2ZM181.3 70.2L182.9 71.6L181.4 73.2L179.8 71.8ZM182.9 71.6L184.5 73.1L183.0 74.6L181.4 73.2ZM184.5 73.1L186.2 74.6L184.7 76.0L183.0 74.6ZM186.2 74.6L188.0 76.1L186.4 77.5L184.7 76.0ZM206.8 72.7L208.2 74.4L206.4 75.5L205.0 73.8ZM205.0 73.8L206.4 75.5L204.6 76.6L203.1 74.9ZM203.1 74.9L204.6 76.6L202.7 77.7L201.2 76.0ZM201.2 76.0L202.7 77.7L200.8 78.9L199.3 77.2ZM188.3 75.8L189.7 77.0L187.8 78.6L186.4 77.5ZM189.7 77.0L191.0 78.3L189.1 79.8L187.8 78.6ZM191.0 78.3L192.4 79.6L190.5 80.9L189.1 79.8ZM194.3 78.2L195.7 79.6L193.8 80.9L192.4 79.6ZM192.4 79.6L193.8 80.9L191.8 82.1L190.5 80.9ZM199.3 77.2L200.8 78.9L198.9 80.0L197.5 78.4ZM197.5 78.4L198.9 80.0L197.1 81.1L195.7 79.6ZM195.7 79.6L197.1 81.1L195.2 82.2L193.8 80.9Z" fill="#20f8b8" stroke="#20f8b8" stroke-width="0.4"/>
<path d="M114.7 37.6L115.2 38.2L113.2 39.3L112.7 38.7ZM115.2 38.2L115.5 38.6L113.5 39.8L113.2 39.3ZM115.5 38.6L116.2 39.4L114.2 40.6L113.5 39.8ZM116.2 39.4L117.3 40.7L115.2 41.9L114.2 40.6ZM117.3 40.7L118.5 42.2L116.4 43.4L115.2 41.9ZM118.5 42.2L119.7 43.6L117.5 44.8L116.4 43.4ZM119.7 43.6L121.0 45.2L118.9 46.5L117.5 44.8ZM121.0 45.2L122.2 46.7L120.3 47.8L119.1 46.3ZM122.2 46.7L123.5 48.2L121.6 49.4L120.3 47.8ZM123.5 48.2L124.8 49.7L122.8 51.0L121.6 49.4ZM124.8 49.7L126.4 51.6L124.4 52.9L122.8 51.0ZM126.4 51.6L127.8 53.3L125.8 54.7L124.4 52.9ZM127.8 53.3L129.3 55.1L127.2 56.5L125.8 54.7ZM129.3 55.1L130.3 56.4L128.3 57.9L127.2 56.5ZM130.3 56.4L131.5 57.8L129.4 59.4L128.3 57.9ZM131.5 57.8L132.6 59.2L130.5 60.9L129.4 59.4ZM132.6 59.2L133.7 60.5L131.8 62.2L130.8 60.7ZM133.7 60.5L134.9 61.9L133.0 63.7L131.8 62.2ZM134.9 61.9L136.0 63.3L134.1 65.2L133.0 63.7ZM136.0 63.3L136.9 64.3L135.3 65.9L134.5 64.8ZM136.9 64.3L137.8 65.4L136.2 67.1L135.3 65.9ZM137.8 65.4L138.9 66.7L137.3 68.4L136.2 67.1ZM138.9 66.7L140.1 68.1L138.4 69.8L137.3 68.4ZM147.3 69.5L148.8 71.4L146.5 72.6L145.1 70.7ZM145.1 70.7L146.5 72.6L144.1 73.9L142.7 71.9ZM140.1 68.1L141.4 70.0L139.7 71.7L138.4 69.8ZM153.3 69.0L154.5 70.8L152.3 72.1L151.1 70.2ZM151.1 70.2L152.3 72.1L150.0 73.5L148.8 71.4ZM156.7 69.5L158.0 71.3L155.8 72.7L154.5 70.8ZM163.7 70.2L165.0 71.8L162.9 73.4L161.5 71.7ZM171.6 72.0L173.0 73.6L171.2 74.7L169.8 73.2ZM174.8 72.4L176.2 74.0L174.4 75.1L173.0 73.6ZM173.0 73.6L174.4 75.1L172.6 76.3L171.2 74.7ZM167.2 70.3L168.5 71.7L166.6 73.2L165.3 71.7ZM168.5 71.7L169.8 73.2L167.9 74.8L166.6 73.2ZM176.2 74.0L177.8 75.4L176.0 76.6L174.4 75.1ZM177.8 75.4L179.5 76.9L177.6 78.1L176.0 76.6ZM179.5 76.9L181.1 78.4L179.3 79.6L177.6 78.1ZM181.1 78.4L182.9 79.9L181.0 81.2L179.3 79.6ZM184.7 78.7L186.3 80.5L184.5 82.1L182.9 79.9ZM188.1 78.9L189.8 80.4L188.0 82.3L186.3 80.5ZM189.8 80.4L191.5 81.8L189.7 84.2L188.0 82.3ZM191.5 81.8L193.3 83.4L191.5 86.2L189.7 84.2Z" fill="#20f8cc" stroke="#20f8cc" stroke-width="0.4"/>
<path d="M112.7 38.7L113.2 39.3L111.2 40.5L110.7 39.9ZM113.2 39.3L113.5 39.8L111.5 40.9L111.2 40.5ZM113.5 39.8L114.2 40.6L112.1 41.8L111.5 40.9ZM114.2 40.6L115.2 41.9L113.1 43.1L112.1 41.8ZM115.2 41.9L116.4 43.4L114.3 44.7L113.1 43.1ZM116.4 43.4L117.5 44.8L115.4 46.1L114.3 44.7ZM117.5 44.8L118.9 46.5L116.7 47.9L115.4 46.1ZM119.1 46.3L120.3 47.8L118.4 49.0L117.2 47.5ZM120.3 47.8L121.6 49.4L119.6 50.6L118.4 49.0ZM121.6 49.4L122.8 51.0L120.8 52.2L119.6 50.6ZM122.8 51.0L124.4 52.9L122.4 54.2L120.8 52.2ZM124.4 52.9L125.8 54.7L123.7 56.0L122.4 54.2ZM125.8 54.7L127.2 56.5L125.1 57.9L123.7 56.0ZM127.2 56.5L128.3 57.9L126.2 59.4L125.1 57.9ZM128.3 57.9L129.4 59.4L127.3 61.0L126.2 59.4ZM142.7 71.9L144.1 73.9L142.5 75.6L141.1 73.6ZM146.5 72.6L147.7 74.8L145.3 76.2L144.1 73.9ZM152.3 72.1L153.5 74.1L151.2 75.6L150.0 73.5ZM158.0 71.3L159.3 73.1L157.1 74.7L155.8 72.7ZM161.5 71.7L162.9 73.4L160.7 75.0L159.3 73.1ZM163.4 73.1L164.7 74.7L162.7 76.2L161.4 74.5ZM166.6 73.2L167.9 74.8L166.0 76.4L164.7 74.7ZM171.2 74.7L172.6 76.3L170.7 78.1L169.3 76.4ZM172.6 76.3L174.2 77.8L172.4 79.5L170.9 77.9ZM174.2 77.8L175.8 79.3L174.0 81.1L172.4 79.5ZM175.8 79.3L177.4 80.9L175.7 82.7L174.0 81.1ZM177.4 80.9L179.1 82.5L177.4 84.4L175.7 82.7ZM181.0 81.2L182.6 83.8L180.7 85.5L179.1 82.5Z" fill="#20f8e0" stroke="#20f8e0" stroke-width="0.4"/>
<path d="M110.7 39.9L111.2 40.5L109.1 41.7L108.6 41.1ZM111.2 40.5L111.5 40.9L109.4 42.1L109.1 41.7ZM111.5 40.9L112.1 41.8L110.0 43.0L109.4 42.1ZM112.1 41.8L113.1 43.1L111.0 44.4L110.0 43.0ZM113.1 43.1L114.3 44.7L112.2 46.0L111.0 44.4ZM114.3 44.7L115.4 46.1L113.2 47.5L112.2 46.0ZM115.4 46.1L116.7 47.9L114.5 49.2L113.2 47.5ZM117.2 47.5L118.4 49.0L116.4 50.3L115.3 48.7ZM118.4 49.0L119.6 50.6L117.6 51.9L116.4 50.3ZM119.6 50.6L120.8 52.2L118.8 53.5L117.6 51.9ZM120.8 52.2L122.4 54.2L120.3 55.6L118.8 53.5ZM122.4 54.2L123.7 56.0L121.6 57.4L120.3 55.6ZM123.7 56.0L125.1 57.9L123.0 59.3L121.6 57.4ZM125.1 57.9L126.2 59.4L124.1 61.0L123.0 59.3ZM139.7 71.7L141.1 73.6L139.4 75.3L138.1 73.4ZM141.1 73.6L142.5 75.6L140.8 77.3L139.4 75.3ZM147.7 74.8L148.9 77.1L146.5 78.6L145.3 76.2ZM153.5 74.1L154.8 76.2L152.5 77.8L151.2 75.6ZM157.1 74.7L158.4 76.7L156.1 78.3L154.8 76.2ZM161.4 74.5L162.7 76.2L160.7 77.8L159.4 75.9ZM166.0 76.4L167.3 78.2L165.3 79.9L164.0 78.1ZM169.3 76.4L170.7 78.1L168.7 79.9L167.3 78.2ZM170.9 77.9L172.4 79.5L170.7 81.2L169.1 79.6ZM172.4 79.5L174.0 81.1L172.2 82.9L170.7 81.2ZM174.0 81.1L175.7 82.7L173.9 84.6L172.2 82.9ZM175.7 82.7L177.4 84.4L175.6 86.4L173.9 84.6ZM189.7 84.2L191.5 86.2L189.6 89.0L187.9 86.7Z" fill="#20f1e9" stroke="#20f1e9" stroke-width="0.4"/>
<path d="M108.6 41.1L109.1 41.7L107.0 42.9L106.5 42.3ZM109.1 41.7L109.4 42.1L107.3 43.4L107.0 42.9ZM109.4 42.1L110.0 43.0L107.9 44.3L107.3 43.4ZM110.0 43.0L111.0 44.4L108.8 45.6L107.9 44.3ZM111.0 44.4L112.2 46.0L110.0 47.3L108.8 45.6ZM112.2 46.0L113.2 47.5L111.0 48.8L110.0 47.3ZM113.2 47.5L114.5 49.2L112.2 50.6L111.0 48.8ZM124.1 61.0L125.1 62.7L122.9 64.4L121.9 62.5ZM131.0 65.5L132.2 67.1L130.2 69.1L129.1 67.3ZM139.4 75.3L140.8 77.3L139.0 79.1L137.7 77.1ZM152.5 77.8L153.8 80.0L151.4 81.8L150.1 79.4ZM143.4 77.5L144.3 79.4L142.6 81.1L141.7 79.2ZM146.0 77.6L147.0 79.6L145.3 81.3L144.3 79.4ZM160.7 77.8L162.0 79.7L159.9 81.4L158.7 79.4ZM165.3 79.9L166.7 81.8L164.7 83.7L163.3 81.7ZM173.9 84.6L175.6 86.4L173.7 88.4L172.1 86.5ZM175.9 86.0L176.9 88.0L175.3 89.9L174.2 87.9ZM178.6 86.2L179.7 88.3L178.0 90.1L176.9 88.0Z" fill="#20e7f6" stroke="#20e7f6" stroke-width="0.4"/>
<path d="M106.5 42.3L107.0 42.9L104.9 44.1L104.4 43.5ZM107.0 42.9L107.3 43.4L105.2 44.6L104.9 44.1ZM107.3 43.4L107.9 44.3L105.7 45.5L105.2 44.6ZM107.9 44.3L108.8 45.6L106.7 46.9L105.7 45.5ZM108.8 45.6L110.0 47.3L107.8 48.6L106.7 46.9ZM110.0 47.3L111.0 48.8L108.7 50.2L107.8 48.6ZM111.0 48.8L112.2 50.6L109.9 52.0L108.7 50.2ZM128.0 65.6L129.1 67.3L127.1 69.2L126.0 67.4ZM136.4 75.1L137.7 77.1L136.0 78.9L134.7 76.9ZM137.7 77.1L139.0 79.1L137.3 80.9L136.0 78.9ZM144.3 79.4L145.3 81.3L143.5 83.1L142.6 81.1ZM147.0 79.6L148.0 81.5L146.3 83.3L145.3 81.3ZM153.3 80.4L154.5 82.6L152.4 84.3L151.1 82.0ZM163.3 81.7L164.7 83.7L162.6 85.6L161.3 83.5ZM165.5 82.9L167.0 84.7L165.2 86.5L163.7 84.7ZM172.1 86.5L173.7 88.4L171.8 90.5L170.2 88.5ZM174.2 87.9L175.3 89.9L173.6 91.8L172.5 89.7ZM176.9 88.0L178.0 90.1L176.3 91.9L175.3 89.9Z" fill="#20e0ff" stroke="#20e0ff" stroke-width="0.4"/>
<path d="M104.4 43.5L104.9 44.1L102.7 45.4L102.3 44.7ZM104.9 44.1L105.2 44.6L103.0 45.9L102.7 45.4ZM105.2 44.6L105.7 45.5L103.6 46.8L103.0 45.9ZM105.7 45.5L106.7 46.9L104.4 48.2L103.6 46.8ZM106.7 46.9L107.8 48.6L105.5 50.0L104.4 48.2ZM107.8 48.6L108.7 50.2L106.4 51.5L105.5 50.0ZM108.7 50.2L109.9 52.0L107.6 53.4L106.4 51.5ZM122.9 64.4L124.0 66.4L121.7 68.2L120.7 66.1ZM125.0 65.5L126.0 67.4L124.0 69.1L123.0 67.2ZM129.6 69.7L130.5 70.8L128.8 72.5L128.0 71.3ZM130.5 70.8L131.3 72.0L129.7 73.8L128.8 72.5ZM131.3 72.0L132.4 73.5L130.7 75.2L129.7 73.8ZM132.4 73.5L133.4 75.0L131.7 76.7L130.7 75.2ZM133.4 75.0L134.7 76.9L132.9 78.7L131.7 76.7ZM139.0 79.1L139.9 81.0L138.2 82.8L137.3 80.9ZM145.3 81.3L146.3 83.3L144.5 85.1L143.5 83.1ZM151.1 82.0L152.4 84.3L150.2 86.0L149.0 83.5ZM154.5 82.6L155.8 84.9L153.6 86.7L152.4 84.3ZM157.9 83.1L159.2 85.3L157.0 87.2L155.8 84.9ZM161.3 83.5L162.6 85.6L160.5 87.6L159.2 85.3ZM163.7 84.7L165.2 86.5L163.3 88.4L161.8 86.4ZM170.2 88.5L171.8 90.5L169.9 92.6L168.3 90.5ZM186.0 89.1L187.7 91.9L185.8 94.9L184.1 91.6ZM172.5 89.7L173.6 91.8L171.8 93.7L170.8 91.6ZM175.3 89.9L176.3 91.9L174.6 93.8L173.6 91.8Z" fill="#23d0ff" stroke="#23d0ff" stroke-width="0.4"/>
<path d="M102.3 44.7L102.7 45.4L100.5 46.7L100.1 46.0ZM102.7 45.4L103.0 45.9L100.8 47.1L100.5 46.7ZM103.0 45.9L103.6 46.8L101.3 48.1L100.8 47.1ZM103.6 46.8L104.4 48.2L102.2 49.6L101.3 48.1ZM104.4 48.2L105.5 50.0L103.2 51.4L102.2 49.6ZM105.5 50.0L106.4 51.5L104.1 52.9L103.2 51.4ZM106.4 51.5L107.6 53.4L105.2 54.9L104.1 52.9ZM107.3 53.6L108.3 55.3L106.2 56.6L105.2 54.9ZM108.3 55.3L109.4 57.1L107.2 58.4L106.2 56.6ZM109.4 57.1L110.5 58.9L108.3 60.3L107.2 58.4ZM110.5 58.9L111.8 61.1L109.6 62.5L108.3 60.3ZM111.8 61.1L113.0 63.1L110.8 64.6L109.6 62.5ZM113.0 63.1L114.3 65.1L112.0 66.7L110.8 64.6ZM117.5 65.7L118.4 67.9L116.1 69.7L115.2 67.4ZM120.7 66.1L121.7 68.2L119.5 70.1L118.4 67.9ZM128.0 71.3L128.8 72.5L127.1 74.2L126.3 73.0ZM128.8 72.5L129.7 73.8L128.0 75.5L127.1 74.2ZM129.7 73.8L130.7 75.2L129.0 77.0L128.0 75.5ZM130.7 75.2L131.7 76.7L130.0 78.5L129.0 77.0ZM131.7 76.7L132.9 78.7L131.2 80.5L130.0 78.5ZM132.9 78.7L134.2 80.7L132.4 82.5L131.2 80.5ZM140.9 82.9L141.8 84.9L140.0 86.7L139.1 84.8ZM147.4 85.2L148.3 87.1L146.7 88.7L145.8 86.8ZM149.9 85.5L150.9 87.5L149.3 89.1L148.3 87.1ZM163.3 88.4L164.8 90.4L162.9 92.4L161.4 90.3ZM173.6 91.8L174.6 93.8L172.9 95.7L171.8 93.7ZM176.3 91.9L177.4 94.0L175.7 95.9L174.6 93.8ZM179.1 92.2L180.2 94.3L178.5 96.2L177.4 94.0ZM181.9 92.4L183.0 94.6L181.3 96.4L180.2 94.3ZM184.7 92.7L185.8 94.9L184.2 96.7L183.0 94.6Z" fill="#27b8ff" stroke="#27b8ff" stroke-width="0.4"/>
<path d="M145.3 21.5L146.2 22.1L145.1 23.8L144.2 23.2ZM146.2 22.1L147.6 22.9L146.4 24.7L145.1 23.8ZM147.6 22.9L149.3 24.0L148.1 25.8L146.4 24.7ZM149.3 24.0L150.7 24.9L149.5 26.7L148.1 25.8ZM150.7 24.9L152.5 26.0L151.3 27.9L149.5 26.7ZM152.5 26.0L154.1 27.0L152.8 28.9L151.3 27.9ZM154.1 27.0L155.7 28.0L154.4 30.0L152.8 28.9ZM155.7 28.0L157.3 29.1L156.1 31.1L154.4 30.0ZM157.3 29.1L159.4 30.4L158.1 32.4L156.1 31.1ZM159.4 30.4L161.2 31.5L159.9 33.6L158.1 32.4ZM161.2 31.5L163.0 32.7L161.7 34.8L159.9 33.6ZM163.0 32.7L165.1 34.0L163.8 36.1L161.7 34.8ZM165.1 34.0L167.2 35.4L165.9 37.6L163.8 36.1ZM167.2 35.4L169.3 36.7L168.0 38.9L165.9 37.6ZM169.3 36.7L171.4 38.0L170.1 40.3L168.0 38.9ZM213.9 34.4L216.0 35.9L214.7 35.8L212.6 33.5ZM213.7 34.6L215.2 36.3L212.9 37.3L211.4 35.5ZM211.4 35.5L212.9 37.3L211.6 37.8L210.1 36.1ZM210.1 36.1L211.6 37.8L210.2 38.4L208.7 36.6ZM208.7 36.6L210.2 38.4L208.9 38.9L207.3 37.1ZM207.3 37.1L208.9 38.9L207.5 39.5L205.9 37.7ZM205.9 37.7L207.5 39.5L205.0 40.5L203.5 38.7ZM203.5 38.7L205.0 40.5L203.6 41.1L202.0 39.2ZM202.0 39.2L203.6 41.1L202.1 41.7L200.6 39.8ZM200.6 39.8L202.1 41.7L200.6 42.3L199.1 40.4ZM199.1 40.4L200.6 42.3L199.1 42.9L197.6 41.0ZM197.6 41.0L199.1 42.9L197.7 43.5L196.2 41.6ZM196.2 41.6L197.7 43.5L196.4 44.0L194.9 42.1ZM194.9 42.1L196.4 44.0L194.8 44.7L193.3 42.7ZM193.3 42.7L194.8 44.7L193.2 45.3L191.7 43.3ZM191.7 43.3L193.2 45.3L191.2 46.4L189.7 44.3ZM189.7 44.3L191.2 46.4L189.1 47.4L187.6 45.2ZM181.5 43.8L182.6 45.4L181.5 47.4L180.4 45.9Z" fill="#adf12e" stroke="#adf12e" stroke-width="0.4"/>
<path d="M144.2 23.2L145.1 23.8L143.9 25.5L143.0 24.9ZM145.1 23.8L146.4 24.7L145.2 26.5L143.9 25.5ZM146.4 24.7L148.1 25.8L146.9 27.6L145.2 26.5ZM148.1 25.8L149.5 26.7L148.3 28.6L146.9 27.6ZM149.5 26.7L151.3 27.9L150.0 29.8L148.3 28.6ZM151.3 27.9L152.8 28.9L151.6 30.8L150.0 29.8ZM152.8 28.9L154.4 30.0L153.2 31.9L151.6 30.8ZM154.4 30.0L156.1 31.1L154.8 33.1L153.2 31.9ZM156.1 31.1L158.1 32.4L156.8 34.4L154.8 33.1ZM158.1 32.4L159.9 33.6L158.6 35.6L156.8 34.4ZM159.9 33.6L161.7 34.8L160.4 36.9L158.6 35.6ZM161.7 34.8L163.8 36.1L162.4 38.3L160.4 36.9ZM163.8 36.1L165.9 37.6L164.6 39.8L162.4 38.3ZM165.9 37.6L168.0 38.9L166.6 41.2L164.6 39.8ZM168.0 38.9L170.1 40.3L168.7 42.6L166.6 41.2ZM181.5 47.4L182.6 48.8L181.4 50.6L180.3 49.3Z" fill="#89f02a" stroke="#89f02a" stroke-width="0.4"/>
<path d="M143.0 24.9L143.9 25.5L142.7 27.3L141.8 26.7ZM143.9 25.5L145.2 26.5L144.0 28.3L142.7 27.3ZM145.2 26.5L146.9 27.6L145.6 29.4L144.0 28.3ZM146.9 27.6L148.3 28.6L147.1 30.4L145.6 29.4ZM148.3 28.6L150.0 29.8L148.8 31.7L147.1 30.4ZM150.0 29.8L151.6 30.8L150.3 32.8L148.8 31.7ZM151.6 30.8L153.2 31.9L151.9 33.9L150.3 32.8ZM153.2 31.9L154.8 33.1L153.5 35.1L151.9 33.9ZM154.8 33.1L156.8 34.4L155.5 36.5L153.5 35.1ZM156.8 34.4L158.6 35.6L157.3 37.7L155.5 36.5ZM158.6 35.6L160.4 36.9L159.1 39.0L157.3 37.7ZM160.4 36.9L162.4 38.3L161.1 40.5L159.1 39.0ZM162.4 38.3L164.6 39.8L163.2 42.0L161.1 40.5ZM164.6 39.8L166.6 41.2L165.3 43.5L163.2 42.0ZM166.6 41.2L168.7 42.6L167.4 45.0L165.3 43.5ZM181.4 50.6L182.6 52.0L181.4 53.6L180.2 52.5ZM184.9 51.9L186.1 53.4L184.9 54.7L183.7 53.3ZM187.1 52.4L188.5 54.1L187.1 55.6L185.6 53.9ZM189.9 52.7L191.3 54.7L189.9 56.0L188.5 54.1Z" fill="#61f035" stroke="#61f035" stroke-width="0.4"/>
<path d="M141.8 26.7L142.7 27.3L141.5 29.1L140.6 28.4ZM142.7 27.3L144.0 28.3L142.8 30.1L141.5 29.1ZM144.0 28.3L145.6 29.4L144.4 31.3L142.8 30.1ZM145.6 29.4L147.1 30.4L145.8 32.3L144.4 31.3ZM147.1 30.4L148.8 31.7L147.5 33.6L145.8 32.3ZM148.8 31.7L150.3 32.8L149.0 34.7L147.5 33.6ZM150.3 32.8L151.9 33.9L150.6 35.9L149.0 34.7ZM151.9 33.9L153.5 35.1L152.2 37.1L150.6 35.9ZM153.5 35.1L155.5 36.5L154.2 38.6L152.2 37.1ZM155.5 36.5L157.3 37.7L155.9 39.9L154.2 38.6ZM157.3 37.7L159.1 39.0L157.7 41.2L155.9 39.9ZM159.1 39.0L161.1 40.5L159.8 42.7L157.7 41.2ZM161.1 40.5L163.2 42.0L161.9 44.3L159.8 42.7ZM163.2 42.0L165.3 43.5L163.9 45.8L161.9 44.3ZM165.3 43.5L167.4 45.0L166.0 47.4L163.9 45.8ZM167.1 45.4L168.2 46.2L167.0 48.2L166.0 47.4ZM168.2 46.2L169.3 46.9L168.1 49.0L167.0 48.2ZM169.3 46.9L170.6 47.9L169.4 49.9L168.1 49.0ZM170.6 47.9L172.0 48.9L170.8 50.9L169.4 49.9ZM172.0 48.9L173.5 50.0L172.3 52.1L170.8 50.9ZM173.5 50.0L175.2 51.2L174.0 53.3L172.3 52.1ZM175.2 51.2L176.8 52.3L175.6 54.5L174.0 53.3ZM188.5 57.3L190.0 59.0L188.5 60.2L187.0 58.6ZM192.8 56.7L194.3 58.7L192.9 59.7L191.4 57.8Z" fill="#38f040" stroke="#38f040" stroke-width="0.4"/>
<path d="M115.3 48.7L116.4 50.3L114.5 51.5L113.3 49.9ZM116.4 50.3L117.6 51.9L115.6 53.1L114.5 51.5ZM117.6 51.9L118.8 53.5L116.8 54.8L115.6 53.1ZM118.8 53.5L120.3 55.6L118.2 56.9L116.8 54.8ZM120.3 55.6L121.6 57.4L119.5 58.8L118.2 56.9ZM121.6 57.4L123.0 59.3L120.9 60.7L119.5 58.8ZM123.0 59.3L124.1 61.0L121.9 62.5L120.9 60.7ZM129.9 63.9L131.0 65.5L129.1 67.3L128.0 65.6ZM136.8 71.5L138.1 73.4L136.4 75.1L135.1 73.2ZM138.1 73.4L139.4 75.3L137.7 77.1L136.4 75.1ZM148.9 77.1L150.1 79.4L147.7 81.0L146.5 78.6ZM154.8 76.2L156.1 78.3L153.8 80.0L152.5 77.8ZM142.5 75.6L143.4 77.5L141.7 79.2L140.8 77.3ZM157.4 77.4L158.7 79.4L156.6 81.0L155.4 78.9ZM164.0 78.1L165.3 79.9L163.3 81.7L162.0 79.7ZM169.1 79.6L170.7 81.2L168.9 83.0L167.3 81.2ZM170.7 81.2L172.2 82.9L170.4 84.7L168.9 83.0ZM172.2 82.9L173.9 84.6L172.1 86.5L170.4 84.7Z" fill="#20eaf2" stroke="#20eaf2" stroke-width="0.4"/>
<path d="M113.3 49.9L114.5 51.5L112.4 52.7L111.4 51.1ZM114.5 51.5L115.6 53.1L113.6 54.4L112.4 52.7ZM115.6 53.1L116.8 54.8L114.7 56.2L113.6 54.4ZM116.8 54.8L118.2 56.9L116.1 58.3L114.7 56.2ZM118.2 56.9L119.5 58.8L117.4 60.2L116.1 58.3ZM119.5 58.8L120.9 60.7L118.7 62.2L117.4 60.2ZM120.9 60.7L121.9 62.5L119.7 64.1L118.7 62.2ZM125.1 62.7L126.2 64.5L124.0 66.4L122.9 64.4ZM126.9 63.9L128.0 65.6L126.0 67.4L125.0 65.5ZM131.3 68.0L132.1 69.2L130.5 70.8L129.6 69.7ZM132.1 69.2L133.0 70.4L131.3 72.0L130.5 70.8ZM133.0 70.4L134.0 71.8L132.4 73.5L131.3 72.0ZM134.0 71.8L135.1 73.2L133.4 75.0L132.4 73.5ZM135.1 73.2L136.4 75.1L134.7 76.9L133.4 75.0ZM150.1 79.4L151.4 81.8L149.0 83.5L147.7 81.0ZM140.8 77.3L141.7 79.2L139.9 81.0L139.0 79.1ZM155.4 78.9L156.6 81.0L154.5 82.6L153.3 80.4ZM158.7 79.4L159.9 81.4L157.9 83.1L156.6 81.0ZM162.0 79.7L163.3 81.7L161.3 83.5L159.9 81.4ZM167.3 81.2L168.9 83.0L167.0 84.7L165.5 82.9ZM168.9 83.0L170.4 84.7L168.6 86.6L167.0 84.7ZM170.4 84.7L172.1 86.5L170.2 88.5L168.6 86.6ZM184.3 86.4L186.0 89.1L184.1 91.6L182.4 88.5ZM187.9 86.7L189.6 89.0L187.7 91.9L186.0 89.1ZM181.3 86.5L182.4 88.5L180.8 90.3L179.7 88.3Z" fill="#20e3fb" stroke="#20e3fb" stroke-width="0.4"/>
<path d="M111.4 51.1L112.4 52.7L110.4 54.0L109.3 52.4ZM112.4 52.7L113.6 54.4L111.5 55.7L110.4 54.0ZM113.6 54.4L114.7 56.2L112.6 57.5L111.5 55.7ZM114.7 56.2L116.1 58.3L114.0 59.7L112.6 57.5ZM116.1 58.3L117.4 60.2L115.2 61.6L114.0 59.7ZM117.4 60.2L118.7 62.2L116.5 63.6L115.2 61.6ZM118.7 62.2L119.7 64.1L117.5 65.7L116.5 63.6ZM121.9 62.5L122.9 64.4L120.7 66.1L119.7 64.1ZM129.1 67.3L130.2 69.1L128.2 71.1L127.1 69.2ZM141.7 79.2L142.6 81.1L140.9 82.9L139.9 81.0ZM148.0 81.5L149.0 83.5L147.3 85.3L146.3 83.3ZM156.6 81.0L157.9 83.1L155.8 84.9L154.5 82.6ZM159.9 81.4L161.3 83.5L159.2 85.3L157.9 83.1ZM167.0 84.7L168.6 86.6L166.7 88.5L165.2 86.5ZM168.6 86.6L170.2 88.5L168.3 90.5L166.7 88.5ZM179.7 88.3L180.8 90.3L179.1 92.2L178.0 90.1ZM182.4 88.5L183.5 90.6L181.9 92.4L180.8 90.3Z" fill="#21d8ff" stroke="#21d8ff" stroke-width="0.4"/>
<path d="M109.3 52.4L110.4 54.0L108.3 55.3L107.3 53.6ZM110.4 54.0L111.5 55.7L109.4 57.1L108.3 55.3ZM111.5 55.7L112.6 57.5L110.5 58.9L109.4 57.1ZM112.6 57.5L114.0 59.7L111.8 61.1L110.5 58.9ZM114.0 59.7L115.2 61.6L113.0 63.1L111.8 61.1ZM115.2 61.6L116.5 63.6L114.3 65.1L113.0 63.1ZM119.7 64.1L120.7 66.1L118.4 67.9L117.5 65.7ZM126.0 67.4L127.1 69.2L125.0 71.1L124.0 69.1ZM134.7 76.9L136.0 78.9L134.2 80.7L132.9 78.7ZM136.0 78.9L137.3 80.9L135.5 82.7L134.2 80.7ZM139.9 81.0L140.9 82.9L139.1 84.8L138.2 82.8ZM142.6 81.1L143.5 83.1L141.8 84.9L140.9 82.9ZM149.0 83.5L149.9 85.5L148.3 87.1L147.4 85.2ZM165.2 86.5L166.7 88.5L164.8 90.4L163.3 88.4ZM178.0 90.1L179.1 92.2L177.4 94.0L176.3 91.9ZM180.8 90.3L181.9 92.4L180.2 94.3L179.1 92.2ZM183.5 90.6L184.7 92.7L183.0 94.6L181.9 92.4Z" fill="#24c8ff" stroke="#24c8ff" stroke-width="0.4"/>
<path d="M116.5 63.6L117.5 65.7L115.2 67.4L114.3 65.1ZM123.0 67.2L124.0 69.1L122.0 70.9L121.0 68.9ZM127.1 69.2L128.2 71.1L126.1 73.2L125.0 71.1ZM137.3 80.9L138.2 82.8L136.4 84.6L135.5 82.7ZM143.5 83.1L144.5 85.1L142.7 86.9L141.8 84.9ZM146.3 83.3L147.3 85.3L145.5 87.1L144.5 85.1ZM152.4 84.3L153.6 86.7L151.4 88.5L150.2 86.0ZM155.8 84.9L157.0 87.2L154.9 89.1L153.6 86.7ZM159.2 85.3L160.5 87.6L158.4 89.6L157.0 87.2ZM161.8 86.4L163.3 88.4L161.4 90.3L159.9 88.2ZM166.7 88.5L168.3 90.5L166.4 92.5L164.8 90.4ZM168.3 90.5L169.9 92.6L168.0 94.7L166.4 92.5ZM170.8 91.6L171.8 93.7L170.1 95.6L169.1 93.5Z" fill="#25c0ff" stroke="#25c0ff" stroke-width="0.4"/>
<path d="M114.3 65.1L115.2 67.4L112.9 69.1L112.0 66.7ZM124.0 69.1L125.0 71.1L123.0 73.1L122.0 70.9ZM134.2 80.7L135.5 82.7L133.7 84.5L132.4 82.5ZM138.2 82.8L139.1 84.8L137.3 86.6L136.4 84.6ZM144.5 85.1L145.5 87.1L143.7 89.0L142.7 86.9ZM153.6 86.7L154.9 89.1L152.7 91.1L151.4 88.5ZM157.0 87.2L158.4 89.6L156.2 91.6L154.9 89.1ZM159.9 88.2L161.4 90.3L159.4 92.1L157.9 90.0ZM164.8 90.4L166.4 92.5L164.4 94.6L162.9 92.4ZM166.4 92.5L168.0 94.7L166.1 96.8L164.4 94.6Z" fill="#28b0ff" stroke="#28b0ff" stroke-width="0.4"/>
<path d="M126.2 59.4L127.3 61.0L125.1 62.7L124.1 61.0ZM127.3 61.0L128.4 62.7L126.2 64.5L125.1 62.7ZM128.9 62.3L129.9 63.9L128.0 65.6L126.9 63.9ZM132.9 66.4L133.7 67.6L132.1 69.2L131.3 68.0ZM133.7 67.6L134.6 68.7L133.0 70.4L132.1 69.2ZM134.6 68.7L135.7 70.1L134.0 71.8L133.0 70.4ZM135.7 70.1L136.8 71.5L135.1 73.2L134.0 71.8ZM151.2 75.6L152.5 77.8L150.1 79.4L148.9 77.1ZM145.1 75.7L146.0 77.6L144.3 79.4L143.4 77.5ZM159.4 75.9L160.7 77.8L158.7 79.4L157.4 77.4ZM162.7 76.2L164.0 78.1L162.0 79.7L160.7 77.8ZM167.3 78.2L168.7 79.9L166.7 81.8L165.3 79.9ZM182.6 83.8L184.3 86.4L182.4 88.5L180.7 85.5ZM186.1 84.4L187.9 86.7L186.0 89.1L184.3 86.4ZM177.5 84.2L178.6 86.2L176.9 88.0L175.9 86.0ZM180.2 84.4L181.3 86.5L179.7 88.3L178.6 86.2Z" fill="#20eeed" stroke="#20eeed" stroke-width="0.4"/>
<path d="M115.2 67.4L116.1 69.7L113.8 71.5L112.9 69.1ZM131.2 80.5L132.4 82.5L130.7 84.3L129.4 82.3ZM132.4 82.5L133.7 84.5L131.9 86.4L130.7 84.3ZM136.4 84.6L137.3 86.6L135.5 88.5L134.6 86.5ZM142.7 86.9L143.7 89.0L141.9 90.8L141.0 88.8ZM154.9 89.1L156.2 91.6L154.0 93.7L152.7 91.1ZM149.3 89.1L150.3 91.1L148.7 92.7L147.7 90.7ZM151.9 89.5L152.9 91.6L151.3 93.1L150.3 91.1ZM157.9 90.0L159.4 92.1L157.4 94.1L156.0 91.8ZM162.9 92.4L164.4 94.6L162.5 96.7L160.9 94.4Z" fill="#26a2ff" stroke="#26a2ff" stroke-width="0.4"/>
<path d="M129.4 59.4L130.5 60.9L128.4 62.7L127.3 61.0ZM130.8 60.7L131.8 62.2L129.9 63.9L128.9 62.3ZM131.8 62.2L133.0 63.7L131.0 65.5L129.9 63.9ZM133.0 63.7L134.1 65.2L132.2 67.1L131.0 65.5ZM134.5 64.8L135.3 65.9L133.7 67.6L132.9 66.4ZM135.3 65.9L136.2 67.1L134.6 68.7L133.7 67.6ZM136.2 67.1L137.3 68.4L135.7 70.1L134.6 68.7ZM137.3 68.4L138.4 69.8L136.8 71.5L135.7 70.1ZM138.4 69.8L139.7 71.7L138.1 73.4L136.8 71.5ZM150.0 73.5L151.2 75.6L148.9 77.1L147.7 74.8ZM155.8 72.7L157.1 74.7L154.8 76.2L153.5 74.1ZM159.3 73.1L160.7 75.0L158.4 76.7L157.1 74.7ZM144.1 73.9L145.1 75.7L143.4 77.5L142.5 75.6ZM164.7 74.7L166.0 76.4L164.0 78.1L162.7 76.2ZM167.9 74.8L169.3 76.4L167.3 78.2L166.0 76.4ZM184.5 82.1L186.1 84.4L184.3 86.4L182.6 83.8ZM188.0 82.3L189.7 84.2L187.9 86.7L186.1 84.4ZM179.1 82.5L180.2 84.4L178.6 86.2L177.5 84.2Z" fill="#20f5e4" stroke="#20f5e4" stroke-width="0.4"/>
<path d="M118.4 67.9L119.5 70.1L117.1 72.1L116.1 69.7ZM121.0 68.9L122.0 70.9L119.9 72.8L118.9 70.6ZM125.0 71.1L126.1 73.2L124.0 75.3L123.0 73.1ZM126.3 73.0L127.1 74.2L125.4 76.0L124.6 74.7ZM127.1 74.2L128.0 75.5L126.2 77.2L125.4 76.0ZM128.0 75.5L129.0 77.0L127.2 78.8L126.2 77.2ZM129.0 77.0L130.0 78.5L128.2 80.3L127.2 78.8ZM130.0 78.5L131.2 80.5L129.4 82.3L128.2 80.3ZM135.5 82.7L136.4 84.6L134.6 86.5L133.7 84.5ZM139.1 84.8L140.0 86.7L138.2 88.6L137.3 86.6ZM141.8 84.9L142.7 86.9L141.0 88.8L140.0 86.7ZM145.8 86.8L146.7 88.7L145.1 90.4L144.2 88.5ZM148.3 87.1L149.3 89.1L147.7 90.7L146.7 88.7ZM150.9 87.5L151.9 89.5L150.3 91.1L149.3 89.1ZM161.4 90.3L162.9 92.4L160.9 94.4L159.4 92.1ZM169.1 93.5L170.1 95.6L168.3 97.5L167.3 95.4ZM171.8 93.7L172.9 95.7L171.1 97.7L170.1 95.6ZM174.6 93.8L175.7 95.9L174.0 97.9L172.9 95.7ZM177.4 94.0L178.5 96.2L176.8 98.1L175.7 95.9ZM180.2 94.3L181.3 96.4L179.6 98.3L178.5 96.2ZM183.0 94.6L184.2 96.7L182.5 98.6L181.3 96.4Z" fill="#27a9ff" stroke="#27a9ff" stroke-width="0.4"/>
<path d="M116.1 69.7L117.1 72.1L114.8 74.0L113.8 71.5ZM118.9 70.6L119.9 72.8L117.8 74.6L116.9 72.3ZM123.0 73.1L124.0 75.3L121.9 77.4L120.9 75.0ZM124.6 74.7L125.4 76.0L123.7 77.7L122.9 76.4ZM125.4 76.0L126.2 77.2L124.5 79.0L123.7 77.7ZM126.2 77.2L127.2 78.8L125.5 80.6L124.5 79.0ZM127.2 78.8L128.2 80.3L126.5 82.2L125.5 80.6ZM128.2 80.3L129.4 82.3L127.6 84.2L126.5 82.2ZM129.4 82.3L130.7 84.3L128.8 86.2L127.6 84.2ZM137.3 86.6L138.2 88.6L136.4 90.5L135.5 88.5ZM147.7 90.7L148.7 92.7L147.0 94.3L146.0 92.3ZM150.3 91.1L151.3 93.1L149.7 94.7L148.7 92.7ZM152.9 91.6L154.0 93.7L152.3 95.2L151.3 93.1ZM156.0 91.8L157.4 94.1L155.4 96.0L154.0 93.7ZM160.9 94.4L162.5 96.7L160.4 98.8L158.9 96.4Z" fill="#2395ff" stroke="#2395ff" stroke-width="0.4"/>
<path d="M116.9 72.3L117.8 74.6L115.7 76.5L114.8 74.0ZM119.9 72.8L120.9 75.0L118.8 77.0L117.8 74.6ZM135.5 88.5L136.4 90.5L134.5 92.4L133.6 90.4ZM146.0 92.3L147.0 94.3L145.3 96.0L144.4 94.0ZM148.7 92.7L149.7 94.7L148.0 96.3L147.0 94.3ZM151.3 93.1L152.3 95.2L150.7 96.8L149.7 94.7ZM158.9 96.4L160.4 98.8L158.4 100.9L156.9 98.5ZM154.0 93.7L155.1 95.6L153.5 97.1L152.3 95.2ZM155.1 95.6L156.3 97.5L154.6 99.0L153.5 97.1Z" fill="#2187ff" stroke="#2187ff" stroke-width="0.4"/>
<path d="M122.0 70.9L123.0 73.1L120.9 75.0L119.9 72.8ZM133.7 84.5L134.6 86.5L132.8 88.4L131.9 86.4ZM140.0 86.7L141.0 88.8L139.1 90.6L138.2 88.6ZM144.2 88.5L145.1 90.4L143.4 92.1L142.5 90.2ZM146.7 88.7L147.7 90.7L146.0 92.3L145.1 90.4ZM159.4 92.1L160.9 94.4L158.9 96.4L157.4 94.1ZM164.4 94.6L166.1 96.8L164.1 99.0L162.5 96.7ZM167.3 95.4L168.3 97.5L166.5 99.5L165.5 97.4ZM170.1 95.6L171.1 97.7L169.4 99.7L168.3 97.5ZM172.9 95.7L174.0 97.9L172.2 99.8L171.1 97.7ZM175.7 95.9L176.8 98.1L175.1 100.0L174.0 97.9ZM178.5 96.2L179.6 98.3L177.9 100.3L176.8 98.1ZM181.3 96.4L182.5 98.6L180.8 100.5L179.6 98.3Z" fill="#259bff" stroke="#259bff" stroke-width="0.4"/>
<path d="M117.8 74.6L118.8 77.0L116.6 79.1L115.7 76.5ZM121.1 78.2L121.9 79.5L120.1 81.3L119.4 79.9ZM121.9 79.5L122.7 80.8L120.9 82.6L120.1 81.3ZM122.7 80.8L123.7 82.4L121.9 84.3L120.9 82.6ZM123.7 82.4L124.6 84.0L122.8 85.9L121.9 84.3ZM124.6 84.0L125.8 86.0L124.0 87.9L122.8 85.9ZM130.9 90.3L131.8 92.3L129.9 94.2L129.0 92.2ZM133.6 90.4L134.5 92.4L132.6 94.3L131.8 92.3ZM137.3 92.6L138.2 94.7L136.4 96.6L135.4 94.5ZM139.2 93.7L140.1 95.5L138.3 97.3L137.5 95.5ZM141.8 93.8L142.7 95.7L141.0 97.4L140.1 95.5ZM145.3 96.0L146.3 98.0L144.6 99.6L143.6 97.6ZM148.0 96.3L149.0 98.4L147.3 100.0L146.3 98.0ZM151.8 98.7L152.9 100.6L151.2 102.2L150.1 100.3ZM154.6 99.0L155.8 101.0L154.1 102.5L152.9 100.6ZM155.8 101.0L157.0 103.0L155.3 104.5L154.1 102.5ZM158.7 101.5L160.0 103.5L158.3 105.0L157.0 103.0ZM161.8 101.4L162.8 103.6L160.9 105.7L160.0 103.5ZM164.7 101.5L165.7 103.7L163.8 105.8L162.8 103.6ZM167.6 101.7L168.6 103.9L166.8 105.9L165.7 103.7ZM170.4 101.8L171.5 104.0L169.7 106.1L168.6 103.9ZM173.3 102.0L174.4 104.3L172.6 106.3L171.5 104.0ZM176.2 102.3L177.3 104.5L175.5 106.5L174.4 104.3Z" fill="#2075fd" stroke="#2075fd" stroke-width="0.4"/>
<path d="M120.9 75.0L121.9 77.4L119.8 79.5L118.8 77.0ZM130.1 88.3L130.9 90.3L129.0 92.2L128.2 90.2ZM136.4 90.5L137.3 92.6L135.4 94.5L134.5 92.4ZM144.4 94.0L145.3 96.0L143.6 97.6L142.7 95.7ZM147.0 94.3L148.0 96.3L146.3 98.0L145.3 96.0ZM150.7 96.8L151.8 98.7L150.1 100.3L149.0 98.4ZM153.5 97.1L154.6 99.0L152.9 100.6L151.8 98.7ZM157.5 99.4L158.7 101.5L157.0 103.0L155.8 101.0Z" fill="#207afe" stroke="#207afe" stroke-width="0.4"/>
<path d="M118.8 77.0L119.8 79.5L117.6 81.7L116.6 79.1ZM131.8 92.3L132.6 94.3L130.7 96.3L129.9 94.2ZM137.5 95.5L138.3 97.3L136.6 99.1L135.7 97.3ZM143.6 97.6L144.6 99.6L142.8 101.3L141.9 99.3ZM146.3 98.0L147.3 100.0L145.6 101.6L144.6 99.6ZM147.3 100.0L148.4 101.9L146.6 103.5L145.6 101.6ZM150.1 100.3L151.2 102.2L149.5 103.8L148.4 101.9ZM151.2 102.2L152.4 104.1L150.7 105.7L149.5 103.8ZM154.1 102.5L155.3 104.5L153.6 106.1L152.4 104.1ZM155.3 104.5L156.6 106.6L154.8 108.2L153.6 106.1ZM162.8 103.6L163.8 105.8L161.9 107.9L160.9 105.7ZM165.7 103.7L166.8 105.9L164.9 108.0L163.8 105.8ZM168.6 103.9L169.7 106.1L167.8 108.2L166.8 105.9ZM171.5 104.0L172.6 106.3L170.8 108.4L169.7 106.1ZM174.4 104.3L175.5 106.5L173.7 108.6L172.6 106.3ZM158.3 105.0L159.2 107.2L157.5 108.7L156.6 106.6Z" fill="#2069fb" stroke="#2069fb" stroke-width="0.4"/>
<path d="M172.8 35.8L173.9 36.4L172.8 38.3L171.7 37.6ZM173.9 36.4L175.0 37.1L173.9 39.0L172.8 38.3ZM175.0 37.1L176.3 37.9L175.2 39.9L173.9 39.0ZM176.3 37.9L177.7 38.8L176.6 40.7L175.2 39.9ZM177.7 38.8L179.3 39.7L178.2 41.8L176.6 40.7ZM179.3 39.7L181.0 40.7L179.8 42.8L178.2 41.8ZM181.0 40.7L182.7 41.8L181.5 43.8L179.8 42.8ZM210.7 31.3L212.1 33.0L209.9 33.8L208.4 32.2ZM208.4 32.2L209.9 33.8L208.6 34.4L207.1 32.7ZM207.1 32.7L208.6 34.4L207.2 34.9L205.7 33.2ZM205.7 33.2L207.2 34.9L205.8 35.4L204.4 33.7ZM204.4 33.7L205.8 35.4L204.4 35.9L203.0 34.2ZM203.0 34.2L204.4 35.9L202.0 36.9L200.5 35.1ZM200.5 35.1L202.0 36.9L200.6 37.4L199.1 35.6ZM199.1 35.6L200.6 37.4L199.1 38.0L197.6 36.2ZM197.6 36.2L199.1 38.0L197.6 38.6L196.1 36.7ZM196.1 36.7L197.6 38.6L196.1 39.1L194.6 37.3ZM194.6 37.3L196.1 39.1L194.8 39.7L193.3 37.8ZM193.3 37.8L194.8 39.7L193.4 40.2L192.0 38.3ZM192.0 38.3L193.4 40.2L191.8 40.8L190.4 38.9ZM190.4 38.9L191.8 40.8L190.2 41.4L188.8 39.5ZM188.8 39.5L190.2 41.4L188.2 42.2L186.8 40.2ZM186.8 40.2L188.2 42.2L186.2 43.1L184.7 41.0ZM184.7 41.0L186.2 43.1L184.1 44.0L182.7 41.8Z" fill="#d5f236" stroke="#d5f236" stroke-width="0.4"/>
<path d="M171.7 37.6L172.8 38.3L171.6 40.3L170.5 39.6ZM172.8 38.3L173.9 39.0L172.8 41.0L171.6 40.3ZM173.9 39.0L175.2 39.9L174.1 41.9L172.8 41.0ZM175.2 39.9L176.6 40.7L175.5 42.7L174.1 41.9ZM176.6 40.7L178.2 41.8L177.0 43.8L175.5 42.7ZM178.2 41.8L179.8 42.8L178.7 44.8L177.0 43.8ZM179.8 42.8L181.5 43.8L180.4 45.9L178.7 44.8ZM183.8 43.5L184.9 45.3L183.8 47.1L182.6 45.4Z" fill="#b8f130" stroke="#b8f130" stroke-width="0.4"/>
<path d="M170.5 39.6L171.6 40.3L170.5 42.2L169.4 41.5ZM171.6 40.3L172.8 41.0L171.6 43.0L170.5 42.2ZM172.8 41.0L174.1 41.9L172.9 43.8L171.6 43.0ZM174.1 41.9L175.5 42.7L174.3 44.8L172.9 43.8ZM175.5 42.7L177.0 43.8L175.9 45.8L174.3 44.8ZM177.0 43.8L178.7 44.8L177.5 46.9L175.9 45.8ZM178.7 44.8L180.4 45.9L179.2 48.0L177.5 46.9ZM215.2 35.2L217.2 36.1L216.0 35.9L213.9 34.4ZM216.0 35.9L218.1 37.5L216.8 38.1L214.7 35.8ZM215.2 36.3L216.8 38.1L214.5 39.0L212.9 37.3ZM212.9 37.3L214.5 39.0L213.2 39.6L211.6 37.8ZM211.6 37.8L213.2 39.6L211.8 40.2L210.2 38.4ZM210.2 38.4L211.8 40.2L210.4 40.8L208.9 38.9ZM208.9 38.9L210.4 40.8L209.0 41.3L207.5 39.5ZM207.5 39.5L209.0 41.3L206.6 42.4L205.0 40.5ZM205.0 40.5L206.6 42.4L205.1 43.0L203.6 41.1ZM203.6 41.1L205.1 43.0L203.6 43.6L202.1 41.7ZM202.1 41.7L203.6 43.6L202.1 44.3L200.6 42.3ZM200.6 42.3L202.1 44.3L200.6 44.9L199.1 42.9ZM199.1 42.9L200.6 44.9L199.3 45.5L197.7 43.5ZM197.7 43.5L199.3 45.5L197.9 46.0L196.4 44.0ZM196.4 44.0L197.9 46.0L196.3 46.7L194.8 44.7ZM194.8 44.7L196.3 46.7L194.7 47.4L193.2 45.3ZM193.2 45.3L194.7 47.4L192.7 48.5L191.2 46.4Z" fill="#9bf02a" stroke="#9bf02a" stroke-width="0.4"/>
<path d="M169.4 41.5L170.5 42.2L169.4 44.2L168.3 43.4ZM170.5 42.2L171.6 43.0L170.5 44.9L169.4 44.2ZM171.6 43.0L172.9 43.8L171.8 45.9L170.5 44.9ZM172.9 43.8L174.3 44.8L173.1 46.8L171.8 45.9ZM174.3 44.8L175.9 45.8L174.7 47.9L173.1 46.8ZM175.9 45.8L177.5 46.9L176.3 49.0L174.7 47.9ZM177.5 46.9L179.2 48.0L178.0 50.2L176.3 49.0ZM182.6 48.8L183.8 50.3L182.6 52.0L181.4 50.6ZM192.7 48.5L194.1 50.5L192.0 51.6L190.6 49.7ZM190.6 49.7L192.0 51.6L189.9 52.7L188.5 50.8Z" fill="#7cf02e" stroke="#7cf02e" stroke-width="0.4"/>
<path d="M168.3 43.4L169.4 44.2L168.2 46.2L167.1 45.4ZM169.4 44.2L170.5 44.9L169.3 46.9L168.2 46.2ZM170.5 44.9L171.8 45.9L170.6 47.9L169.3 46.9ZM171.8 45.9L173.1 46.8L172.0 48.9L170.6 47.9ZM173.1 46.8L174.7 47.9L173.5 50.0L172.0 48.9ZM174.7 47.9L176.3 49.0L175.2 51.2L173.5 50.0ZM176.3 49.0L178.0 50.2L176.8 52.3L175.2 51.2ZM182.6 52.0L183.7 53.3L182.5 54.8L181.4 53.6ZM222.3 40.4L223.8 42.1L222.6 42.7L221.0 41.0ZM221.0 41.0L222.6 42.7L221.3 43.3L219.7 41.5ZM219.7 41.5L221.3 43.3L219.0 44.4L217.5 42.5ZM217.5 42.5L219.0 44.4L217.7 45.0L216.1 43.1ZM216.1 43.1L217.7 45.0L216.3 45.6L214.8 43.8ZM214.8 43.8L216.3 45.6L214.9 46.2L213.4 44.4ZM213.4 44.4L214.9 46.2L213.5 46.9L212.0 45.0ZM212.0 45.0L213.5 46.9L212.3 47.5L210.8 45.6ZM210.8 45.6L212.3 47.5L211.1 48.0L209.5 46.1ZM209.5 46.1L211.1 48.0L209.6 48.7L208.1 46.8ZM208.1 46.8L209.6 48.7L208.1 49.4L206.6 47.4ZM206.6 47.4L208.1 49.4L206.6 50.1L205.1 48.1ZM205.1 48.1L206.6 50.1L205.0 50.8L203.5 48.8ZM203.5 48.8L205.0 50.8L203.7 51.4L202.2 49.4ZM202.2 49.4L203.7 51.4L202.4 52.1L200.8 50.0ZM200.8 50.0L202.4 52.1L200.7 52.8L199.2 50.7ZM199.2 50.7L200.7 52.8L199.1 53.6L197.6 51.5Z" fill="#5af037" stroke="#5af037" stroke-width="0.4"/>
<path d="M122.9 76.4L123.7 77.7L121.9 79.5L121.1 78.2ZM123.7 77.7L124.5 79.0L122.7 80.8L121.9 79.5ZM124.5 79.0L125.5 80.6L123.7 82.4L122.7 80.8ZM125.5 80.6L126.5 82.2L124.6 84.0L123.7 82.4ZM126.5 82.2L127.6 84.2L125.8 86.0L124.6 84.0ZM127.6 84.2L128.8 86.2L127.0 88.1L125.8 86.0ZM128.8 86.2L130.1 88.3L128.2 90.2L127.0 88.1ZM132.8 88.4L133.6 90.4L131.8 92.3L130.9 90.3ZM139.1 90.6L140.1 92.7L138.2 94.7L137.3 92.6ZM140.9 91.9L141.8 93.8L140.1 95.5L139.2 93.7ZM143.4 92.1L144.4 94.0L142.7 95.7L141.8 93.8ZM149.7 94.7L150.7 96.8L149.0 98.4L148.0 96.3ZM160.4 98.8L162.0 101.2L160.0 103.5L158.4 100.9ZM152.3 95.2L153.5 97.1L151.8 98.7L150.7 96.8ZM156.3 97.5L157.5 99.4L155.8 101.0L154.6 99.0ZM163.7 99.4L164.7 101.5L162.8 103.6L161.8 101.4ZM166.5 99.5L167.6 101.7L165.7 103.7L164.7 101.5ZM169.4 99.7L170.4 101.8L168.6 103.9L167.6 101.7ZM172.2 99.8L173.3 102.0L171.5 104.0L170.4 101.8ZM175.1 100.0L176.2 102.3L174.4 104.3L173.3 102.0ZM177.9 100.3L179.1 102.5L177.3 104.5L176.2 102.3Z" fill="#2080ff" stroke="#2080ff" stroke-width="0.4"/>
<path d="M119.4 79.9L120.1 81.3L118.4 83.1L117.6 81.7ZM120.1 81.3L120.9 82.6L119.1 84.5L118.4 83.1ZM120.9 82.6L121.9 84.3L120.0 86.1L119.1 84.5ZM121.9 84.3L122.8 85.9L121.0 87.9L120.0 86.1ZM122.8 85.9L124.0 87.9L122.1 89.9L121.0 87.9ZM124.0 87.9L125.1 90.0L123.2 92.0L122.1 89.9ZM125.1 90.0L126.3 92.2L124.4 94.1L123.2 92.0ZM129.0 92.2L129.9 94.2L128.0 96.2L127.1 94.2ZM132.6 94.3L133.5 96.4L131.6 98.4L130.7 96.3ZM135.4 94.5L136.4 96.6L134.4 98.6L133.5 96.4ZM138.3 97.3L139.2 99.2L137.5 100.9L136.6 99.1ZM141.0 97.4L141.9 99.3L140.1 101.0L139.2 99.2ZM144.6 99.6L145.6 101.6L143.8 103.3L142.8 101.3ZM148.4 101.9L149.5 103.8L147.8 105.4L146.6 103.5ZM152.4 104.1L153.6 106.1L151.8 107.7L150.7 105.7ZM160.9 105.7L161.9 107.9L160.2 109.3L159.2 107.2Z" fill="#2063fa" stroke="#2063fa" stroke-width="0.4"/>
<path d="M168.1 49.0L169.4 49.9L167.8 51.0L166.5 50.0ZM169.4 49.9L170.8 50.9L169.1 52.0L167.8 51.0ZM184.2 58.5L185.6 59.9L184.1 61.3L182.7 60.0ZM185.6 59.9L187.0 61.3L185.5 62.5L184.1 61.3ZM188.5 60.2L190.0 61.8L188.5 62.8L187.0 61.3ZM227.1 45.2L228.9 46.6L227.6 47.2L225.8 45.8ZM225.8 45.8L227.6 47.2L226.3 47.9L224.6 46.5ZM224.6 46.5L226.3 47.9L224.1 48.6L222.3 47.4ZM224.1 48.6L225.8 49.9L224.5 50.6L222.7 49.3ZM222.7 49.3L224.5 50.6L223.1 51.3L221.3 50.0ZM221.3 50.0L223.1 51.3L221.7 52.0L219.9 50.7ZM219.9 50.7L221.7 52.0L220.3 52.7L218.5 51.4ZM218.5 51.4L220.3 52.7L219.1 53.4L217.3 52.0ZM217.3 52.0L219.1 53.4L217.9 54.0L216.1 52.6ZM216.1 52.6L217.9 54.0L216.4 54.5L214.6 53.2ZM216.4 54.5L218.2 55.8L216.7 56.2L214.9 55.0ZM214.9 55.0L216.7 56.2L215.2 57.0L213.4 55.7ZM213.4 55.7L215.2 57.0L213.6 57.8L211.8 56.5ZM211.8 56.5L213.6 57.8L212.3 58.5L210.5 57.2ZM210.5 57.2L212.3 58.5L210.9 59.2L209.1 57.9ZM209.1 57.9L210.9 59.2L209.3 60.1L207.5 58.7ZM207.5 58.7L209.3 60.1L207.6 60.9L205.8 59.6ZM198.1 59.3L199.9 60.9L197.7 62.3L196.0 60.5ZM204.1 58.3L205.8 59.6L203.7 61.0L202.0 59.6ZM202.0 59.6L203.7 61.0L201.6 62.5L199.9 60.9ZM205.8 59.6L207.6 60.9L205.5 62.6L203.7 61.0ZM192.5 60.0L194.2 61.7L192.4 63.0L190.7 61.2ZM216.7 56.2L218.4 57.4L216.9 58.1L215.2 57.0ZM215.2 57.0L216.9 58.1L215.4 58.8L213.6 57.8ZM216.9 58.1L218.7 59.2L217.1 59.8L215.4 58.8ZM218.7 59.2L220.5 60.3L218.9 60.9L217.1 59.8ZM220.5 60.3L222.3 61.5L220.7 62.0L218.9 60.9ZM213.6 57.8L215.4 58.8L214.0 59.5L212.3 58.5ZM212.3 58.5L214.0 59.5L212.6 60.3L210.9 59.2ZM215.4 58.8L217.1 59.8L215.8 60.6L214.0 59.5ZM214.0 59.5L215.8 60.6L214.4 61.3L212.6 60.3ZM217.1 59.8L218.9 60.9L217.5 61.7L215.8 60.6ZM215.8 60.6L217.5 61.7L216.2 62.4L214.4 61.3ZM218.9 60.9L220.7 62.0L219.4 62.8L217.5 61.7ZM217.5 61.7L219.4 62.8L218.0 63.5L216.2 62.4ZM210.9 59.2L212.6 60.3L211.0 61.3L209.3 60.1ZM209.3 60.1L211.0 61.3L209.3 62.4L207.6 60.9ZM212.6 60.3L214.4 61.3L212.7 62.6L211.0 61.3Z" fill="#2ef25b" stroke="#2ef25b" stroke-width="0.4"/>
<path d="M164.8 51.0L166.1 52.0L164.4 53.0L163.1 52.0ZM166.1 52.0L167.4 53.0L165.7 54.1L164.4 53.0ZM167.4 53.0L169.0 54.3L167.2 55.5L165.7 54.1ZM169.0 54.3L170.5 55.7L168.8 57.0L167.2 55.5ZM173.9 55.8L175.7 57.3L174.0 58.7L172.2 57.1ZM175.7 57.3L177.6 58.8L175.9 60.3L174.0 58.7ZM177.6 58.8L179.5 60.4L177.8 62.0L175.9 60.3ZM185.0 62.1L187.0 63.9L185.2 65.8L183.3 63.9ZM228.1 49.3L229.9 50.7L227.7 51.2L225.8 49.9ZM201.6 62.5L203.4 64.2L201.2 66.0L199.4 64.1ZM190.5 64.2L192.2 66.0L190.3 67.2L188.7 65.5ZM195.9 63.5L197.6 65.3L195.8 66.5L194.1 64.7ZM229.9 50.7L231.7 51.6L229.4 52.2L227.7 51.2ZM229.4 52.2L231.2 53.3L229.8 54.1L228.1 53.0ZM228.1 53.0L229.8 54.1L228.4 54.8L226.7 53.7ZM226.7 53.7L228.4 54.8L227.1 55.4L225.3 54.3ZM228.4 54.8L230.2 55.9L228.9 56.4L227.1 55.4ZM228.9 56.4L230.7 57.5L229.3 57.9L227.4 56.9ZM214.5 64.0L216.4 65.3L214.7 67.1L212.9 65.5Z" fill="#23f377" stroke="#23f377" stroke-width="0.4"/>
<path d="M168.8 57.0L170.4 58.5L168.6 59.8L167.0 58.2ZM165.5 56.7L167.0 58.2L165.4 59.3L163.8 57.7ZM170.4 58.5L172.2 60.1L170.4 61.6L168.6 59.8ZM177.8 62.0L179.6 63.9L177.8 65.6L176.0 63.6ZM183.3 63.9L185.2 65.8L183.5 67.8L181.5 65.8ZM194.0 67.7L195.7 69.5L193.8 70.8L192.1 69.0ZM185.6 65.4L187.2 67.0L185.8 68.5L184.2 67.0ZM190.3 67.2L192.1 69.0L190.6 70.4L188.9 68.7ZM206.2 65.2L207.9 67.0L206.3 68.5L204.6 66.6ZM209.5 65.4L211.3 67.2L209.7 68.8L207.9 67.0ZM201.2 66.0L202.6 67.6L200.8 68.7L199.4 67.1ZM199.4 67.1L200.8 68.7L198.9 69.9L197.6 68.3Z" fill="#20f58c" stroke="#20f58c" stroke-width="0.4"/>
<path d="M142.3 66.9L143.7 68.8L141.4 70.0L140.1 68.1ZM145.9 67.6L147.3 69.5L145.1 70.7L143.7 68.8ZM143.7 68.8L145.1 70.7L142.7 71.9L141.4 70.0ZM151.8 67.1L153.3 69.0L151.1 70.2L149.6 68.3ZM149.6 68.3L151.1 70.2L148.8 71.4L147.3 69.5ZM155.5 67.8L156.7 69.5L154.5 70.8L153.3 69.0ZM161.0 67.0L162.3 68.6L160.2 69.9L158.9 68.3ZM158.9 68.3L160.2 69.9L158.0 71.3L156.7 69.5ZM162.3 68.6L163.7 70.2L161.5 71.7L160.2 69.9ZM165.8 68.8L167.2 70.3L165.0 71.8L163.7 70.2ZM170.3 70.5L171.6 72.0L169.8 73.2L168.5 71.7ZM173.4 70.8L174.8 72.4L173.0 73.6L171.6 72.0ZM176.6 71.2L178.0 72.9L176.2 74.0L174.8 72.4ZM179.8 71.8L181.4 73.2L179.6 74.3L178.0 72.9ZM178.0 72.9L179.6 74.3L177.8 75.4L176.2 74.0ZM181.4 73.2L183.0 74.6L181.3 75.7L179.6 74.3ZM179.6 74.3L181.3 75.7L179.5 76.9L177.8 75.4ZM183.0 74.6L184.7 76.0L182.9 77.2L181.3 75.7ZM181.3 75.7L182.9 77.2L181.1 78.4L179.5 76.9ZM184.7 76.0L186.4 77.5L184.7 78.7L182.9 77.2ZM182.9 77.2L184.7 78.7L182.9 79.9L181.1 78.4ZM193.8 80.9L195.2 82.2L193.3 83.4L191.8 82.1ZM186.4 77.5L188.1 78.9L186.3 80.5L184.7 78.7Z" fill="#20f8c2" stroke="#20f8c2" stroke-width="0.4"/>
<path d="M141.4 70.0L142.7 71.9L141.1 73.6L139.7 71.7ZM148.8 71.4L150.0 73.5L147.7 74.8L146.5 72.6ZM154.5 70.8L155.8 72.7L153.5 74.1L152.3 72.1ZM160.2 69.9L161.5 71.7L159.3 73.1L158.0 71.3ZM165.3 71.7L166.6 73.2L164.7 74.7L163.4 73.1ZM169.8 73.2L171.2 74.7L169.3 76.4L167.9 74.8ZM174.4 75.1L176.0 76.6L174.2 77.8L172.6 76.3ZM176.0 76.6L177.6 78.1L175.8 79.3L174.2 77.8ZM177.6 78.1L179.3 79.6L177.4 80.9L175.8 79.3ZM179.3 79.6L181.0 81.2L179.1 82.5L177.4 80.9ZM182.9 79.9L184.5 82.1L182.6 83.8L181.0 81.2ZM186.3 80.5L188.0 82.3L186.1 84.4L184.5 82.1Z" fill="#20f8d6" stroke="#20f8d6" stroke-width="0.4"/>
<path d="M125.8 86.0L127.0 88.1L125.1 90.0L124.0 87.9ZM127.0 88.1L128.2 90.2L126.3 92.2L125.1 90.0ZM128.2 90.2L129.0 92.2L127.1 94.2L126.3 92.2ZM134.5 92.4L135.4 94.5L133.5 96.4L132.6 94.3ZM140.1 95.5L141.0 97.4L139.2 99.2L138.3 97.3ZM142.7 95.7L143.6 97.6L141.9 99.3L141.0 97.4ZM149.0 98.4L150.1 100.3L148.4 101.9L147.3 100.0ZM152.9 100.6L154.1 102.5L152.4 104.1L151.2 102.2ZM157.0 103.0L158.3 105.0L156.6 106.6L155.3 104.5ZM160.0 103.5L160.9 105.7L159.2 107.2L158.3 105.0Z" fill="#206ffc" stroke="#206ffc" stroke-width="0.4"/>
<path d="M130.7 84.3L131.9 86.4L130.1 88.3L128.8 86.2ZM131.9 86.4L132.8 88.4L130.9 90.3L130.1 88.3ZM134.6 86.5L135.5 88.5L133.6 90.4L132.8 88.4ZM138.2 88.6L139.1 90.6L137.3 92.6L136.4 90.5ZM141.0 88.8L141.9 90.8L140.1 92.7L139.1 90.6ZM142.5 90.2L143.4 92.1L141.8 93.8L140.9 91.9ZM145.1 90.4L146.0 92.3L144.4 94.0L143.4 92.1ZM157.4 94.1L158.9 96.4L156.9 98.5L155.4 96.0ZM162.5 96.7L164.1 99.0L162.0 101.2L160.4 98.8ZM165.5 97.4L166.5 99.5L164.7 101.5L163.7 99.4ZM168.3 97.5L169.4 99.7L167.6 101.7L166.5 99.5ZM171.1 97.7L172.2 99.8L170.4 101.8L169.4 99.7ZM174.0 97.9L175.1 100.0L173.3 102.0L172.2 99.8ZM176.8 98.1L177.9 100.3L176.2 102.3L175.1 100.0ZM179.6 98.3L180.8 100.5L179.1 102.5L177.9 100.3Z" fill="#228eff" stroke="#228eff" stroke-width="0.4"/>
<path d="M211.9 32.8L213.9 34.4L212.6 33.5L210.7 31.3ZM212.1 33.0L213.7 34.6L211.4 35.5L209.9 33.8ZM209.9 33.8L211.4 35.5L210.1 36.1L208.6 34.4ZM208.6 34.4L210.1 36.1L208.7 36.6L207.2 34.9ZM207.2 34.9L208.7 36.6L207.3 37.1L205.8 35.4ZM205.8 35.4L207.3 37.1L205.9 37.7L204.4 35.9ZM204.4 35.9L205.9 37.7L203.5 38.7L202.0 36.9ZM202.0 36.9L203.5 38.7L202.0 39.2L200.6 37.4ZM200.6 37.4L202.0 39.2L200.6 39.8L199.1 38.0ZM199.1 38.0L200.6 39.8L199.1 40.4L197.6 38.6ZM197.6 38.6L199.1 40.4L197.6 41.0L196.1 39.1ZM196.1 39.1L197.6 41.0L196.2 41.6L194.8 39.7ZM194.8 39.7L196.2 41.6L194.9 42.1L193.4 40.2ZM193.4 40.2L194.9 42.1L193.3 42.7L191.8 40.8ZM191.8 40.8L193.3 42.7L191.7 43.3L190.2 41.4ZM190.2 41.4L191.7 43.3L189.7 44.3L188.2 42.2Z" fill="#c3f132" stroke="#c3f132" stroke-width="0.4"/>
<path d="M217.2 36.1L219.3 37.0L218.1 37.5L216.0 35.9ZM191.2 46.4L192.7 48.5L190.6 49.7L189.1 47.4ZM180.4 45.9L181.5 47.4L180.3 49.3L179.2 48.0ZM186.1 47.1L187.3 48.9L186.1 50.4L184.9 48.7Z" fill="#96f029" stroke="#96f029" stroke-width="0.4"/>
<path d="M188.2 42.2L189.7 44.3L187.6 45.2L186.2 43.1ZM186.2 43.1L187.6 45.2L185.5 46.2L184.1 44.0Z" fill="#bef131" stroke="#bef131" stroke-width="0.4"/>
<path d="M189.1 47.4L190.6 49.7L188.5 50.8L187.0 48.5ZM183.8 47.1L184.9 48.7L183.8 50.3L182.6 48.8Z" fill="#90f028" stroke="#90f028" stroke-width="0.4"/>
<path d="M179.2 48.0L180.3 49.3L179.1 51.3L178.0 50.2ZM186.1 50.4L187.3 52.1L186.1 53.4L184.9 51.9Z" fill="#75f02f" stroke="#75f02f" stroke-width="0.4"/>
<path d="M178.0 50.2L179.1 51.3L177.9 53.3L176.8 52.3ZM183.7 53.3L184.9 54.7L183.7 56.1L182.5 54.8ZM197.6 51.5L199.1 53.6L197.0 54.6L195.6 52.5ZM195.6 52.5L197.0 54.6L194.9 55.6L193.5 53.6ZM193.5 53.6L194.9 55.6L192.8 56.7L191.3 54.7Z" fill="#53f039" stroke="#53f039" stroke-width="0.4"/>
<path d="M176.8 52.3L177.9 53.3L176.7 55.4L175.6 54.5ZM177.9 53.3L179.0 54.3L177.8 56.2L176.7 55.4ZM179.0 54.3L180.2 55.3L178.9 57.0L177.8 56.2ZM180.2 55.3L181.3 56.4L180.1 57.9L178.9 57.0ZM185.6 57.0L187.0 58.6L185.6 59.9L184.2 58.5ZM191.4 57.8L192.9 59.7L191.5 60.7L190.0 59.0ZM225.4 43.9L227.1 45.2L225.8 45.8L224.1 44.5ZM224.1 44.5L225.8 45.8L224.6 46.5L222.8 45.1ZM222.8 45.1L224.6 46.5L222.3 47.4L220.6 46.2ZM220.6 46.2L222.3 47.4L220.9 48.1L219.2 46.8ZM219.2 46.8L220.9 48.1L219.6 48.7L217.9 47.5ZM217.9 47.5L219.6 48.7L218.2 49.4L216.5 48.1ZM216.5 48.1L218.2 49.4L216.8 50.1L215.1 48.8ZM215.1 48.8L216.8 50.1L215.6 50.7L213.8 49.4ZM213.8 49.4L215.6 50.7L214.3 51.3L212.6 50.0ZM212.6 50.0L214.3 51.3L212.8 51.9L211.1 50.7ZM211.1 50.7L212.8 51.9L211.4 52.6L209.6 51.4ZM209.6 51.4L211.4 52.6L209.8 53.3L208.1 52.1ZM208.1 52.1L209.8 53.3L208.3 54.1L206.6 52.9ZM211.4 52.6L213.1 53.7L211.6 54.5L209.8 53.3ZM209.8 53.3L211.6 54.5L210.0 55.3L208.3 54.1ZM206.6 52.9L208.3 54.1L206.9 54.7L205.2 53.5ZM205.2 53.5L206.9 54.7L205.6 55.4L203.9 54.1ZM208.3 54.1L210.0 55.3L208.7 55.9L206.9 54.7ZM206.9 54.7L208.7 55.9L207.3 56.6L205.6 55.4ZM203.9 54.1L205.6 55.4L204.0 56.2L202.3 54.9ZM202.3 54.9L204.0 56.2L202.3 57.0L200.6 55.7ZM205.6 55.4L207.3 56.6L205.7 57.4L204.0 56.2ZM204.0 56.2L205.7 57.4L204.1 58.3L202.3 57.0ZM200.6 55.7L202.3 57.0L200.3 58.1L198.6 56.7ZM198.6 56.7L200.3 58.1L198.1 59.3L196.5 57.7ZM196.5 57.7L198.1 59.3L196.0 60.5L194.3 58.7Z" fill="#35f149" stroke="#35f149" stroke-width="0.4"/>
<path d="M179.1 51.3L180.2 52.5L179.0 54.3L177.9 53.3ZM180.2 52.5L181.4 53.6L180.2 55.3L179.0 54.3ZM185.6 53.9L187.1 55.6L185.6 57.0L184.2 55.5ZM188.5 54.1L189.9 56.0L188.5 57.3L187.1 55.6ZM191.3 54.7L192.8 56.7L191.4 57.8L189.9 56.0Z" fill="#4cf03a" stroke="#4cf03a" stroke-width="0.4"/>
<path d="M184.9 48.7L186.1 50.4L184.9 51.9L183.8 50.3ZM187.3 48.9L188.5 50.8L187.3 52.1L186.1 50.4ZM219.3 37.0L220.8 38.7L219.5 39.2L218.1 37.5ZM218.1 37.5L219.5 39.2L218.2 39.8L216.8 38.1ZM216.8 38.1L218.2 39.8L216.0 40.8L214.5 39.0ZM214.5 39.0L216.0 40.8L214.6 41.4L213.2 39.6ZM213.2 39.6L214.6 41.4L213.3 41.9L211.8 40.2ZM211.8 40.2L213.3 41.9L211.9 42.6L210.4 40.8ZM210.4 40.8L211.9 42.6L210.5 43.2L209.0 41.3ZM209.0 41.3L210.5 43.2L209.3 43.7L207.8 41.9ZM207.8 41.9L209.3 43.7L208.0 44.2L206.6 42.4ZM206.6 42.4L208.0 44.2L206.6 44.9L205.1 43.0ZM205.1 43.0L206.6 44.9L205.1 45.5L203.6 43.6ZM203.6 43.6L205.1 45.5L203.6 46.2L202.1 44.3ZM202.1 44.3L203.6 46.2L202.1 46.8L200.6 44.9ZM200.6 44.9L202.1 46.8L200.7 47.4L199.3 45.5ZM199.3 45.5L200.7 47.4L199.4 48.0L197.9 46.0ZM197.9 46.0L199.4 48.0L197.8 48.7L196.3 46.7ZM196.3 46.7L197.8 48.7L196.2 49.4L194.7 47.4ZM194.7 47.4L196.2 49.4L194.1 50.5L192.7 48.5Z" fill="#82f02c" stroke="#82f02c" stroke-width="0.4"/>
<path d="M181.4 53.6L182.5 54.8L181.3 56.4L180.2 55.3Z" fill="#46f03c" stroke="#46f03c" stroke-width="0.4"/>
<path d="M181.3 56.4L182.5 57.4L181.3 58.8L180.1 57.9ZM182.8 57.1L184.2 58.5L182.7 60.0L181.3 58.8ZM187.0 58.6L188.5 60.2L187.0 61.3L185.6 59.9ZM190.0 59.0L191.5 60.7L190.0 61.8L188.5 60.2ZM222.3 47.4L224.1 48.6L222.7 49.3L220.9 48.1ZM220.9 48.1L222.7 49.3L221.3 50.0L219.6 48.7ZM219.6 48.7L221.3 50.0L219.9 50.7L218.2 49.4ZM218.2 49.4L219.9 50.7L218.5 51.4L216.8 50.1ZM216.8 50.1L218.5 51.4L217.3 52.0L215.6 50.7ZM215.6 50.7L217.3 52.0L216.1 52.6L214.3 51.3ZM214.3 51.3L216.1 52.6L214.6 53.2L212.8 51.9ZM212.8 51.9L214.6 53.2L213.1 53.7L211.4 52.6ZM214.6 53.2L216.4 54.5L214.9 55.0L213.1 53.7ZM213.1 53.7L214.9 55.0L213.4 55.7L211.6 54.5ZM211.6 54.5L213.4 55.7L211.8 56.5L210.0 55.3ZM210.0 55.3L211.8 56.5L210.5 57.2L208.7 55.9ZM208.7 55.9L210.5 57.2L209.1 57.9L207.3 56.6ZM207.3 56.6L209.1 57.9L207.5 58.7L205.7 57.4ZM205.7 57.4L207.5 58.7L205.8 59.6L204.1 58.3ZM202.3 57.0L204.1 58.3L202.0 59.6L200.3 58.1ZM200.3 58.1L202.0 59.6L199.9 60.9L198.1 59.3ZM194.3 58.7L196.0 60.5L194.2 61.7L192.5 60.0Z" fill="#31f152" stroke="#31f152" stroke-width="0.4"/>
<path d="M126.3 92.2L127.1 94.2L125.2 96.1L124.4 94.1ZM129.9 94.2L130.7 96.3L128.8 98.3L128.0 96.2ZM135.7 97.3L136.6 99.1L134.8 100.9L134.0 99.1ZM139.2 99.2L140.1 101.0L138.4 102.8L137.5 100.9ZM141.9 99.3L142.8 101.3L141.1 103.0L140.1 101.0ZM145.6 101.6L146.6 103.5L144.9 105.1L143.8 103.3ZM146.6 103.5L147.8 105.4L146.0 107.1L144.9 105.1ZM149.5 103.8L150.7 105.7L148.9 107.4L147.8 105.4ZM150.7 105.7L151.8 107.7L150.1 109.3L148.9 107.4ZM153.6 106.1L154.8 108.2L153.1 109.8L151.8 107.7ZM163.8 105.8L164.9 108.0L163.0 110.1L161.9 107.9ZM166.8 105.9L167.8 108.2L165.9 110.3L164.9 108.0ZM169.7 106.1L170.8 108.4L168.9 110.5L167.8 108.2ZM172.6 106.3L173.7 108.6L171.9 110.7L170.8 108.4ZM156.6 106.6L157.5 108.7L155.8 110.2L154.8 108.2ZM159.2 107.2L160.2 109.3L158.5 110.8L157.5 108.7Z" fill="#205ef9" stroke="#205ef9" stroke-width="0.4"/>
<path d="M127.1 94.2L128.0 96.2L126.0 98.2L125.2 96.1ZM133.5 96.4L134.4 98.6L132.5 100.6L131.6 98.4ZM136.6 99.1L137.5 100.9L135.7 102.7L134.8 100.9ZM140.1 101.0L141.1 103.0L139.3 104.7L138.4 102.8ZM142.8 101.3L143.8 103.3L142.0 105.0L141.1 103.0ZM143.8 103.3L144.9 105.1L143.1 106.8L142.0 105.0ZM147.8 105.4L148.9 107.4L147.1 109.0L146.0 107.1ZM148.9 107.4L150.1 109.3L148.3 111.0L147.1 109.0ZM151.8 107.7L153.1 109.8L151.3 111.4L150.1 109.3ZM154.8 108.2L155.8 110.2L154.0 111.8L153.1 109.8ZM157.5 108.7L158.5 110.8L156.7 112.3L155.8 110.2ZM161.9 107.9L163.0 110.1L161.2 111.5L160.2 109.3Z" fill="#2058f8" stroke="#2058f8" stroke-width="0.4"/>
<path d="M128.0 96.2L128.8 98.3L126.8 100.3L126.0 98.2ZM131.6 98.4L132.5 100.6L130.5 102.6L129.7 100.4ZM134.0 99.1L134.8 100.9L133.0 102.7L132.2 100.9ZM134.8 100.9L135.7 102.7L133.9 104.5L133.0 102.7ZM138.4 102.8L139.3 104.7L137.5 106.5L136.6 104.6ZM142.0 105.0L143.1 106.8L141.3 108.5L140.2 106.7ZM143.1 106.8L144.2 108.7L142.4 110.4L141.3 108.5ZM147.1 109.0L148.3 111.0L146.4 112.7L145.3 110.7ZM148.3 111.0L149.4 113.0L147.6 114.7L146.4 112.7ZM151.3 111.4L152.2 113.3L150.4 114.9L149.4 113.0ZM154.0 111.8L155.0 113.8L153.2 115.3L152.2 113.3ZM158.5 110.8L159.5 113.0L157.7 114.4L156.7 112.3ZM156.7 112.3L157.7 114.4L156.0 115.9L155.0 113.8ZM163.0 110.1L164.0 112.4L162.3 113.8L161.2 111.5ZM161.2 111.5L162.3 113.8L160.5 115.2L159.5 113.0Z" fill="#204ff6" stroke="#204ff6" stroke-width="0.4"/>
<path d="M130.7 96.3L131.6 98.4L129.7 100.4L128.8 98.3ZM137.5 100.9L138.4 102.8L136.6 104.6L135.7 102.7ZM141.1 103.0L142.0 105.0L140.2 106.7L139.3 104.7ZM144.9 105.1L146.0 107.1L144.2 108.7L143.1 106.8ZM146.0 107.1L147.1 109.0L145.3 110.7L144.2 108.7ZM150.1 109.3L151.3 111.4L149.4 113.0L148.3 111.0ZM164.9 108.0L165.9 110.3L164.0 112.4L163.0 110.1ZM167.8 108.2L168.9 110.5L167.0 112.6L165.9 110.3ZM170.8 108.4L171.9 110.7L170.0 112.8L168.9 110.5ZM153.1 109.8L154.0 111.8L152.2 113.3L151.3 111.4ZM155.8 110.2L156.7 112.3L155.0 113.8L154.0 111.8ZM160.2 109.3L161.2 111.5L159.5 113.0L158.5 110.8Z" fill="#2054f7" stroke="#2054f7" stroke-width="0.4"/>
<path d="M128.8 98.3L129.7 100.4L127.7 102.5L126.8 100.3ZM135.7 102.7L136.6 104.6L134.8 106.3L133.9 104.5ZM139.3 104.7L140.2 106.7L138.4 108.4L137.5 106.5ZM140.2 106.7L141.3 108.5L139.5 110.2L138.4 108.4ZM144.2 108.7L145.3 110.7L143.5 112.4L142.4 110.4ZM145.3 110.7L146.4 112.7L144.6 114.4L143.5 112.4ZM146.4 112.7L147.6 114.7L145.7 116.4L144.6 114.4ZM165.9 110.3L167.0 112.6L165.1 114.8L164.0 112.4ZM168.9 110.5L170.0 112.8L168.1 114.9L167.0 112.6ZM149.4 113.0L150.4 114.9L148.5 116.6L147.6 114.7ZM152.2 113.3L153.2 115.3L151.3 116.9L150.4 114.9ZM155.0 113.8L156.0 115.9L154.1 117.3L153.2 115.3ZM159.5 113.0L160.5 115.2L158.8 116.5L157.7 114.4Z" fill="#204bf5" stroke="#204bf5" stroke-width="0.4"/>
<path d="M129.7 100.4L130.5 102.6L128.5 104.7L127.7 102.5ZM133.9 104.5L134.8 106.3L132.9 108.2L132.0 106.3ZM134.8 106.3L135.7 108.2L133.8 110.0L132.9 108.2ZM138.4 108.4L139.5 110.2L137.6 112.0L136.6 110.1ZM139.5 110.2L140.5 112.1L138.6 113.9L137.6 112.0ZM140.5 112.1L141.6 114.1L139.7 115.8L138.6 113.9ZM144.6 114.4L145.7 116.4L143.8 118.1L142.7 116.1ZM145.7 116.4L146.6 118.2L144.7 119.9L143.8 118.1ZM148.5 116.6L149.5 118.5L147.6 120.1L146.6 118.2ZM151.3 116.9L152.3 118.8L150.4 120.4L149.5 118.5ZM149.5 118.5L150.4 120.4L148.5 121.9L147.6 120.1ZM154.1 117.3L155.1 119.4L153.3 120.9L152.3 118.8ZM152.3 118.8L153.3 120.9L151.4 122.3L150.4 120.4ZM160.5 115.2L161.6 117.4L159.8 118.7L158.8 116.5ZM158.8 116.5L159.8 118.7L158.0 120.1L157.0 118.0ZM157.0 118.0L158.0 120.1L156.1 121.5L155.1 119.4Z" fill="#2042f4" stroke="#2042f4" stroke-width="0.4"/>
<path d="M194.1 50.5L195.6 52.5L193.5 53.6L192.0 51.6ZM192.0 51.6L193.5 53.6L191.3 54.7L189.9 52.7Z" fill="#67f033" stroke="#67f033" stroke-width="0.4"/>
<path d="M132.2 100.9L133.0 102.7L131.2 104.6L130.4 102.8ZM133.0 102.7L133.9 104.5L132.0 106.3L131.2 104.6ZM136.6 104.6L137.5 106.5L135.7 108.2L134.8 106.3ZM137.5 106.5L138.4 108.4L136.6 110.1L135.7 108.2ZM141.3 108.5L142.4 110.4L140.5 112.1L139.5 110.2ZM142.4 110.4L143.5 112.4L141.6 114.1L140.5 112.1ZM143.5 112.4L144.6 114.4L142.7 116.1L141.6 114.1ZM167.0 112.6L168.1 114.9L166.1 117.1L165.1 114.8ZM147.6 114.7L148.5 116.6L146.6 118.2L145.7 116.4ZM150.4 114.9L151.3 116.9L149.5 118.5L148.5 116.6ZM153.2 115.3L154.1 117.3L152.3 118.8L151.3 116.9ZM157.7 114.4L158.8 116.5L157.0 118.0L156.0 115.9ZM156.0 115.9L157.0 118.0L155.1 119.4L154.1 117.3ZM164.0 112.4L165.1 114.8L163.3 116.1L162.3 113.8ZM162.3 113.8L163.3 116.1L161.6 117.4L160.5 115.2Z" fill="#2046f4" stroke="#2046f4" stroke-width="0.4"/>
<path d="M130.4 102.8L131.2 104.6L129.3 106.4L128.5 104.7ZM131.2 104.6L132.0 106.3L130.2 108.2L129.3 106.4ZM135.7 108.2L136.6 110.1L134.7 111.9L133.8 110.0ZM136.6 110.1L137.6 112.0L135.7 113.8L134.7 111.9ZM141.6 114.1L142.7 116.1L140.8 117.8L139.7 115.8ZM142.7 116.1L143.8 118.1L141.9 119.9L140.8 117.8ZM143.8 118.1L144.7 119.9L142.8 121.6L141.9 119.9ZM146.6 118.2L147.6 120.1L145.6 121.7L144.7 119.9ZM144.7 119.9L145.6 121.7L143.7 123.3L142.8 121.6ZM147.6 120.1L148.5 121.9L146.6 123.5L145.6 121.7ZM150.4 120.4L151.4 122.3L149.5 123.8L148.5 121.9ZM155.1 119.4L156.1 121.5L154.3 122.9L153.3 120.9ZM153.3 120.9L154.3 122.9L152.4 124.3L151.4 122.3ZM165.1 114.8L166.1 117.1L164.4 118.4L163.3 116.1ZM163.3 116.1L164.4 118.4L162.6 119.7L161.6 117.4ZM161.6 117.4L162.6 119.7L160.8 121.0L159.8 118.7ZM159.8 118.7L160.8 121.0L159.0 122.3L158.0 120.1Z" fill="#203df3" stroke="#203df3" stroke-width="0.4"/>
<path d="M132.0 106.3L132.9 108.2L131.0 110.0L130.2 108.2ZM132.9 108.2L133.8 110.0L131.9 111.8L131.0 110.0ZM137.6 112.0L138.6 113.9L136.7 115.7L135.7 113.8ZM138.6 113.9L139.7 115.8L137.8 117.6L136.7 115.7ZM139.7 115.8L140.8 117.8L138.9 119.6L137.8 117.6ZM140.8 117.8L141.9 119.9L140.0 121.7L138.9 119.6ZM141.9 119.9L142.8 121.6L140.8 123.3L140.0 121.7ZM142.8 121.6L143.7 123.3L141.7 125.0L140.8 123.3ZM145.6 121.7L146.6 123.5L144.6 125.1L143.7 123.3ZM148.5 121.9L149.5 123.8L147.5 125.4L146.6 123.5ZM146.6 123.5L147.5 125.4L145.6 126.9L144.6 125.1ZM151.4 122.3L152.4 124.3L150.5 125.8L149.5 123.8ZM149.5 123.8L150.5 125.8L148.5 127.3L147.5 125.4ZM158.0 120.1L159.0 122.3L157.2 123.6L156.1 121.5ZM156.1 121.5L157.2 123.6L155.3 125.0L154.3 122.9ZM154.3 122.9L155.3 125.0L153.4 126.4L152.4 124.3ZM152.4 124.3L153.4 126.4L151.5 127.8L150.5 125.8Z" fill="#2039f2" stroke="#2039f2" stroke-width="0.4"/>
<path d="M133.8 110.0L134.7 111.9L132.8 113.7L131.9 111.8ZM134.7 111.9L135.7 113.8L133.8 115.6L132.8 113.7ZM135.7 113.8L136.7 115.7L134.8 117.5L133.8 115.6ZM136.7 115.7L137.8 117.6L135.8 119.4L134.8 117.5ZM137.8 117.6L138.9 119.6L136.9 121.4L135.8 119.4ZM138.9 119.6L140.0 121.7L138.0 123.5L136.9 121.4ZM140.0 121.7L140.8 123.3L138.8 125.1L138.0 123.5ZM140.8 123.3L141.7 125.0L139.7 126.7L138.8 125.1ZM143.7 123.3L144.6 125.1L142.6 126.7L141.7 125.0ZM141.7 125.0L142.6 126.7L140.6 128.4L139.7 126.7ZM144.6 125.1L145.6 126.9L143.5 128.5L142.6 126.7ZM142.6 126.7L143.5 128.5L141.5 130.1L140.6 128.4ZM147.5 125.4L148.5 127.3L146.5 128.8L145.6 126.9ZM145.6 126.9L146.5 128.8L144.5 130.3L143.5 128.5ZM143.5 128.5L144.5 130.3L142.4 131.8L141.5 130.1ZM150.5 125.8L151.5 127.8L149.5 129.2L148.5 127.3ZM148.5 127.3L149.5 129.2L147.5 130.7L146.5 128.8ZM146.5 128.8L147.5 130.7L145.5 132.1L144.5 130.3Z" fill="#2034f1" stroke="#2034f1" stroke-width="0.4"/>
<path d="M144.5 130.3L145.5 132.1L143.4 133.6L142.4 131.8Z" fill="#2030f0" stroke="#2030f0" stroke-width="0.4"/>
</g>
</svg>
<div class="a" style="left:658.8px;top:330.8px;height:7px;line-height:7px;font-size:5.9px;color:#101010">17,5</div>
<div class="a" style="left:658.8px;top:338.9px;height:7px;line-height:7px;font-size:5.9px;color:#101010">15,0</div>
<div class="a" style="left:658.8px;top:346.8px;height:7px;line-height:7px;font-size:5.9px;color:#101010">12,5</div>
<div class="a" style="left:658.8px;top:355.2px;height:7px;line-height:7px;font-size:5.9px;color:#101010">10,0</div>
<div class="a" style="left:658.8px;top:363.1px;height:7px;line-height:7px;font-size:5.9px;color:#101010">7,5</div>
<div class="a c" style="left:652.3px;top:354.7px;width:80px;height:7px;line-height:7px;font-size:5.5px;font-weight:bold;color:#101010;transform:rotate(-90deg)">Main Target AFR (AFR)</div>
<div class="a c" style="left:585.6px;top:424.0px;width:80px;height:7px;line-height:7px;font-size:5.7px;font-weight:bold;color:#101010;transform:rotate(-35deg)">Load (Load %)</div>
<div class="a c" style="left:445.6px;top:391.5px;width:80px;height:7px;line-height:7px;font-size:5.3px;font-weight:bold;color:#101010;transform:rotate(65.5deg)">RPM (rpmx1000)</div>
<div class="a c" style="left:456.5px;top:364.0px;width:80px;height:7px;line-height:7px;font-size:5.9px;font-weight:normal;color:#101010;transform:rotate(-20deg)">2,5</div>
<div class="a c" style="left:465.3px;top:384.3px;width:80px;height:7px;line-height:7px;font-size:5.9px;font-weight:normal;color:#101010;transform:rotate(-20deg)">5,0</div>
<div class="a c" style="left:478.5px;top:415.0px;width:80px;height:7px;line-height:7px;font-size:5.9px;font-weight:normal;color:#101010;transform:rotate(-20deg)">7,5</div>
<div class="a c" style="left:535.0px;top:436.2px;width:80px;height:7px;line-height:7px;font-size:5.9px;font-weight:normal;color:#101010;transform:rotate(58deg)">125</div>
<div class="a c" style="left:561.7px;top:416.9px;width:80px;height:7px;line-height:7px;font-size:5.9px;font-weight:normal;color:#101010;transform:rotate(58deg)">100</div>
<div class="a c" style="left:580.6px;top:400.6px;width:80px;height:7px;line-height:7px;font-size:5.9px;font-weight:normal;color:#101010;transform:rotate(58deg)">75</div>
<div class="a c" style="left:597.9px;top:387.5px;width:80px;height:7px;line-height:7px;font-size:5.9px;font-weight:normal;color:#101010;transform:rotate(58deg)">50</div>
<div class="a c" style="left:611.6px;top:377.1px;width:80px;height:7px;line-height:7px;font-size:5.9px;font-weight:normal;color:#101010;transform:rotate(58deg)">25</div>
<!-- plot scrollbars -->
<div class="a" style="left:731.8px;top:303.4px;width:8px;height:160px;background:#f2f2f2;border-left:0.5px solid #bbb"></div>
<div class="a" style="left:732.4px;top:417.6px;width:7px;height:7.6px;background:linear-gradient(90deg,#e8e8e8,#c8c8c8);border:0.5px solid #9a9a9a;border-radius:1px"></div>
<div class="a" style="left:733.8px;top:306px;font-size:3px;color:#222">&#9650;</div>
<div class="a" style="left:733.8px;top:457px;font-size:3px;color:#222">&#9660;</div>
<div class="a" style="left:406.6px;top:463.3px;width:333.2px;height:8px;background:#f2f2f2;border-top:0.5px solid #bbb"></div>
<div class="a" style="left:612.4px;top:464px;width:7.6px;height:7px;background:linear-gradient(#e8e8e8,#c8c8c8);border:0.5px solid #9a9a9a;border-radius:1px"></div>
<div class="a" style="left:409.6px;top:465px;font-size:3px;color:#222">&#9664;</div>
<div class="a" style="left:726.4px;top:465px;font-size:3px;color:#222">&#9654;</div>
<div class="a" style="left:742px;top:63.2px;width:3.4px;height:412px;background:#6a6a6a"></div>

<!-- Dash board panel -->
<div class="a" style="left:745.4px;top:63.2px;width:154.6px;height:412px;background:#737373"></div>
<div class="a phead" style="left:746px;top:65px;width:152.4px"><span class="a" style="left:9.4px">Dash Board</span>
 <div class="a" style="left:1.6px;top:1.8px;width:6.6px;height:6.6px;border-radius:50%;background:radial-gradient(circle at 45% 45%,#d02020 0 22%,#1a1a1a 30%)"></div>
 <div class="a" style="left:135.6px;top:2.6px;width:2.2px;height:3.2px;border:0.5px solid #c4c4c4;border-bottom-width:0.8px"></div><div class="a" style="left:136.3px;top:6px;width:0.6px;height:2px;background:#c4c4c4"></div>
 <svg class="a" style="left:143.4px;top:3px" width="4.4" height="4.4" viewBox="0 0 4.4 4.4"><path d="M0.4 0.4L4 4M4 0.4L0.4 4" stroke="#d0d0d0" stroke-width="0.9"/></svg>
</div>
<div class="a" style="left:762px;top:82.8px;font-size:5.2px;color:#f6f6f6">Choose Template</div>
<div class="a white" style="left:816.4px;top:80.2px;width:56.4px;height:8.4px;border:0.5px solid #a0a0a0;color:#2a2a2a;font-size:5.2px;line-height:7.6px;padding-left:1.4px">Fuel Advanced</div>
<div class="a" style="left:873.2px;top:80.2px;width:7.4px;height:8.4px;background:linear-gradient(#c4c4c4,#9c9c9c);border:0.5px solid #8c8c8c"></div>
<div class="a" style="left:875.2px;top:82.6px;font-size:3.2px;color:#333">&#9660;</div>
<div class="a" style="left:746.2px;top:91.3px;width:151.4px;height:369px;background:#f4f4f4;border:0.5px solid #5c5c5c"></div>

<svg class="a" style="left:747.1px;top:91.3px" width="73.2" height="73.2" viewBox="-36.6 -36.6 73.2 73.2"><defs><radialGradient id="gEngineRPM" cx="0.5" cy="0.5" r="0.5"><stop offset="0" stop-color="#101010"/><stop offset="0.86" stop-color="#0c0c0c"/><stop offset="0.9" stop-color="#383838"/><stop offset="0.96" stop-color="#2a2a2a"/><stop offset="1" stop-color="#141414"/></radialGradient><linearGradient id="gEngineRPMs" x1="0" y1="0" x2="0" y2="1"><stop offset="0" stop-color="#3c3c3c"/><stop offset="1" stop-color="#262626"/></linearGradient></defs><circle r="35.6" fill="url(#gEngineRPM)"/><path d="M-30.46 -3.06A30.62 30.62 0 0 1 30.46 -3.06Q0 3.67 -30.46 -3.06Z" fill="url(#gEngineRPMs)" opacity="0.75"/><path d="M-21.22 21.22L-19.48 19.48" stroke="#bbb" stroke-width="0.5"/><text x="-16.02" y="17.12" font-size="2.9" font-style="italic" font-weight="bold" fill="#c4c4c4" text-anchor="middle" font-family="Liberation Sans, sans-serif">0</text><path d="M-28.54 9.27L-26.21 8.51" stroke="#bbb" stroke-width="0.5"/><text x="-21.55" y="8.10" font-size="2.9" font-style="italic" font-weight="bold" fill="#c4c4c4" text-anchor="middle" font-family="Liberation Sans, sans-serif">1</text><path d="M-29.63 -4.69L-27.22 -4.31" stroke="#bbb" stroke-width="0.5"/><text x="-22.38" y="-2.44" font-size="2.9" font-style="italic" font-weight="bold" fill="#c4c4c4" text-anchor="middle" font-family="Liberation Sans, sans-serif">2</text><path d="M-24.27 -17.64L-22.29 -16.20" stroke="#bbb" stroke-width="0.5"/><text x="-18.33" y="-12.22" font-size="2.9" font-style="italic" font-weight="bold" fill="#c4c4c4" text-anchor="middle" font-family="Liberation Sans, sans-serif">3</text><path d="M-13.62 -26.73L-12.51 -24.55" stroke="#bbb" stroke-width="0.5"/><text x="-10.29" y="-19.09" font-size="2.9" font-style="italic" font-weight="bold" fill="#c4c4c4" text-anchor="middle" font-family="Liberation Sans, sans-serif">4</text><path d="M0.00 -30.00L0.00 -27.55" stroke="#bbb" stroke-width="0.5"/><text x="0.00" y="-21.56" font-size="2.9" font-style="italic" font-weight="bold" fill="#c4c4c4" text-anchor="middle" font-family="Liberation Sans, sans-serif">5</text><path d="M13.62 -26.73L12.51 -24.55" stroke="#bbb" stroke-width="0.5"/><text x="10.29" y="-19.09" font-size="2.9" font-style="italic" font-weight="bold" fill="#c4c4c4" text-anchor="middle" font-family="Liberation Sans, sans-serif">6</text><path d="M24.27 -17.64L22.29 -16.20" stroke="#bbb" stroke-width="0.5"/><text x="18.33" y="-12.22" font-size="2.9" font-style="italic" font-weight="bold" fill="#c4c4c4" text-anchor="middle" font-family="Liberation Sans, sans-serif">7</text><path d="M29.63 -4.69L27.22 -4.31" stroke="#bbb" stroke-width="0.5"/><text x="22.38" y="-2.44" font-size="2.9" font-style="italic" font-weight="bold" fill="#c4c4c4" text-anchor="middle" font-family="Liberation Sans, sans-serif">8</text><path d="M28.54 9.27L26.21 8.51" stroke="#bbb" stroke-width="0.5"/><text x="21.55" y="8.10" font-size="2.9" font-style="italic" font-weight="bold" fill="#c4c4c4" text-anchor="middle" font-family="Liberation Sans, sans-serif">9</text><path d="M21.22 21.22L19.48 19.48" stroke="#bbb" stroke-width="0.5"/><text x="16.02" y="17.12" font-size="2.9" font-style="italic" font-weight="bold" fill="#c4c4c4" text-anchor="middle" font-family="Liberation Sans, sans-serif">10</text><text x="0" y="-7.6" font-size="5" font-style="italic" font-weight="bold" fill="#e8e8e8" text-anchor="middle" letter-spacing="0.35" font-family="Liberation Sans, sans-serif">Engine RPM</text><text x="0" y="11.8" font-size="4.6" font-style="italic" font-weight="bold" fill="#e0e0e0" text-anchor="middle" letter-spacing="0.3" font-family="Liberation Sans, sans-serif">rpmx1000</text><circle r="2.6" fill="#1c2420"/><path d="M1.80 -4.30L3.60 -3.50L-13.40 24.60Z" fill="#f05a10" stroke="#f05a10" stroke-width="0.3"/></svg>
<svg class="a" style="left:824.6px;top:93.4px" width="72.4" height="72.4" viewBox="-36.2 -36.2 72.4 72.4"><defs><radialGradient id="gTPS" cx="0.5" cy="0.5" r="0.5"><stop offset="0" stop-color="#101010"/><stop offset="0.86" stop-color="#0c0c0c"/><stop offset="0.9" stop-color="#383838"/><stop offset="0.96" stop-color="#2a2a2a"/><stop offset="1" stop-color="#141414"/></radialGradient><linearGradient id="gTPSs" x1="0" y1="0" x2="0" y2="1"><stop offset="0" stop-color="#3c3c3c"/><stop offset="1" stop-color="#262626"/></linearGradient></defs><circle r="35.2" fill="url(#gTPS)"/><path d="M-30.12 -3.03A30.27 30.27 0 0 1 30.12 -3.03Q0 3.63 -30.12 -3.03Z" fill="url(#gTPSs)" opacity="0.75"/><path d="M-20.98 20.98L-19.26 19.26" stroke="#bbb" stroke-width="0.5"/><text x="-15.84" y="16.94" font-size="2.9" font-style="italic" font-weight="bold" fill="#c4c4c4" text-anchor="middle" font-family="Liberation Sans, sans-serif">0</text><path d="M-28.21 9.17L-25.91 8.42" stroke="#bbb" stroke-width="0.5"/><text x="-21.30" y="8.02" font-size="2.9" font-style="italic" font-weight="bold" fill="#c4c4c4" text-anchor="middle" font-family="Liberation Sans, sans-serif">10</text><path d="M-29.30 -4.64L-26.91 -4.26" stroke="#bbb" stroke-width="0.5"/><text x="-22.13" y="-2.40" font-size="2.9" font-style="italic" font-weight="bold" fill="#c4c4c4" text-anchor="middle" font-family="Liberation Sans, sans-serif">20</text><path d="M-24.00 -17.44L-22.04 -16.01" stroke="#bbb" stroke-width="0.5"/><text x="-18.12" y="-12.07" font-size="2.9" font-style="italic" font-weight="bold" fill="#c4c4c4" text-anchor="middle" font-family="Liberation Sans, sans-serif">30</text><path d="M-13.47 -26.43L-12.37 -24.28" stroke="#bbb" stroke-width="0.5"/><text x="-10.17" y="-18.86" font-size="2.9" font-style="italic" font-weight="bold" fill="#c4c4c4" text-anchor="middle" font-family="Liberation Sans, sans-serif">40</text><path d="M0.00 -29.67L0.00 -27.24" stroke="#bbb" stroke-width="0.5"/><text x="0.00" y="-21.30" font-size="2.9" font-style="italic" font-weight="bold" fill="#c4c4c4" text-anchor="middle" font-family="Liberation Sans, sans-serif">50</text><path d="M13.47 -26.43L12.37 -24.28" stroke="#bbb" stroke-width="0.5"/><text x="10.17" y="-18.86" font-size="2.9" font-style="italic" font-weight="bold" fill="#c4c4c4" text-anchor="middle" font-family="Liberation Sans, sans-serif">60</text><path d="M24.00 -17.44L22.04 -16.01" stroke="#bbb" stroke-width="0.5"/><text x="18.12" y="-12.07" font-size="2.9" font-style="italic" font-weight="bold" fill="#c4c4c4" text-anchor="middle" font-family="Liberation Sans, sans-serif">70</text><path d="M29.30 -4.64L26.91 -4.26" stroke="#bbb" stroke-width="0.5"/><text x="22.13" y="-2.40" font-size="2.9" font-style="italic" font-weight="bold" fill="#c4c4c4" text-anchor="middle" font-family="Liberation Sans, sans-serif">80</text><path d="M28.21 9.17L25.91 8.42" stroke="#bbb" stroke-width="0.5"/><text x="21.30" y="8.02" font-size="2.9" font-style="italic" font-weight="bold" fill="#c4c4c4" text-anchor="middle" font-family="Liberation Sans, sans-serif">90</text><path d="M20.98 20.98L19.26 19.26" stroke="#bbb" stroke-width="0.5"/><text x="15.84" y="16.94" font-size="2.9" font-style="italic" font-weight="bold" fill="#c4c4c4" text-anchor="middle" font-family="Liberation Sans, sans-serif">100</text><text x="0" y="-6.6" font-size="4.4" font-style="italic" font-weight="bold" fill="#e8e8e8" text-anchor="middle" letter-spacing="0.35" font-family="Liberation Sans, sans-serif">TPS</text><text x="0" y="12.6" font-size="4.6" font-style="italic" font-weight="bold" fill="#e0e0e0" text-anchor="middle" letter-spacing="0.3" font-family="Liberation Sans, sans-serif">%</text><circle r="2.6" fill="#1c2420"/><path d="M1.00 -3.60L2.80 -2.80L-14.70 26.00Z" fill="#f05a10" stroke="#f05a10" stroke-width="0.3"/></svg>
<div class="a" style="left:753.4px;top:165.9px;font-size:2.8px;color:#888">Param 1</div><div class="a" style="left:803.8px;top:165.9px;font-size:2.8px;color:#888">Param x1</div><div class="a" style="left:755.8px;top:171.3px;width:60.6px;height:21.2px;border-radius:1.6px;background:linear-gradient(#4c4c4c,#3a3a3a 42%,#050505 48%,#000);border:0.5px solid #222;box-shadow:0 0 0.6px #000"></div><div class="a" style="left:759.8px;top:175.5px;font-family:'DejaVu Sans Mono','Liberation Mono',monospace;font-size:15.4px;line-height:13px;font-weight:normal;letter-spacing:0.9px;transform-origin:0 0;color:rgba(110,110,110,.22);transform:scaleX(0.9)">88</div><div class="a" style="left:781.4px;top:176.2px;font-family:'DejaVu Sans Mono','Liberation Mono',monospace;font-size:15.4px;line-height:13px;font-weight:normal;letter-spacing:0.9px;transform-origin:0 0;color:#34ff44;text-shadow:0 0 1.2px #20e030,0 0 0.5px #30ff40;transform:scaleX(1.04)">000</div>
<div class="a" style="left:828.6px;top:165.9px;font-size:2.8px;color:#888">Param 2</div><div class="a" style="left:879.0px;top:165.9px;font-size:2.8px;color:#888">Param x1</div><div class="a" style="left:831.0px;top:171.3px;width:60.6px;height:21.2px;border-radius:1.6px;background:linear-gradient(#4c4c4c,#3a3a3a 42%,#050505 48%,#000);border:0.5px solid #222;box-shadow:0 0 0.6px #000"></div><div class="a" style="left:835.0px;top:175.5px;font-family:'DejaVu Sans Mono','Liberation Mono',monospace;font-size:15.4px;line-height:13px;font-weight:normal;letter-spacing:0.9px;transform-origin:0 0;color:rgba(110,110,110,.22);transform:scaleX(0.9)">88</div><div class="a" style="left:856.6px;top:176.2px;font-family:'DejaVu Sans Mono','Liberation Mono',monospace;font-size:15.4px;line-height:13px;font-weight:normal;letter-spacing:0.9px;transform-origin:0 0;color:#34ff44;text-shadow:0 0 1.2px #20e030,0 0 0.5px #30ff40;transform:scaleX(1.04)">000</div>
<div class="a" style="left:753.4px;top:195.6px;font-size:2.8px;color:#888">Param 3</div><div class="a" style="left:803.8px;top:195.6px;font-size:2.8px;color:#888">Param x2</div><div class="a" style="left:755.8px;top:201.0px;width:60.6px;height:21.2px;border-radius:1.6px;background:linear-gradient(#4c4c4c,#3a3a3a 42%,#050505 48%,#000);border:0.5px solid #222;box-shadow:0 0 0.6px #000"></div><div class="a" style="left:759.8px;top:205.2px;font-family:'DejaVu Sans Mono','Liberation Mono',monospace;font-size:15.4px;line-height:13px;font-weight:normal;letter-spacing:0.9px;transform-origin:0 0;color:rgba(110,110,110,.22);transform:scaleX(0.9)">88</div><div class="a" style="left:781.4px;top:205.9px;font-family:'DejaVu Sans Mono','Liberation Mono',monospace;font-size:15.4px;line-height:13px;font-weight:normal;letter-spacing:0.9px;transform-origin:0 0;color:#34ff44;text-shadow:0 0 1.2px #20e030,0 0 0.5px #30ff40;transform:scaleX(1.04)">000</div>
<div class="a" style="left:828.6px;top:195.6px;font-size:2.8px;color:#888">Param 4</div><div class="a" style="left:879.0px;top:195.6px;font-size:2.8px;color:#888">Param x2</div><div class="a" style="left:831.0px;top:201.0px;width:60.6px;height:21.2px;border-radius:1.6px;background:linear-gradient(#4c4c4c,#3a3a3a 42%,#050505 48%,#000);border:0.5px solid #222;box-shadow:0 0 0.6px #000"></div><div class="a" style="left:835.0px;top:205.2px;font-family:'DejaVu Sans Mono','Liberation Mono',monospace;font-size:15.4px;line-height:13px;font-weight:normal;letter-spacing:0.9px;transform-origin:0 0;color:rgba(110,110,110,.22);transform:scaleX(0.9)">88</div><div class="a" style="left:856.6px;top:205.9px;font-family:'DejaVu Sans Mono','Liberation Mono',monospace;font-size:15.4px;line-height:13px;font-weight:normal;letter-spacing:0.9px;transform-origin:0 0;color:#34ff44;text-shadow:0 0 1.2px #20e030,0 0 0.5px #30ff40;transform:scaleX(1.04)">000</div>
<div class="a" style="left:753.4px;top:225.0px;font-size:2.8px;color:#888">Param 5</div><div class="a" style="left:803.8px;top:225.0px;font-size:2.8px;color:#888">Param x3</div><div class="a" style="left:755.8px;top:230.4px;width:60.6px;height:21.2px;border-radius:1.6px;background:linear-gradient(#4c4c4c,#3a3a3a 42%,#050505 48%,#000);border:0.5px solid #222;box-shadow:0 0 0.6px #000"></div><div class="a" style="left:759.8px;top:234.6px;font-family:'DejaVu Sans Mono','Liberation Mono',monospace;font-size:15.4px;line-height:13px;font-weight:normal;letter-spacing:0.9px;transform-origin:0 0;color:rgba(110,110,110,.22);transform:scaleX(0.9)">88</div><div class="a" style="left:781.4px;top:235.3px;font-family:'DejaVu Sans Mono','Liberation Mono',monospace;font-size:15.4px;line-height:13px;font-weight:normal;letter-spacing:0.9px;transform-origin:0 0;color:#34ff44;text-shadow:0 0 1.2px #20e030,0 0 0.5px #30ff40;transform:scaleX(1.04)">000</div>
<div class="a" style="left:828.6px;top:225.0px;font-size:2.8px;color:#888">Param 6</div><div class="a" style="left:879.0px;top:225.0px;font-size:2.8px;color:#888">Param x3</div><div class="a" style="left:831.0px;top:230.4px;width:60.6px;height:21.2px;border-radius:1.6px;background:linear-gradient(#4c4c4c,#3a3a3a 42%,#050505 48%,#000);border:0.5px solid #222;box-shadow:0 0 0.6px #000"></div><div class="a" style="left:835.0px;top:234.6px;font-family:'DejaVu Sans Mono','Liberation Mono',monospace;font-size:15.4px;line-height:13px;font-weight:normal;letter-spacing:0.9px;transform-origin:0 0;color:rgba(110,110,110,.22);transform:scaleX(0.9)">88</div><div class="a" style="left:856.6px;top:235.3px;font-family:'DejaVu Sans Mono','Liberation Mono',monospace;font-size:15.4px;line-height:13px;font-weight:normal;letter-spacing:0.9px;transform-origin:0 0;color:#34ff44;text-shadow:0 0 1.2px #20e030,0 0 0.5px #30ff40;transform:scaleX(1.04)">000</div>
<!-- bottom tabs of dashboard -->
<div class="a" style="left:747.6px;top:461px;width:44.8px;height:11.4px;background:#8c8c8c;border:0.5px solid #a0a0a0;border-top:0"></div>
<div class="a" style="left:752.4px;top:463.4px;width:6.4px;height:6.4px;border-radius:50%;background:radial-gradient(circle at 45% 45%,#d02020 0 22%,#1a1a1a 30%)"></div>
<div class="a" style="left:761px;top:464px;font-size:5px;color:#f4f4f4">Dash Board</div>
<div class="a" style="left:798px;top:463.6px;width:6px;height:6.2px;background:#e8e8e8;border:0.4px solid #999"><div class="a" style="left:1.6px;top:1.8px;width:3.6px;height:3.6px;border-radius:50%;background:radial-gradient(circle,#c02020 0 25%,#222 35%)"></div></div>
<div class="a" style="left:806.6px;top:464px;font-size:5px;color:#f4f4f4">Live Data</div>

<!-- status bar -->
<div class="a" style="left:0;top:473px;width:900px;height:14.4px;background:linear-gradient(#6a6a6a,#505050 16%,#343434 24%,#2e2e2e 60%,#292929)"></div>
<div class="a" style="left:2.4px;top:479px;font-size:5px;color:#ececec">Ready</div>
<div class="a" style="left:189.8px;top:479px;font-size:5px;color:#ececec">C3 Device Network Disconnected</div>
<div class="a" style="left:270.8px;top:479px;font-size:5px;color:#ececec">No C3 Devices Connected</div>
<div class="a" style="left:842.8px;top:478.6px;width:6.2px;height:6.2px;border-radius:50%;background:radial-gradient(circle at 45% 35%,#d8d8d8,#8a8a8a 60%,#5c5c5c)"></div>
<div class="a" style="left:852.4px;top:479px;font-size:5px;color:#ececec">Device Errors --</div>
<!-- taskbar -->
<div id="task" class="a"></div>
<div class="a" style="left:0;top:487.2px;width:900px;height:0.7px;background:rgba(60,70,90,.55)"></div>
<div class="a" style="left:4.6px;top:489.6px;width:15.6px;height:15.6px;border-radius:50%;background:radial-gradient(circle at 50% 35%,#7fb2e6,#2c64b4 55%,#163c7c);box-shadow:0 0 1.6px 0.6px rgba(220,235,255,.8)"></div>
<div class="a" style="left:8.6px;top:493.2px;width:3.4px;height:3.4px;background:#e8582c;border-radius:1.2px 0.4px 0.4px 0.4px;transform:skewY(-6deg)"></div>
<div class="a" style="left:12.6px;top:492.8px;width:3.6px;height:3.4px;background:#8cc63c;border-radius:0.4px 1.2px 0.4px 0.4px;transform:skewY(6deg)"></div>
<div class="a" style="left:8.6px;top:497.4px;width:3.4px;height:3.4px;background:#3c9ce0;border-radius:0.4px 0.4px 0.4px 1.2px;transform:skewY(-6deg)"></div>
<div class="a" style="left:12.6px;top:497.2px;width:3.6px;height:3.6px;background:#f8cc30;border-radius:0.4px 0.4px 1.2px 0.4px;transform:skewY(6deg)"></div>

<div class="a tb" style="left:28px;width:66.7px;"><span style="left:21.3px">Neuer Ordner</span></div>
<div class="a" style="left:33.4px;top:490.6px;width:6.6px;height:12.6px;background:linear-gradient(90deg,#e8c868,#f6e4a0);border:0.4px solid #c8a040;border-radius:0.8px;transform:skewY(-8deg)"></div><div class="a" style="left:37.8px;top:491.2px;width:6.2px;height:12.2px;background:linear-gradient(90deg,#fbeeb4,#f0d070);border:0.4px solid #d0a848;border-radius:0.8px;transform:skewY(6deg)"></div>
<div class="a tb" style="left:96px;width:65.9px;"><span style="left:20.8px">Dropbox</span></div>
<div class="a" style="left:101.4px;top:490.6px;width:6.6px;height:12.6px;background:linear-gradient(90deg,#e8c868,#f6e4a0);border:0.4px solid #c8a040;border-radius:0.8px;transform:skewY(-8deg)"></div><div class="a" style="left:105.80000000000001px;top:491.2px;width:6.2px;height:12.2px;background:linear-gradient(90deg,#fbeeb4,#f0d070);border:0.4px solid #d0a848;border-radius:0.8px;transform:skewY(6deg)"></div>
<div class="a tb" style="left:163.2px;width:66.7px;"><span style="left:20.8px">Videos von Ad...</span></div>
<div class="a" style="left:169.4px;top:490.6px;width:6.6px;height:12.6px;background:linear-gradient(90deg,#e8c868,#f6e4a0);border:0.4px solid #c8a040;border-radius:0.8px;transform:skewY(-8deg)"></div><div class="a" style="left:173.8px;top:491.2px;width:6.2px;height:12.2px;background:linear-gradient(90deg,#fbeeb4,#f0d070);border:0.4px solid #d0a848;border-radius:0.8px;transform:skewY(6deg)"></div>
<div class="a" style="left:239.6px;top:490.8px;width:12.8px;height:12.8px;border-radius:50%;background:conic-gradient(from -60deg,#e04030 0 120deg,#f8c828 120deg 240deg,#38a848 240deg 360deg)"></div><div class="a" style="left:243px;top:494.2px;width:6px;height:6px;border-radius:50%;background:#4888e8;border:1px solid #f4f4f4"></div>
<div class="a" style="left:268px;top:491.2px;width:12.2px;height:12.2px;background:#141414"></div><div class="a" style="left:270.6px;top:493.4px;width:7px;height:7.6px;border-radius:50%;border:1px solid #f0f0f0;border-left-color:transparent;transform:rotate(25deg)"></div><div class="a" style="left:272.8px;top:493px;width:1.2px;height:8.4px;background:#f0f0f0;transform:rotate(28deg)"></div>
<div class="a" style="left:297.4px;top:490.6px;width:8.6px;height:7.4px;background:linear-gradient(135deg,#2858d8,#1838a8);border:0.5px solid #d8e0f0;transform:skewY(8deg)"></div><div class="a" style="left:299px;top:498.6px;width:6px;height:3px;background:#d8d8d8;border-radius:0.6px"></div><div class="a" style="left:303.6px;top:498px;width:5.4px;height:5.4px;border-radius:50%;background:#e8f0e0;border:0.5px solid #888"></div><div class="a" style="left:305px;top:499.4px;width:2.6px;height:2.6px;border-radius:50%;background:#38a838"></div>
<div class="a tb" style="left:320.7px;width:64.0px;"><span style="left:18.6px">PV CX</span></div>
<div class="a" style="left:322.6px;top:490.4px;width:13.2px;height:13.2px;background:#2c2008;border:0.8px solid #e8a818;color:#f0b020;font-size:8.6px;font-weight:bold;line-height:11.4px;text-align:center;letter-spacing:-0.2px">Br</div>
<div class="a tb" style="left:387.3px;width:65.9px;"><span style="left:20.0px">PV-CX-Indian_...</span></div>
<div class="a" style="left:391.2px;top:490.4px;width:12.8px;height:13.2px;background:#101c6c;border:0.8px solid #7c98f8;color:#8cb0ff;font-size:8.6px;font-weight:bold;line-height:11.4px;text-align:center;letter-spacing:-0.2px">Ps</div>
<div class="a tb" style="left:455.3px;width:66.2px;"><span style="left:20.8px">Gripone_2014.i...</span></div>
<div class="a" style="left:459.4px;top:490.4px;width:14px;height:13.2px;background:#480828;border:0.8px solid #f0389c;color:#ff48a8;font-size:8.6px;font-weight:bold;line-height:11.4px;text-align:center;letter-spacing:-0.2px">Id</div>
<div class="a tb" style="left:523.3px;width:65.4px;"><span style="left:20.6px">Reflash Power ...</span></div>
<svg class="a" style="left:528.4px;top:490.4px" width="13" height="13" viewBox="0 0 13 13"><path d="M6.5 0.8L12.2 11.8H0.8Z" fill="#c8c8c8" stroke="#555" stroke-width="0.8"/><path d="M6.5 4L9.6 10.4H3.4Z" fill="#e8e8e8" stroke="#777" stroke-width="0.5"/><circle cx="6.5" cy="8" r="1.5" fill="#d02020"/></svg>
<div class="a tb" style="left:590.5px;width:66.2px;background:linear-gradient(rgba(255,255,255,.62),rgba(255,255,255,.42) 48%,rgba(255,255,255,.24) 52%,rgba(255,255,255,.4));"><span style="left:21.6px">C3 Tuning Soft...</span></div>
<div class="a" style="left:595.2px;top:489.6px;font-size:14px;font-weight:bold;font-style:italic;color:#2a1418;line-height:15px;transform:scaleX(1.1);transform-origin:0 0">C</div><div class="a" style="left:601.6px;top:491.6px;font-size:11.5px;font-weight:bold;font-style:italic;color:#f4f4f4;line-height:13px;text-shadow:0.8px 0.7px 0 #d02840;transform:scaleX(1.15);transform-origin:0 0">3</div>
<div class="a" style="left:663.6px;top:492px;font-size:6.2px;color:#fff">DE</div>
<div class="a" style="left:679.1px;top:494px;width:5.6px;height:5.6px;background:#b8a090;border-radius:50%;opacity:.8"></div>
<div class="a" style="left:690.5px;top:494px;width:5.6px;height:5.6px;background:#48a848;border-radius:30%;opacity:.8"></div>
<div class="a" style="left:700.7px;top:494px;width:5.6px;height:5.6px;background:#3a3010;border-radius:0;opacity:.8"></div>
<div class="a" style="left:712.4px;top:494px;width:5.6px;height:5.6px;background:#181818;border-radius:0;opacity:.8"></div>
<div class="a" style="left:723.3px;top:494px;width:5.6px;height:5.6px;background:#c8c8c8;border-radius:40%;opacity:.8"></div>
<div class="a" style="left:734.5px;top:494px;width:5.6px;height:5.6px;background:#c82020;border-radius:0;opacity:.8"></div>
<div class="a" style="left:746.0px;top:494px;width:5.6px;height:5.6px;background:#3888e0;border-radius:20%;opacity:.8"></div>
<div class="a" style="left:757.2px;top:494px;width:5.6px;height:5.6px;background:#f05028;border-radius:20%;opacity:.8"></div>
<div class="a" style="left:768.7px;top:494px;width:5.6px;height:5.6px;background:#e8e8e8;border-radius:30%;opacity:.8"></div>
<div class="a" style="left:779.9px;top:494px;width:5.6px;height:5.6px;background:#78b8e8;border-radius:0;opacity:.8"></div>
<div class="a" style="left:791.1px;top:494px;width:5.6px;height:5.6px;background:#181818;border-radius:0;opacity:.8"></div>
<div class="a" style="left:802.5px;top:494px;width:5.6px;height:5.6px;background:#e8c878;border-radius:40%;opacity:.8"></div>
<div class="a" style="left:813.7px;top:494px;width:5.6px;height:5.6px;background:#404040;border-radius:30%;opacity:.8"></div>
<div class="a" style="left:824.7px;top:494px;width:5.6px;height:5.6px;background:#d0d0d0;border-radius:0;opacity:.8"></div>
<div class="a" style="left:835.3px;top:494px;width:5.6px;height:5.6px;background:#e8e8e8;border-radius:50%;opacity:.8"></div>
<div class="a" style="left:847.1px;top:494px;width:5.6px;height:5.6px;background:#e8e8e8;border-radius:20%;opacity:.8"></div>
<div class="a" style="left:702px;top:495.2px;width:3px;height:2.6px;background:#e8b020"></div>
<div class="a" style="left:738px;top:496px;width:4px;height:3.6px;background:#30a030"></div>
<div class="a" style="left:851.6px;top:497.2px;width:3.6px;height:3.6px;border-radius:50%;background:#e02020"></div>
<div class="a c" style="left:855.5px;top:490.2px;width:40px;font-size:5.4px;color:#fff">12:49</div>
<div class="a c" style="left:853.3px;top:498.2px;width:40px;font-size:5.4px;color:#fff">04.09.2016</div>
<div class="a" style="left:894.6px;top:487.6px;width:5.4px;height:18.4px;background:linear-gradient(90deg,rgba(255,255,255,.1),rgba(255,255,255,.3));border-left:0.6px solid rgba(60,75,100,.7)"></div>
</div>
</body>
</html>
